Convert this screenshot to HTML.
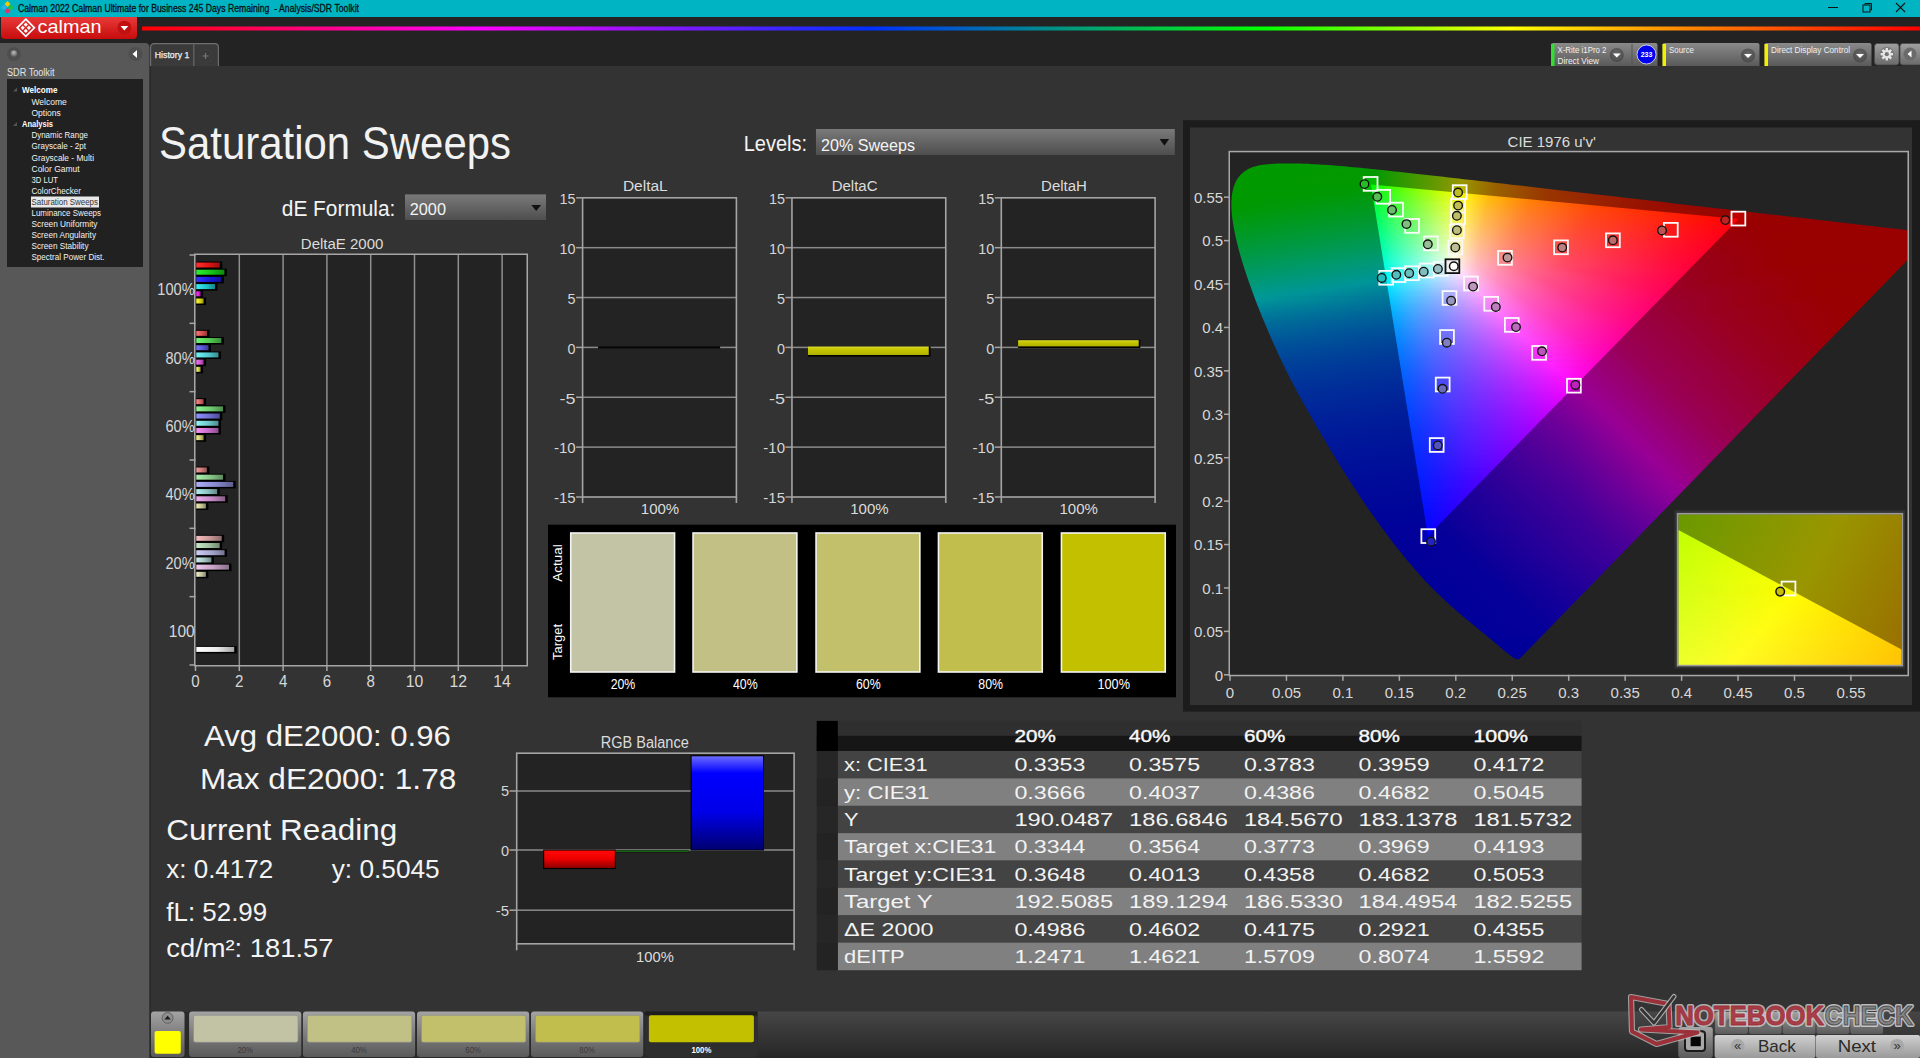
<!DOCTYPE html><html><head><meta charset="utf-8"><style>html,body{margin:0;padding:0;background:#333;overflow:hidden;width:1920px;height:1058px}svg{display:block;font-family:"Liberation Sans",sans-serif}</style></head><body><svg width="1920" height="1058" viewBox="0 0 1920 1058" font-family="Liberation Sans, sans-serif">
<defs>
<linearGradient id="logo" x1="0" y1="0" x2="0" y2="1"><stop offset="0" stop-color="#e83a3a"/><stop offset="1" stop-color="#c80c0c"/></linearGradient>
<linearGradient id="rainbow" x1="142" y1="0" x2="1920" y2="0" gradientUnits="userSpaceOnUse"><stop offset="0" stop-color="#ff0000"/><stop offset="0.19" stop-color="#ff00ff"/><stop offset="0.41" stop-color="#0030ff"/><stop offset="0.63" stop-color="#00ff00"/><stop offset="0.77" stop-color="#ffff00"/><stop offset="0.86" stop-color="#ff9000"/><stop offset="1" stop-color="#ff0000"/></linearGradient>
<linearGradient id="dd" x1="0" y1="0" x2="0" y2="1"><stop offset="0" stop-color="#7a7a7a"/><stop offset="1" stop-color="#4e4e4e"/></linearGradient>
<linearGradient id="ctl" x1="0" y1="0" x2="0" y2="1"><stop offset="0" stop-color="#8a8a8a"/><stop offset="1" stop-color="#5a5a5a"/></linearGradient>
<linearGradient id="tab" x1="0" y1="0" x2="0" y2="1"><stop offset="0" stop-color="#555"/><stop offset="1" stop-color="#3a3a3a"/></linearGradient>
<linearGradient id="btnb" x1="0" y1="0" x2="0" y2="1"><stop offset="0" stop-color="#b8b8b8"/><stop offset="1" stop-color="#8a8a8a"/></linearGradient>
<linearGradient id="strip" x1="0" y1="0" x2="0" y2="1"><stop offset="0" stop-color="#4a4a4a"/><stop offset="1" stop-color="#2a2a2a"/></linearGradient>
<linearGradient id="swb" x1="0" y1="0" x2="0" y2="1"><stop offset="0" stop-color="#8a8a8a"/><stop offset="1" stop-color="#4a4a4a"/></linearGradient>
<radialGradient id="knob" cx="0.5" cy="0.35" r="0.6"><stop offset="0" stop-color="#bbb"/><stop offset="1" stop-color="#666"/></radialGradient>
<radialGradient id="knobd" cx="0.5" cy="0.4" r="0.6"><stop offset="0" stop-color="#6a6a6a"/><stop offset="1" stop-color="#4a4a4a"/></radialGradient>
<linearGradient id="bluebar" x1="0" y1="0" x2="0" y2="1"><stop offset="0" stop-color="#2020ff"/><stop offset="0.6" stop-color="#0000e0"/><stop offset="1" stop-color="#000090"/></linearGradient>
<linearGradient id="redbar" x1="0" y1="0" x2="0" y2="1"><stop offset="0" stop-color="#ff1010"/><stop offset="1" stop-color="#c00000"/></linearGradient>
<linearGradient id="gbtn" x1="0" y1="0" x2="0" y2="1"><stop offset="0" stop-color="#a0a0a0"/><stop offset="1" stop-color="#6a6a6a"/></linearGradient>
<linearGradient id="hb1" x1="0" y1="0" x2="1" y2="0"><stop offset="0" stop-color="#ff2f2f"/><stop offset="0.55" stop-color="#dc1414"/><stop offset="1" stop-color="#9a0e0e"/></linearGradient>
<linearGradient id="hb2" x1="0" y1="0" x2="1" y2="0"><stop offset="0" stop-color="#2fef2f"/><stop offset="0.55" stop-color="#14c314"/><stop offset="1" stop-color="#0e880e"/></linearGradient>
<linearGradient id="hb3" x1="0" y1="0" x2="1" y2="0"><stop offset="0" stop-color="#3434ff"/><stop offset="0.55" stop-color="#1919d7"/><stop offset="1" stop-color="#111196"/></linearGradient>
<linearGradient id="hb4" x1="0" y1="0" x2="1" y2="0"><stop offset="0" stop-color="#3aeff5"/><stop offset="0.55" stop-color="#1ec3c8"/><stop offset="1" stop-color="#15888c"/></linearGradient>
<linearGradient id="hb5" x1="0" y1="0" x2="1" y2="0"><stop offset="0" stop-color="#ff3aff"/><stop offset="0.55" stop-color="#d71ed7"/><stop offset="1" stop-color="#961596"/></linearGradient>
<linearGradient id="hb6" x1="0" y1="0" x2="1" y2="0"><stop offset="0" stop-color="#ffff34"/><stop offset="0.55" stop-color="#d7d219"/><stop offset="1" stop-color="#969311"/></linearGradient>
<linearGradient id="hb7" x1="0" y1="0" x2="1" y2="0"><stop offset="0" stop-color="#ff7171"/><stop offset="0.55" stop-color="#d75050"/><stop offset="1" stop-color="#963838"/></linearGradient>
<linearGradient id="hb8" x1="0" y1="0" x2="1" y2="0"><stop offset="0" stop-color="#71f571"/><stop offset="0.55" stop-color="#50c850"/><stop offset="1" stop-color="#388c38"/></linearGradient>
<linearGradient id="hb9" x1="0" y1="0" x2="1" y2="0"><stop offset="0" stop-color="#7676ff"/><stop offset="0.55" stop-color="#5555d2"/><stop offset="1" stop-color="#3b3b93"/></linearGradient>
<linearGradient id="hb10" x1="0" y1="0" x2="1" y2="0"><stop offset="0" stop-color="#71f5fa"/><stop offset="0.55" stop-color="#50c8cd"/><stop offset="1" stop-color="#388c8f"/></linearGradient>
<linearGradient id="hb11" x1="0" y1="0" x2="1" y2="0"><stop offset="0" stop-color="#fa76fa"/><stop offset="0.55" stop-color="#cd55cd"/><stop offset="1" stop-color="#8f3b8f"/></linearGradient>
<linearGradient id="hb12" x1="0" y1="0" x2="1" y2="0"><stop offset="0" stop-color="#fafa76"/><stop offset="0.55" stop-color="#cdcd55"/><stop offset="1" stop-color="#8f8f3b"/></linearGradient>
<linearGradient id="hb13" x1="0" y1="0" x2="1" y2="0"><stop offset="0" stop-color="#ff8787"/><stop offset="0.55" stop-color="#d26464"/><stop offset="1" stop-color="#934646"/></linearGradient>
<linearGradient id="hb14" x1="0" y1="0" x2="1" y2="0"><stop offset="0" stop-color="#92f592"/><stop offset="0.55" stop-color="#6ec86e"/><stop offset="1" stop-color="#4d8c4d"/></linearGradient>
<linearGradient id="hb15" x1="0" y1="0" x2="1" y2="0"><stop offset="0" stop-color="#9292ff"/><stop offset="0.55" stop-color="#6e6ed2"/><stop offset="1" stop-color="#4d4d93"/></linearGradient>
<linearGradient id="hb16" x1="0" y1="0" x2="1" y2="0"><stop offset="0" stop-color="#92f5f5"/><stop offset="0.55" stop-color="#6ec8c8"/><stop offset="1" stop-color="#4d8c8c"/></linearGradient>
<linearGradient id="hb17" x1="0" y1="0" x2="1" y2="0"><stop offset="0" stop-color="#f592f5"/><stop offset="0.55" stop-color="#c86ec8"/><stop offset="1" stop-color="#8c4d8c"/></linearGradient>
<linearGradient id="hb18" x1="0" y1="0" x2="1" y2="0"><stop offset="0" stop-color="#f5f592"/><stop offset="0.55" stop-color="#c8c86e"/><stop offset="1" stop-color="#8c8c4d"/></linearGradient>
<linearGradient id="hb19" x1="0" y1="0" x2="1" y2="0"><stop offset="0" stop-color="#f59d9d"/><stop offset="0.55" stop-color="#c87878"/><stop offset="1" stop-color="#8c5454"/></linearGradient>
<linearGradient id="hb20" x1="0" y1="0" x2="1" y2="0"><stop offset="0" stop-color="#adefad"/><stop offset="0.55" stop-color="#87c387"/><stop offset="1" stop-color="#5e885e"/></linearGradient>
<linearGradient id="hb21" x1="0" y1="0" x2="1" y2="0"><stop offset="0" stop-color="#adadfa"/><stop offset="0.55" stop-color="#8787cd"/><stop offset="1" stop-color="#5e5e8f"/></linearGradient>
<linearGradient id="hb22" x1="0" y1="0" x2="1" y2="0"><stop offset="0" stop-color="#b3efef"/><stop offset="0.55" stop-color="#8cc3c3"/><stop offset="1" stop-color="#628888"/></linearGradient>
<linearGradient id="hb23" x1="0" y1="0" x2="1" y2="0"><stop offset="0" stop-color="#efadef"/><stop offset="0.55" stop-color="#c387c3"/><stop offset="1" stop-color="#885e88"/></linearGradient>
<linearGradient id="hb24" x1="0" y1="0" x2="1" y2="0"><stop offset="0" stop-color="#efefb3"/><stop offset="0.55" stop-color="#c3c38c"/><stop offset="1" stop-color="#888862"/></linearGradient>
<linearGradient id="hb25" x1="0" y1="0" x2="1" y2="0"><stop offset="0" stop-color="#f5bebe"/><stop offset="0.55" stop-color="#c89696"/><stop offset="1" stop-color="#8c6969"/></linearGradient>
<linearGradient id="hb26" x1="0" y1="0" x2="1" y2="0"><stop offset="0" stop-color="#c9eac9"/><stop offset="0.55" stop-color="#a0bea0"/><stop offset="1" stop-color="#708570"/></linearGradient>
<linearGradient id="hb27" x1="0" y1="0" x2="1" y2="0"><stop offset="0" stop-color="#cecefa"/><stop offset="0.55" stop-color="#a5a5cd"/><stop offset="1" stop-color="#73738f"/></linearGradient>
<linearGradient id="hb28" x1="0" y1="0" x2="1" y2="0"><stop offset="0" stop-color="#ceefef"/><stop offset="0.55" stop-color="#a5c3c3"/><stop offset="1" stop-color="#738888"/></linearGradient>
<linearGradient id="hb29" x1="0" y1="0" x2="1" y2="0"><stop offset="0" stop-color="#efc9ef"/><stop offset="0.55" stop-color="#c3a0c3"/><stop offset="1" stop-color="#887088"/></linearGradient>
<linearGradient id="hb30" x1="0" y1="0" x2="1" y2="0"><stop offset="0" stop-color="#efefc9"/><stop offset="0.55" stop-color="#c3c3a0"/><stop offset="1" stop-color="#888870"/></linearGradient>
<linearGradient id="hb31" x1="0" y1="0" x2="1" y2="0"><stop offset="0" stop-color="#ffffff"/><stop offset="0.55" stop-color="#ebebeb"/><stop offset="1" stop-color="#a4a4a4"/></linearGradient>
<linearGradient id="ybar" x1="0" y1="0" x2="0" y2="1"><stop offset="0" stop-color="#dada30"/><stop offset="0.35" stop-color="#c6c600"/><stop offset="1" stop-color="#b0b000"/></linearGradient>
<clipPath id="locclip"><path d="M1519.73,658.59 L1519.71,658.59 L1519.68,658.58 L1519.65,658.57 L1519.62,658.57 L1519.58,658.57 L1519.54,658.59 L1519.51,658.62 L1519.47,658.67 L1519.43,658.73 L1519.39,658.79 L1519.35,658.84 L1519.30,658.87 L1519.24,658.89 L1519.18,658.89 L1519.12,658.88 L1519.05,658.87 L1518.99,658.86 L1518.92,658.88 L1518.85,658.91 L1518.78,658.96 L1518.71,659.02 L1518.64,659.08 L1518.56,659.13 L1518.48,659.16 L1518.40,659.18 L1518.31,659.18 L1518.22,659.18 L1518.13,659.17 L1518.03,659.17 L1517.92,659.17 L1517.81,659.17 L1517.69,659.17 L1517.57,659.17 L1517.44,659.17 L1517.31,659.17 L1517.17,659.17 L1517.03,659.18 L1516.90,659.20 L1516.76,659.22 L1516.61,659.23 L1516.43,659.22 L1516.23,659.17 L1516.01,659.10 L1515.77,659.00 L1515.51,658.88 L1515.22,658.73 L1514.90,658.55 L1514.54,658.34 L1514.14,658.09 L1513.70,657.81 L1513.22,657.50 L1512.71,657.16 L1512.18,656.79 L1511.62,656.39 L1511.04,655.96 L1510.44,655.52 L1509.82,655.04 L1509.15,654.52 L1508.44,653.96 L1507.67,653.35 L1506.84,652.69 L1505.95,651.99 L1505.02,651.24 L1504.04,650.44 L1503.02,649.61 L1501.96,648.73 L1500.87,647.81 L1499.74,646.85 L1498.57,645.84 L1497.36,644.80 L1496.09,643.72 L1494.76,642.60 L1493.39,641.45 L1491.98,640.27 L1490.51,639.06 L1488.98,637.80 L1487.37,636.47 L1485.67,635.07 L1483.87,633.59 L1481.99,632.06 L1480.03,630.46 L1477.99,628.79 L1475.89,627.07 L1473.73,625.28 L1471.52,623.46 L1469.25,621.59 L1466.91,619.66 L1464.49,617.65 L1461.98,615.53 L1459.37,613.27 L1456.66,610.91 L1453.87,608.46 L1450.98,605.91 L1448.00,603.22 L1444.92,600.38 L1441.74,597.35 L1438.49,594.23 L1435.20,591.04 L1431.80,587.69 L1428.26,584.10 L1424.53,580.16 L1420.56,575.79 L1416.34,570.99 L1411.89,565.86 L1407.26,560.39 L1402.46,554.57 L1397.52,548.40 L1392.46,541.89 L1387.26,535.01 L1381.88,527.77 L1376.37,520.19 L1370.74,512.28 L1365.04,504.05 L1359.29,495.52 L1353.44,486.61 L1347.45,477.30 L1341.38,467.67 L1335.30,457.82 L1329.25,447.83 L1323.30,437.81 L1317.36,427.65 L1311.37,417.27 L1305.42,406.75 L1299.60,396.20 L1293.98,385.72 L1288.66,375.41 L1283.61,365.17 L1278.75,354.91 L1274.11,344.71 L1269.69,334.68 L1265.51,324.91 L1261.59,315.50 L1257.92,306.39 L1254.50,297.48 L1251.31,288.84 L1248.37,280.52 L1245.67,272.55 L1243.22,264.99 L1241.04,257.85 L1239.13,251.09 L1237.47,244.70 L1236.03,238.64 L1234.79,232.90 L1233.72,227.45 L1232.85,222.34 L1232.20,217.59 L1231.75,213.16 L1231.48,209.00 L1231.38,205.07 L1231.42,201.32 L1231.63,197.78 L1232.01,194.48 L1232.55,191.42 L1233.25,188.56 L1234.08,185.88 L1235.04,183.36 L1236.15,181.01 L1237.41,178.87 L1238.82,176.90 L1240.34,175.10 L1241.97,173.46 L1243.67,171.96 L1245.47,170.63 L1247.39,169.47 L1249.41,168.47 L1251.52,167.60 L1253.68,166.84 L1255.90,166.14 L1258.17,165.55 L1260.53,165.10 L1262.95,164.74 L1265.42,164.46 L1267.92,164.22 L1270.45,163.99 L1273.02,163.80 L1275.63,163.67 L1278.29,163.58 L1280.96,163.53 L1283.64,163.49 L1286.32,163.46 L1288.98,163.45 L1291.64,163.45 L1294.32,163.48 L1297.00,163.53 L1299.71,163.59 L1302.43,163.66 L1305.18,163.76 L1307.94,163.86 L1310.71,163.99 L1313.52,164.13 L1316.36,164.28 L1319.24,164.45 L1322.17,164.63 L1325.13,164.83 L1328.12,165.04 L1331.16,165.27 L1334.23,165.51 L1337.36,165.76 L1340.53,166.02 L1343.73,166.30 L1346.98,166.59 L1350.28,166.89 L1353.63,167.21 L1357.04,167.53 L1360.50,167.87 L1364.02,168.21 L1367.59,168.57 L1371.21,168.94 L1374.90,169.33 L1378.67,169.72 L1382.50,170.12 L1386.39,170.53 L1390.35,170.95 L1394.38,171.39 L1398.48,171.83 L1402.65,172.29 L1406.89,172.75 L1411.20,173.23 L1415.57,173.72 L1420.02,174.22 L1424.55,174.73 L1429.17,175.25 L1433.86,175.78 L1438.64,176.31 L1443.49,176.86 L1448.42,177.42 L1453.44,177.99 L1458.53,178.56 L1463.71,179.15 L1468.96,179.75 L1474.30,180.37 L1479.71,180.99 L1485.21,181.62 L1490.79,182.26 L1496.46,182.91 L1502.20,183.57 L1508.03,184.24 L1513.94,184.93 L1519.93,185.62 L1525.99,186.31 L1532.13,187.02 L1538.35,187.74 L1544.65,188.46 L1551.02,189.20 L1557.45,189.94 L1563.94,190.68 L1570.49,191.43 L1577.12,192.19 L1583.81,192.96 L1590.55,193.73 L1597.31,194.50 L1604.09,195.28 L1610.92,196.07 L1617.81,196.86 L1624.73,197.66 L1631.64,198.46 L1638.53,199.26 L1645.34,200.05 L1652.09,200.82 L1658.80,201.60 L1665.48,202.36 L1672.12,203.13 L1678.74,203.89 L1685.32,204.64 L1691.91,205.40 L1698.51,206.16 L1705.08,206.91 L1711.58,207.66 L1717.98,208.39 L1724.24,209.11 L1730.37,209.81 L1736.41,210.50 L1742.35,211.18 L1748.18,211.84 L1753.90,212.49 L1759.49,213.13 L1764.98,213.76 L1770.35,214.38 L1775.62,214.99 L1780.76,215.58 L1785.77,216.16 L1790.65,216.73 L1795.39,217.27 L1799.99,217.81 L1804.47,218.32 L1808.82,218.83 L1813.05,219.31 L1817.17,219.79 L1821.16,220.24 L1825.02,220.68 L1828.76,221.11 L1832.39,221.52 L1835.92,221.93 L1839.37,222.32 L1842.72,222.71 L1845.96,223.08 L1849.10,223.44 L1852.16,223.80 L1855.16,224.14 L1858.09,224.48 L1860.97,224.81 L1863.78,225.14 L1866.52,225.45 L1869.19,225.76 L1871.79,226.06 L1874.32,226.35 L1876.79,226.64 L1879.18,226.92 L1881.51,227.19 L1883.76,227.45 L1885.94,227.70 L1888.05,227.94 L1890.08,228.17 L1892.03,228.39 L1893.92,228.60 L1895.73,228.80 L1897.47,229.00 L1899.15,229.19 L1900.69,229.36 L1902.09,229.52 L1903.41,229.68 L1904.75,229.83 L1906.17,230.00 L1907.76,230.18 L1909.55,230.39 L1911.49,230.61 L1913.52,230.85 L1915.57,231.08 L1917.58,231.31 L1919.48,231.53 L1921.34,231.75 L1923.22,231.96 L1925.06,232.18 L1926.79,232.38 L1928.35,232.56 L1929.66,232.71 L1930.73,232.83 L1931.59,232.93 L1932.27,233.01 L1932.82,233.07 L1933.25,233.12 L1933.61,233.16 Z"/></clipPath>
<clipPath id="plotclip"><rect x="1230.0" y="152.3" width="677.5" height="522.5"/></clipPath>
<clipPath id="triclip"><path d="M1738.65,218.92 L1370.92,184.53 L1427.87,535.88 Z"/></clipPath>
<linearGradient id="go0" gradientUnits="userSpaceOnUse" x1="1259.0" x2="1329.0" y1="0" y2="0"><stop offset="0.0071" stop-color="#090"/><stop offset="0.9929" stop-color="#090"/></linearGradient>
<linearGradient id="go1" gradientUnits="userSpaceOnUse" x1="1250.0" x2="1354.0" y1="0" y2="0"><stop offset="0.0048" stop-color="#090"/><stop offset="0.9952" stop-color="#090"/></linearGradient>
<linearGradient id="go2" gradientUnits="userSpaceOnUse" x1="1246.0" x2="1375.0" y1="0" y2="0"><stop offset="0.0039" stop-color="#090"/><stop offset="0.9961" stop-color="#039900"/></linearGradient>
<linearGradient id="go3" gradientUnits="userSpaceOnUse" x1="1242.0" x2="1394.0" y1="0" y2="0"><stop offset="0.0033" stop-color="#090"/><stop offset="0.8783" stop-color="#049900"/><stop offset="0.9967" stop-color="#1d9900"/></linearGradient>
<linearGradient id="go4" gradientUnits="userSpaceOnUse" x1="1239.0" x2="1410.0" y1="0" y2="0"><stop offset="0.0029" stop-color="#090"/><stop offset="0.7924" stop-color="#039900"/><stop offset="0.9971" stop-color="#359900"/></linearGradient>
<linearGradient id="go5" gradientUnits="userSpaceOnUse" x1="1238.0" x2="1428.0" y1="0" y2="0"><stop offset="0.0026" stop-color="#090"/><stop offset="0.7184" stop-color="#039900"/><stop offset="0.9974" stop-color="#549900"/></linearGradient>
<linearGradient id="go6" gradientUnits="userSpaceOnUse" x1="1235.0" x2="1447.0" y1="0" y2="0"><stop offset="0.0024" stop-color="#090"/><stop offset="0.6580" stop-color="#039900"/><stop offset="0.9316" stop-color="#5e9900"/><stop offset="0.9976" stop-color="#799900"/></linearGradient>
<linearGradient id="go7" gradientUnits="userSpaceOnUse" x1="1234.0" x2="1462.0" y1="0" y2="0"><stop offset="0.0022" stop-color="#090"/><stop offset="0.6162" stop-color="#049900"/><stop offset="0.8706" stop-color="#5e9900"/><stop offset="0.9978" stop-color="#990"/></linearGradient>
<linearGradient id="go8" gradientUnits="userSpaceOnUse" x1="1233.0" x2="1483.0" y1="0" y2="0"><stop offset="0.0020" stop-color="#090"/><stop offset="0.5660" stop-color="#049900"/><stop offset="0.7980" stop-color="#5e9900"/><stop offset="0.9180" stop-color="#999600"/><stop offset="0.9980" stop-color="#997300"/></linearGradient>
<linearGradient id="go9" gradientUnits="userSpaceOnUse" x1="1233.0" x2="1500.0" y1="0" y2="0"><stop offset="0.0019" stop-color="#090"/><stop offset="0.5262" stop-color="#039900"/><stop offset="0.7472" stop-color="#5f9900"/><stop offset="0.8596" stop-color="#999600"/><stop offset="0.9794" stop-color="#996200"/><stop offset="0.9981" stop-color="#995d00"/></linearGradient>
<linearGradient id="go10" gradientUnits="userSpaceOnUse" x1="1232.0" x2="1517.0" y1="0" y2="0"><stop offset="0.0018" stop-color="#090"/><stop offset="0.4965" stop-color="#039900"/><stop offset="0.7035" stop-color="#5f9900"/><stop offset="0.8088" stop-color="#999600"/><stop offset="0.9211" stop-color="#996200"/><stop offset="0.9982" stop-color="#994c00"/></linearGradient>
<linearGradient id="go11" gradientUnits="userSpaceOnUse" x1="1231.0" x2="1529.0" y1="0" y2="0"><stop offset="0.0017" stop-color="#090"/><stop offset="0.4782" stop-color="#039900"/><stop offset="0.6728" stop-color="#5d9900"/><stop offset="0.7768" stop-color="#999500"/><stop offset="0.8842" stop-color="#996200"/><stop offset="0.9983" stop-color="#994200"/></linearGradient>
<linearGradient id="go12" gradientUnits="userSpaceOnUse" x1="1230.0" x2="1548.0" y1="0" y2="0"><stop offset="0.0016" stop-color="#090"/><stop offset="0.4513" stop-color="#009903"/><stop offset="0.6651" stop-color="#719900"/><stop offset="0.7311" stop-color="#999500"/><stop offset="0.8318" stop-color="#996200"/><stop offset="0.9984" stop-color="#993600"/></linearGradient>
<linearGradient id="go13" gradientUnits="userSpaceOnUse" x1="1230.0" x2="1567.0" y1="0" y2="0"><stop offset="0.0015" stop-color="#090"/><stop offset="0.4110" stop-color="#009905"/><stop offset="0.4318" stop-color="#009906"/><stop offset="0.4377" stop-color="#099900"/><stop offset="0.6068" stop-color="#649900"/><stop offset="0.6869" stop-color="#999700"/><stop offset="0.7819" stop-color="#996300"/><stop offset="0.9392" stop-color="#993600"/><stop offset="0.9985" stop-color="#992c00"/></linearGradient>
<linearGradient id="go14" gradientUnits="userSpaceOnUse" x1="1230.0" x2="1587.0" y1="0" y2="0"><stop offset="0.0014" stop-color="#090"/><stop offset="0.3543" stop-color="#009905"/><stop offset="0.4132" stop-color="#009909"/><stop offset="0.4160" stop-color="#0b9900"/><stop offset="0.5756" stop-color="#690"/><stop offset="0.6485" stop-color="#999600"/><stop offset="0.7381" stop-color="#996200"/><stop offset="0.8866" stop-color="#993600"/><stop offset="0.9986" stop-color="#992300"/></linearGradient>
<linearGradient id="go15" gradientUnits="userSpaceOnUse" x1="1230.0" x2="1601.0" y1="0" y2="0"><stop offset="0.0013" stop-color="#090"/><stop offset="0.3113" stop-color="#009905"/><stop offset="0.4030" stop-color="#00990c"/><stop offset="0.4057" stop-color="#0e9900"/><stop offset="0.5593" stop-color="#6a9900"/><stop offset="0.6240" stop-color="#999600"/><stop offset="0.7102" stop-color="#996200"/><stop offset="0.8531" stop-color="#993600"/><stop offset="0.9987" stop-color="#991e00"/></linearGradient>
<linearGradient id="go16" gradientUnits="userSpaceOnUse" x1="1230.0" x2="1621.0" y1="0" y2="0"><stop offset="0.0013" stop-color="#090"/><stop offset="0.2673" stop-color="#009905"/><stop offset="0.3875" stop-color="#00990f"/><stop offset="0.3900" stop-color="#190"/><stop offset="0.5332" stop-color="#6c9900"/><stop offset="0.5921" stop-color="#999500"/><stop offset="0.6739" stop-color="#996200"/><stop offset="0.8095" stop-color="#993600"/><stop offset="0.9987" stop-color="#991800"/></linearGradient>
<linearGradient id="go17" gradientUnits="userSpaceOnUse" x1="1230.0" x2="1635.0" y1="0" y2="0"><stop offset="0.0012" stop-color="#090"/><stop offset="0.2333" stop-color="#009906"/><stop offset="0.3790" stop-color="#009912"/><stop offset="0.3815" stop-color="#149900"/><stop offset="0.5198" stop-color="#719900"/><stop offset="0.5716" stop-color="#999500"/><stop offset="0.6506" stop-color="#996200"/><stop offset="0.7815" stop-color="#993600"/><stop offset="0.9988" stop-color="#991400"/></linearGradient>
<linearGradient id="go18" gradientUnits="userSpaceOnUse" x1="1230.0" x2="1656.0" y1="0" y2="0"><stop offset="0.0012" stop-color="#090"/><stop offset="0.2007" stop-color="#009907"/><stop offset="0.3650" stop-color="#009915"/><stop offset="0.3674" stop-color="#179900"/><stop offset="0.4965" stop-color="#739900"/><stop offset="0.5434" stop-color="#999500"/><stop offset="0.6209" stop-color="#996000"/><stop offset="0.7477" stop-color="#993500"/><stop offset="0.9800" stop-color="#991000"/><stop offset="0.9988" stop-color="#990f00"/></linearGradient>
<linearGradient id="go19" gradientUnits="userSpaceOnUse" x1="1230.0" x2="1669.0" y1="0" y2="0"><stop offset="0.0011" stop-color="#090"/><stop offset="0.1879" stop-color="#009908"/><stop offset="0.3610" stop-color="#009918"/><stop offset="0.3633" stop-color="#1b9900"/><stop offset="0.4863" stop-color="#790"/><stop offset="0.5251" stop-color="#999600"/><stop offset="0.5979" stop-color="#996300"/><stop offset="0.7187" stop-color="#993600"/><stop offset="0.9396" stop-color="#991200"/><stop offset="0.9989" stop-color="#990c00"/></linearGradient>
<linearGradient id="go20" gradientUnits="userSpaceOnUse" x1="1230.0" x2="1689.0" y1="0" y2="0"><stop offset="0.0011" stop-color="#090"/><stop offset="0.2451" stop-color="#091"/><stop offset="0.3497" stop-color="#00991b"/><stop offset="0.3519" stop-color="#1f9900"/><stop offset="0.4695" stop-color="#7c9900"/><stop offset="0.5022" stop-color="#999600"/><stop offset="0.5719" stop-color="#996200"/><stop offset="0.6874" stop-color="#993600"/><stop offset="0.8987" stop-color="#991200"/><stop offset="0.9989" stop-color="#990800"/></linearGradient>
<linearGradient id="go21" gradientUnits="userSpaceOnUse" x1="1230.0" x2="1709.0" y1="0" y2="0"><stop offset="0.0010" stop-color="#090"/><stop offset="0.3392" stop-color="#00991e"/><stop offset="0.3413" stop-color="#290"/><stop offset="0.4520" stop-color="#7e9900"/><stop offset="0.4812" stop-color="#999600"/><stop offset="0.5480" stop-color="#996200"/><stop offset="0.6587" stop-color="#993600"/><stop offset="0.8612" stop-color="#910"/><stop offset="0.9990" stop-color="#990500"/></linearGradient>
<linearGradient id="go22" gradientUnits="userSpaceOnUse" x1="1230.0" x2="1721.0" y1="0" y2="0"><stop offset="0.0010" stop-color="#090"/><stop offset="0.3350" stop-color="#009921"/><stop offset="0.3371" stop-color="#259900"/><stop offset="0.4450" stop-color="#839900"/><stop offset="0.4695" stop-color="#999500"/><stop offset="0.5346" stop-color="#996200"/><stop offset="0.6426" stop-color="#993600"/><stop offset="0.8401" stop-color="#910"/><stop offset="0.9990" stop-color="#990300"/></linearGradient>
<linearGradient id="go23" gradientUnits="userSpaceOnUse" x1="1230.0" x2="1740.0" y1="0" y2="0"><stop offset="0.0010" stop-color="#009902"/><stop offset="0.3265" stop-color="#009925"/><stop offset="0.3284" stop-color="#289900"/><stop offset="0.4324" stop-color="#879900"/><stop offset="0.4520" stop-color="#999500"/><stop offset="0.5167" stop-color="#996000"/><stop offset="0.6225" stop-color="#993500"/><stop offset="0.8167" stop-color="#991000"/><stop offset="0.9990" stop-color="#900"/></linearGradient>
<linearGradient id="go24" gradientUnits="userSpaceOnUse" x1="1230.0" x2="1757.0" y1="0" y2="0"><stop offset="0.0009" stop-color="#009904"/><stop offset="0.3197" stop-color="#009928"/><stop offset="0.3216" stop-color="#2c9900"/><stop offset="0.4203" stop-color="#8a9900"/><stop offset="0.4374" stop-color="#999400"/><stop offset="0.5000" stop-color="#996000"/><stop offset="0.6025" stop-color="#993400"/><stop offset="0.7903" stop-color="#991000"/><stop offset="0.9991" stop-color="#900"/></linearGradient>
<linearGradient id="go25" gradientUnits="userSpaceOnUse" x1="1230.0" x2="1779.0" y1="0" y2="0"><stop offset="0.0009" stop-color="#009907"/><stop offset="0.3106" stop-color="#00992b"/><stop offset="0.3124" stop-color="#2f9900"/><stop offset="0.4071" stop-color="#8f9900"/><stop offset="0.4217" stop-color="#999200"/><stop offset="0.4818" stop-color="#995f00"/><stop offset="0.5820" stop-color="#930"/><stop offset="0.7659" stop-color="#990f00"/><stop offset="0.9827" stop-color="#900"/><stop offset="0.9991" stop-color="#900"/></linearGradient>
<linearGradient id="go26" gradientUnits="userSpaceOnUse" x1="1230.0" x2="1794.0" y1="0" y2="0"><stop offset="0.0009" stop-color="#009909"/><stop offset="0.3076" stop-color="#00992f"/><stop offset="0.3094" stop-color="#349900"/><stop offset="0.3998" stop-color="#939900"/><stop offset="0.4176" stop-color="#998900"/><stop offset="0.4814" stop-color="#995700"/><stop offset="0.5878" stop-color="#992d00"/><stop offset="0.7881" stop-color="#990a00"/><stop offset="0.9743" stop-color="#900"/><stop offset="0.9991" stop-color="#900"/></linearGradient>
<linearGradient id="go27" gradientUnits="userSpaceOnUse" x1="1230.0" x2="1812.0" y1="0" y2="0"><stop offset="0.0009" stop-color="#00990c"/><stop offset="0.3015" stop-color="#009932"/><stop offset="0.3033" stop-color="#389900"/><stop offset="0.3943" stop-color="#999500"/><stop offset="0.4493" stop-color="#996200"/><stop offset="0.5404" stop-color="#993600"/><stop offset="0.7070" stop-color="#910"/><stop offset="0.9235" stop-color="#900"/><stop offset="0.9991" stop-color="#900"/></linearGradient>
<linearGradient id="go28" gradientUnits="userSpaceOnUse" x1="1230.0" x2="1829.0" y1="0" y2="0"><stop offset="0.0008" stop-color="#00990e"/><stop offset="0.2963" stop-color="#009936"/><stop offset="0.2980" stop-color="#3b9900"/><stop offset="0.3831" stop-color="#999500"/><stop offset="0.4366" stop-color="#996200"/><stop offset="0.5250" stop-color="#993600"/><stop offset="0.6870" stop-color="#910"/><stop offset="0.8957" stop-color="#900"/><stop offset="0.9992" stop-color="#900"/></linearGradient>
<linearGradient id="go29" gradientUnits="userSpaceOnUse" x1="1230.0" x2="1846.0" y1="0" y2="0"><stop offset="0.0008" stop-color="#091"/><stop offset="0.2914" stop-color="#009939"/><stop offset="0.2930" stop-color="#3f9900"/><stop offset="0.3709" stop-color="#999700"/><stop offset="0.4229" stop-color="#996300"/><stop offset="0.5089" stop-color="#993600"/><stop offset="0.6648" stop-color="#991200"/><stop offset="0.8612" stop-color="#900"/><stop offset="0.9992" stop-color="#900"/></linearGradient>
<linearGradient id="go30" gradientUnits="userSpaceOnUse" x1="1230.0" x2="1864.0" y1="0" y2="0"><stop offset="0.0008" stop-color="#009913"/><stop offset="0.2863" stop-color="#00993d"/><stop offset="0.2879" stop-color="#429900"/><stop offset="0.3604" stop-color="#999600"/><stop offset="0.4109" stop-color="#996200"/><stop offset="0.4945" stop-color="#993600"/><stop offset="0.6475" stop-color="#991200"/><stop offset="0.8273" stop-color="#900"/><stop offset="0.9992" stop-color="#900"/></linearGradient>
<linearGradient id="go31" gradientUnits="userSpaceOnUse" x1="1230.0" x2="1883.0" y1="0" y2="0"><stop offset="0.0008" stop-color="#009916"/><stop offset="0.2810" stop-color="#009940"/><stop offset="0.2825" stop-color="#469900"/><stop offset="0.3499" stop-color="#999600"/><stop offset="0.3989" stop-color="#996200"/><stop offset="0.4801" stop-color="#993600"/><stop offset="0.6286" stop-color="#910"/><stop offset="0.7787" stop-color="#990001"/><stop offset="0.9992" stop-color="#900"/></linearGradient>
<linearGradient id="go32" gradientUnits="userSpaceOnUse" x1="1230.0" x2="1901.0" y1="0" y2="0"><stop offset="0.0007" stop-color="#009919"/><stop offset="0.2765" stop-color="#094"/><stop offset="0.2779" stop-color="#4a9900"/><stop offset="0.3405" stop-color="#999500"/><stop offset="0.3882" stop-color="#996200"/><stop offset="0.4672" stop-color="#993600"/><stop offset="0.6118" stop-color="#910"/><stop offset="0.7250" stop-color="#990300"/><stop offset="0.7280" stop-color="#990006"/><stop offset="0.8428" stop-color="#900"/><stop offset="0.9993" stop-color="#900"/></linearGradient>
<linearGradient id="go33" gradientUnits="userSpaceOnUse" x1="1230.0" x2="1907.5" y1="0" y2="0"><stop offset="0.0007" stop-color="#00991b"/><stop offset="0.2782" stop-color="#009948"/><stop offset="0.2797" stop-color="#4f9900"/><stop offset="0.3373" stop-color="#999500"/><stop offset="0.3845" stop-color="#996200"/><stop offset="0.4627" stop-color="#993600"/><stop offset="0.6059" stop-color="#910"/><stop offset="0.7092" stop-color="#990400"/><stop offset="0.7107" stop-color="#990009"/><stop offset="0.8155" stop-color="#900"/><stop offset="1.0000" stop-color="#900"/></linearGradient>
<linearGradient id="go34" gradientUnits="userSpaceOnUse" x1="1231.0" x2="1907.5" y1="0" y2="0"><stop offset="0.0007" stop-color="#00991e"/><stop offset="0.2801" stop-color="#00994c"/><stop offset="0.2816" stop-color="#539900"/><stop offset="0.3348" stop-color="#999700"/><stop offset="0.3821" stop-color="#996300"/><stop offset="0.4605" stop-color="#993600"/><stop offset="0.6024" stop-color="#991200"/><stop offset="0.7014" stop-color="#990500"/><stop offset="0.7029" stop-color="#99000a"/><stop offset="0.8108" stop-color="#900"/><stop offset="1.0000" stop-color="#900"/></linearGradient>
<linearGradient id="go35" gradientUnits="userSpaceOnUse" x1="1231.0" x2="1907.5" y1="0" y2="0"><stop offset="0.0007" stop-color="#009921"/><stop offset="0.2831" stop-color="#009950"/><stop offset="0.2846" stop-color="#579900"/><stop offset="0.3348" stop-color="#999600"/><stop offset="0.3821" stop-color="#996300"/><stop offset="0.4605" stop-color="#993600"/><stop offset="0.6024" stop-color="#991200"/><stop offset="0.6925" stop-color="#990600"/><stop offset="0.6940" stop-color="#99000c"/><stop offset="0.8093" stop-color="#900"/><stop offset="1.0000" stop-color="#900"/></linearGradient>
<linearGradient id="go36" gradientUnits="userSpaceOnUse" x1="1232.0" x2="1907.5" y1="0" y2="0"><stop offset="0.0007" stop-color="#009924"/><stop offset="0.2850" stop-color="#009954"/><stop offset="0.2865" stop-color="#5b9900"/><stop offset="0.3338" stop-color="#999600"/><stop offset="0.3812" stop-color="#996200"/><stop offset="0.4597" stop-color="#993600"/><stop offset="0.6033" stop-color="#991200"/><stop offset="0.6847" stop-color="#990600"/><stop offset="0.6862" stop-color="#99000e"/><stop offset="0.8090" stop-color="#900"/><stop offset="1.0000" stop-color="#900"/></linearGradient>
<linearGradient id="go37" gradientUnits="userSpaceOnUse" x1="1232.0" x2="1907.5" y1="0" y2="0"><stop offset="0.0007" stop-color="#009927"/><stop offset="0.2879" stop-color="#009957"/><stop offset="0.2894" stop-color="#5f9900"/><stop offset="0.3338" stop-color="#999600"/><stop offset="0.3812" stop-color="#996200"/><stop offset="0.4597" stop-color="#993600"/><stop offset="0.6033" stop-color="#910"/><stop offset="0.6758" stop-color="#990700"/><stop offset="0.6773" stop-color="#990010"/><stop offset="0.8090" stop-color="#900"/><stop offset="1.0000" stop-color="#900"/></linearGradient>
<linearGradient id="go38" gradientUnits="userSpaceOnUse" x1="1233.0" x2="1907.5" y1="0" y2="0"><stop offset="0.0007" stop-color="#00992a"/><stop offset="0.2898" stop-color="#00995b"/><stop offset="0.2913" stop-color="#639900"/><stop offset="0.3328" stop-color="#999500"/><stop offset="0.3803" stop-color="#996200"/><stop offset="0.4589" stop-color="#993600"/><stop offset="0.6027" stop-color="#910"/><stop offset="0.6679" stop-color="#990800"/><stop offset="0.6694" stop-color="#990012"/><stop offset="0.8102" stop-color="#900"/><stop offset="1.0000" stop-color="#900"/></linearGradient>
<linearGradient id="go39" gradientUnits="userSpaceOnUse" x1="1233.0" x2="1907.5" y1="0" y2="0"><stop offset="0.0007" stop-color="#00992d"/><stop offset="0.2928" stop-color="#009960"/><stop offset="0.2943" stop-color="#679900"/><stop offset="0.3328" stop-color="#999500"/><stop offset="0.3818" stop-color="#996000"/><stop offset="0.4618" stop-color="#993500"/><stop offset="0.6086" stop-color="#991000"/><stop offset="0.6590" stop-color="#990900"/><stop offset="0.6605" stop-color="#990014"/><stop offset="0.8117" stop-color="#900"/><stop offset="1.0000" stop-color="#900"/></linearGradient>
<linearGradient id="go40" gradientUnits="userSpaceOnUse" x1="1234.0" x2="1907.5" y1="0" y2="0"><stop offset="0.0007" stop-color="#009930"/><stop offset="0.2947" stop-color="#009964"/><stop offset="0.2962" stop-color="#6b9900"/><stop offset="0.3304" stop-color="#999600"/><stop offset="0.3779" stop-color="#996300"/><stop offset="0.4566" stop-color="#993600"/><stop offset="0.5991" stop-color="#991200"/><stop offset="0.6511" stop-color="#990a00"/><stop offset="0.6526" stop-color="#990016"/><stop offset="0.8144" stop-color="#900"/><stop offset="1.0000" stop-color="#900"/></linearGradient>
<linearGradient id="go41" gradientUnits="userSpaceOnUse" x1="1234.0" x2="1907.5" y1="0" y2="0"><stop offset="0.0007" stop-color="#093"/><stop offset="0.2992" stop-color="#009968"/><stop offset="0.3007" stop-color="#729900"/><stop offset="0.3304" stop-color="#999600"/><stop offset="0.3779" stop-color="#996200"/><stop offset="0.4566" stop-color="#993600"/><stop offset="0.6006" stop-color="#991200"/><stop offset="0.6422" stop-color="#990b00"/><stop offset="0.6437" stop-color="#990019"/><stop offset="0.8159" stop-color="#900"/><stop offset="1.0000" stop-color="#900"/></linearGradient>
<linearGradient id="go42" gradientUnits="userSpaceOnUse" x1="1235.0" x2="1907.5" y1="0" y2="0"><stop offset="0.0007" stop-color="#009936"/><stop offset="0.3011" stop-color="#00996c"/><stop offset="0.3026" stop-color="#769900"/><stop offset="0.3294" stop-color="#999600"/><stop offset="0.3770" stop-color="#996200"/><stop offset="0.4558" stop-color="#993600"/><stop offset="0.6000" stop-color="#910"/><stop offset="0.6342" stop-color="#990c00"/><stop offset="0.6357" stop-color="#99001b"/><stop offset="0.8171" stop-color="#900"/><stop offset="1.0000" stop-color="#900"/></linearGradient>
<linearGradient id="go43" gradientUnits="userSpaceOnUse" x1="1235.0" x2="1907.5" y1="0" y2="0"><stop offset="0.0007" stop-color="#009939"/><stop offset="0.3041" stop-color="#009971"/><stop offset="0.3056" stop-color="#7a9900"/><stop offset="0.3294" stop-color="#999500"/><stop offset="0.3770" stop-color="#996200"/><stop offset="0.4558" stop-color="#993600"/><stop offset="0.6000" stop-color="#910"/><stop offset="0.6268" stop-color="#990d00"/><stop offset="0.6283" stop-color="#99001d"/><stop offset="0.8201" stop-color="#900"/><stop offset="1.0000" stop-color="#900"/></linearGradient>
<linearGradient id="go44" gradientUnits="userSpaceOnUse" x1="1236.0" x2="1907.5" y1="0" y2="0"><stop offset="0.0007" stop-color="#00993c"/><stop offset="0.3060" stop-color="#009975"/><stop offset="0.3075" stop-color="#7f9900"/><stop offset="0.3284" stop-color="#999500"/><stop offset="0.3760" stop-color="#996200"/><stop offset="0.4550" stop-color="#993600"/><stop offset="0.5994" stop-color="#910"/><stop offset="0.6173" stop-color="#990f00"/><stop offset="0.6188" stop-color="#990020"/><stop offset="0.8198" stop-color="#900"/><stop offset="1.0000" stop-color="#900"/></linearGradient>
<linearGradient id="go45" gradientUnits="userSpaceOnUse" x1="1236.0" x2="1907.5" y1="0" y2="0"><stop offset="0.0007" stop-color="#00993f"/><stop offset="0.3090" stop-color="#00997a"/><stop offset="0.3105" stop-color="#839900"/><stop offset="0.3284" stop-color="#999400"/><stop offset="0.3775" stop-color="#996000"/><stop offset="0.4579" stop-color="#993500"/><stop offset="0.6054" stop-color="#991000"/><stop offset="0.6098" stop-color="#991000"/><stop offset="0.6113" stop-color="#902"/><stop offset="0.8213" stop-color="#900"/><stop offset="1.0000" stop-color="#900"/></linearGradient>
<linearGradient id="go46" gradientUnits="userSpaceOnUse" x1="1237.0" x2="1907.5" y1="0" y2="0"><stop offset="0.0007" stop-color="#009943"/><stop offset="0.3110" stop-color="#00997e"/><stop offset="0.3125" stop-color="#890"/><stop offset="0.3274" stop-color="#999400"/><stop offset="0.3766" stop-color="#996000"/><stop offset="0.4571" stop-color="#993400"/><stop offset="0.6003" stop-color="#910"/><stop offset="0.6018" stop-color="#990025"/><stop offset="0.8210" stop-color="#900"/><stop offset="1.0000" stop-color="#900"/></linearGradient>
<linearGradient id="go47" gradientUnits="userSpaceOnUse" x1="1238.0" x2="1907.5" y1="0" y2="0"><stop offset="0.0007" stop-color="#009946"/><stop offset="0.3129" stop-color="#009983"/><stop offset="0.3144" stop-color="#8d9900"/><stop offset="0.3264" stop-color="#999400"/><stop offset="0.3757" stop-color="#996000"/><stop offset="0.4563" stop-color="#993400"/><stop offset="0.5922" stop-color="#991200"/><stop offset="0.5937" stop-color="#990027"/><stop offset="0.8208" stop-color="#900"/><stop offset="1.0000" stop-color="#900"/></linearGradient>
<linearGradient id="go48" gradientUnits="userSpaceOnUse" x1="1238.0" x2="1907.5" y1="0" y2="0"><stop offset="0.0007" stop-color="#009949"/><stop offset="0.3174" stop-color="#098"/><stop offset="0.3189" stop-color="#949900"/><stop offset="0.3368" stop-color="#998500"/><stop offset="0.3921" stop-color="#995400"/><stop offset="0.4862" stop-color="#992a00"/><stop offset="0.5833" stop-color="#991400"/><stop offset="0.5848" stop-color="#99002a"/><stop offset="0.8208" stop-color="#900"/><stop offset="1.0000" stop-color="#900"/></linearGradient>
<linearGradient id="go49" gradientUnits="userSpaceOnUse" x1="1239.0" x2="1907.5" y1="0" y2="0"><stop offset="0.0007" stop-color="#00994d"/><stop offset="0.3194" stop-color="#00998d"/><stop offset="0.3209" stop-color="#990"/><stop offset="0.3687" stop-color="#996400"/><stop offset="0.4465" stop-color="#993800"/><stop offset="0.5752" stop-color="#991500"/><stop offset="0.5767" stop-color="#99002d"/><stop offset="0.8205" stop-color="#900"/><stop offset="1.0000" stop-color="#900"/></linearGradient>
<linearGradient id="go50" gradientUnits="userSpaceOnUse" x1="1239.0" x2="1907.5" y1="0" y2="0"><stop offset="0.0007" stop-color="#009950"/><stop offset="0.3224" stop-color="#009992"/><stop offset="0.3239" stop-color="#999500"/><stop offset="0.3732" stop-color="#996000"/><stop offset="0.4540" stop-color="#993500"/><stop offset="0.5662" stop-color="#991700"/><stop offset="0.5677" stop-color="#990030"/><stop offset="0.8175" stop-color="#900"/><stop offset="1.0000" stop-color="#900"/></linearGradient>
<linearGradient id="go51" gradientUnits="userSpaceOnUse" x1="1240.0" x2="1907.0" y1="0" y2="0"><stop offset="0.0007" stop-color="#009954"/><stop offset="0.3246" stop-color="#009997"/><stop offset="0.3261" stop-color="#999000"/><stop offset="0.3771" stop-color="#995d00"/><stop offset="0.4610" stop-color="#993200"/><stop offset="0.5585" stop-color="#991800"/><stop offset="0.5600" stop-color="#903"/><stop offset="0.8163" stop-color="#900"/><stop offset="0.9993" stop-color="#900"/></linearGradient>
<linearGradient id="go52" gradientUnits="userSpaceOnUse" x1="1241.0" x2="1905.0" y1="0" y2="0"><stop offset="0.0008" stop-color="#009957"/><stop offset="0.3276" stop-color="#009699"/><stop offset="0.3291" stop-color="#998c00"/><stop offset="0.3818" stop-color="#995900"/><stop offset="0.4706" stop-color="#992e00"/><stop offset="0.5505" stop-color="#991a00"/><stop offset="0.5520" stop-color="#990036"/><stop offset="0.8035" stop-color="#990003"/><stop offset="0.9992" stop-color="#900"/></linearGradient>
<linearGradient id="go53" gradientUnits="userSpaceOnUse" x1="1241.0" x2="1903.0" y1="0" y2="0"><stop offset="0.0008" stop-color="#00995b"/><stop offset="0.3150" stop-color="#009599"/><stop offset="0.3316" stop-color="#009199"/><stop offset="0.3331" stop-color="#998700"/><stop offset="0.3875" stop-color="#995600"/><stop offset="0.4796" stop-color="#992c00"/><stop offset="0.5446" stop-color="#991b00"/><stop offset="0.5461" stop-color="#990039"/><stop offset="0.7908" stop-color="#990006"/><stop offset="0.9237" stop-color="#900"/><stop offset="0.9992" stop-color="#900"/></linearGradient>
<linearGradient id="go54" gradientUnits="userSpaceOnUse" x1="1242.0" x2="1901.0" y1="0" y2="0"><stop offset="0.0008" stop-color="#00995f"/><stop offset="0.2967" stop-color="#009599"/><stop offset="0.3346" stop-color="#008d99"/><stop offset="0.3361" stop-color="#998300"/><stop offset="0.3938" stop-color="#995200"/><stop offset="0.4909" stop-color="#992900"/><stop offset="0.5364" stop-color="#991d00"/><stop offset="0.5379" stop-color="#99003d"/><stop offset="0.7777" stop-color="#990009"/><stop offset="0.8839" stop-color="#900"/><stop offset="0.9992" stop-color="#900"/></linearGradient>
<linearGradient id="go55" gradientUnits="userSpaceOnUse" x1="1242.0" x2="1899.0" y1="0" y2="0"><stop offset="0.0008" stop-color="#009962"/><stop offset="0.2793" stop-color="#009599"/><stop offset="0.3402" stop-color="#089"/><stop offset="0.3417" stop-color="#997e00"/><stop offset="0.4026" stop-color="#994d00"/><stop offset="0.5076" stop-color="#992400"/><stop offset="0.5304" stop-color="#991f00"/><stop offset="0.5320" stop-color="#990040"/><stop offset="0.7648" stop-color="#99000b"/><stop offset="0.8790" stop-color="#900"/><stop offset="0.9992" stop-color="#900"/></linearGradient>
<linearGradient id="go56" gradientUnits="userSpaceOnUse" x1="1243.0" x2="1897.0" y1="0" y2="0"><stop offset="0.0008" stop-color="#096"/><stop offset="0.2607" stop-color="#009599"/><stop offset="0.3433" stop-color="#008499"/><stop offset="0.3448" stop-color="#997a00"/><stop offset="0.4075" stop-color="#994b00"/><stop offset="0.5161" stop-color="#920"/><stop offset="0.5222" stop-color="#992100"/><stop offset="0.5237" stop-color="#904"/><stop offset="0.7515" stop-color="#99000f"/><stop offset="0.8800" stop-color="#900"/><stop offset="0.9992" stop-color="#900"/></linearGradient>
<linearGradient id="go57" gradientUnits="userSpaceOnUse" x1="1244.0" x2="1895.0" y1="0" y2="0"><stop offset="0.0008" stop-color="#00996a"/><stop offset="0.2404" stop-color="#009599"/><stop offset="0.3464" stop-color="#008099"/><stop offset="0.3479" stop-color="#970"/><stop offset="0.4140" stop-color="#994700"/><stop offset="0.5154" stop-color="#992300"/><stop offset="0.5169" stop-color="#990047"/><stop offset="0.7396" stop-color="#990012"/><stop offset="0.8825" stop-color="#900"/><stop offset="0.9992" stop-color="#900"/></linearGradient>
<linearGradient id="go58" gradientUnits="userSpaceOnUse" x1="1244.0" x2="1893.0" y1="0" y2="0"><stop offset="0.0008" stop-color="#00996e"/><stop offset="0.2227" stop-color="#009599"/><stop offset="0.3505" stop-color="#007c99"/><stop offset="0.3521" stop-color="#997300"/><stop offset="0.4199" stop-color="#994500"/><stop offset="0.5092" stop-color="#992500"/><stop offset="0.5108" stop-color="#99004b"/><stop offset="0.7280" stop-color="#990015"/><stop offset="0.8867" stop-color="#900"/><stop offset="0.9992" stop-color="#900"/></linearGradient>
<linearGradient id="go59" gradientUnits="userSpaceOnUse" x1="1245.0" x2="1891.0" y1="0" y2="0"><stop offset="0.0008" stop-color="#009972"/><stop offset="0.2036" stop-color="#009599"/><stop offset="0.3537" stop-color="#007899"/><stop offset="0.3553" stop-color="#997000"/><stop offset="0.4265" stop-color="#994200"/><stop offset="0.5008" stop-color="#992700"/><stop offset="0.5023" stop-color="#99004f"/><stop offset="0.7128" stop-color="#990018"/><stop offset="0.8909" stop-color="#900"/><stop offset="0.9992" stop-color="#900"/></linearGradient>
<linearGradient id="go60" gradientUnits="userSpaceOnUse" x1="1246.0" x2="1889.0" y1="0" y2="0"><stop offset="0.0008" stop-color="#009976"/><stop offset="0.1843" stop-color="#009599"/><stop offset="0.3569" stop-color="#007599"/><stop offset="0.3585" stop-color="#996d00"/><stop offset="0.4316" stop-color="#993f00"/><stop offset="0.4938" stop-color="#992900"/><stop offset="0.4953" stop-color="#990053"/><stop offset="0.7022" stop-color="#99001b"/><stop offset="0.8950" stop-color="#900"/><stop offset="0.9992" stop-color="#900"/></linearGradient>
<linearGradient id="go61" gradientUnits="userSpaceOnUse" x1="1247.0" x2="1887.0" y1="0" y2="0"><stop offset="0.0008" stop-color="#00997a"/><stop offset="0.1648" stop-color="#009499"/><stop offset="0.3602" stop-color="#007199"/><stop offset="0.3617" stop-color="#996a00"/><stop offset="0.4383" stop-color="#993c00"/><stop offset="0.4852" stop-color="#992c00"/><stop offset="0.4867" stop-color="#990057"/><stop offset="0.6867" stop-color="#990020"/><stop offset="0.8977" stop-color="#900"/><stop offset="0.9992" stop-color="#900"/></linearGradient>
<linearGradient id="go62" gradientUnits="userSpaceOnUse" x1="1247.0" x2="1885.0" y1="0" y2="0"><stop offset="0.0008" stop-color="#00997e"/><stop offset="0.1466" stop-color="#009499"/><stop offset="0.3660" stop-color="#006e99"/><stop offset="0.3676" stop-color="#960"/><stop offset="0.4475" stop-color="#993900"/><stop offset="0.4788" stop-color="#992e00"/><stop offset="0.4804" stop-color="#99005b"/><stop offset="0.6748" stop-color="#990023"/><stop offset="0.9005" stop-color="#900"/><stop offset="0.9992" stop-color="#900"/></linearGradient>
<linearGradient id="go63" gradientUnits="userSpaceOnUse" x1="1248.0" x2="1883.0" y1="0" y2="0"><stop offset="0.0008" stop-color="#009982"/><stop offset="0.1268" stop-color="#009499"/><stop offset="0.3693" stop-color="#006b99"/><stop offset="0.3709" stop-color="#996300"/><stop offset="0.4528" stop-color="#993700"/><stop offset="0.4701" stop-color="#993100"/><stop offset="0.4717" stop-color="#990060"/><stop offset="0.6606" stop-color="#990028"/><stop offset="0.9016" stop-color="#900"/><stop offset="0.9992" stop-color="#900"/></linearGradient>
<linearGradient id="go64" gradientUnits="userSpaceOnUse" x1="1249.0" x2="1881.0" y1="0" y2="0"><stop offset="0.0008" stop-color="#009987"/><stop offset="0.1068" stop-color="#009499"/><stop offset="0.3726" stop-color="#006899"/><stop offset="0.3742" stop-color="#996100"/><stop offset="0.4597" stop-color="#993500"/><stop offset="0.4628" stop-color="#993400"/><stop offset="0.4644" stop-color="#990065"/><stop offset="0.6479" stop-color="#99002c"/><stop offset="0.9011" stop-color="#900"/><stop offset="0.9992" stop-color="#900"/></linearGradient>
<linearGradient id="go65" gradientUnits="userSpaceOnUse" x1="1249.0" x2="1880.0" y1="0" y2="0"><stop offset="0.0008" stop-color="#00998b"/><stop offset="0.0911" stop-color="#009399"/><stop offset="0.3764" stop-color="#006599"/><stop offset="0.3780" stop-color="#995e00"/><stop offset="0.4540" stop-color="#993700"/><stop offset="0.4556" stop-color="#99006a"/><stop offset="0.6331" stop-color="#990030"/><stop offset="0.8994" stop-color="#900"/><stop offset="0.9992" stop-color="#900"/></linearGradient>
<linearGradient id="go66" gradientUnits="userSpaceOnUse" x1="1250.0" x2="1878.0" y1="0" y2="0"><stop offset="0.0008" stop-color="#009990"/><stop offset="0.0756" stop-color="#009299"/><stop offset="0.3798" stop-color="#006299"/><stop offset="0.3814" stop-color="#995c00"/><stop offset="0.4467" stop-color="#993a00"/><stop offset="0.4482" stop-color="#99006f"/><stop offset="0.6218" stop-color="#990034"/><stop offset="0.8909" stop-color="#990001"/><stop offset="0.9992" stop-color="#900"/></linearGradient>
<linearGradient id="go67" gradientUnits="userSpaceOnUse" x1="1251.0" x2="1876.0" y1="0" y2="0"><stop offset="0.0008" stop-color="#009994"/><stop offset="0.1256" stop-color="#008599"/><stop offset="0.3832" stop-color="#005f99"/><stop offset="0.3848" stop-color="#995a00"/><stop offset="0.4376" stop-color="#993e00"/><stop offset="0.4392" stop-color="#990075"/><stop offset="0.6072" stop-color="#990039"/><stop offset="0.8664" stop-color="#990006"/><stop offset="0.9992" stop-color="#900"/></linearGradient>
<linearGradient id="go68" gradientUnits="userSpaceOnUse" x1="1251.0" x2="1874.0" y1="0" y2="0"><stop offset="0.0008" stop-color="#009998"/><stop offset="0.3427" stop-color="#006299"/><stop offset="0.3876" stop-color="#005d99"/><stop offset="0.3892" stop-color="#995700"/><stop offset="0.4310" stop-color="#994100"/><stop offset="0.4326" stop-color="#99007a"/><stop offset="0.5947" stop-color="#99003e"/><stop offset="0.8451" stop-color="#99000a"/><stop offset="0.9607" stop-color="#900"/><stop offset="0.9992" stop-color="#900"/></linearGradient>
<linearGradient id="go69" gradientUnits="userSpaceOnUse" x1="1252.0" x2="1872.0" y1="0" y2="0"><stop offset="0.0008" stop-color="#009599"/><stop offset="0.3411" stop-color="#006099"/><stop offset="0.3927" stop-color="#005a99"/><stop offset="0.3944" stop-color="#995400"/><stop offset="0.4218" stop-color="#994500"/><stop offset="0.4234" stop-color="#990080"/><stop offset="0.5798" stop-color="#904"/><stop offset="0.8202" stop-color="#99000f"/><stop offset="0.9573" stop-color="#900"/><stop offset="0.9992" stop-color="#900"/></linearGradient>
<linearGradient id="go70" gradientUnits="userSpaceOnUse" x1="1253.0" x2="1870.0" y1="0" y2="0"><stop offset="0.0008" stop-color="#009099"/><stop offset="0.3558" stop-color="#005c99"/><stop offset="0.3963" stop-color="#005899"/><stop offset="0.3979" stop-color="#995200"/><stop offset="0.4141" stop-color="#994900"/><stop offset="0.4157" stop-color="#990086"/><stop offset="0.5681" stop-color="#990049"/><stop offset="0.7998" stop-color="#990013"/><stop offset="0.9587" stop-color="#900"/><stop offset="0.9992" stop-color="#900"/></linearGradient>
<linearGradient id="go71" gradientUnits="userSpaceOnUse" x1="1253.0" x2="1868.0" y1="0" y2="0"><stop offset="0.0008" stop-color="#008d99"/><stop offset="0.3683" stop-color="#005999"/><stop offset="0.4008" stop-color="#059"/><stop offset="0.4024" stop-color="#995000"/><stop offset="0.4073" stop-color="#994d00"/><stop offset="0.4089" stop-color="#99008c"/><stop offset="0.5569" stop-color="#99004e"/><stop offset="0.7797" stop-color="#990018"/><stop offset="0.9634" stop-color="#900"/><stop offset="0.9992" stop-color="#900"/></linearGradient>
<linearGradient id="go72" gradientUnits="userSpaceOnUse" x1="1254.0" x2="1866.0" y1="0" y2="0"><stop offset="0.0008" stop-color="#089"/><stop offset="0.3832" stop-color="#059"/><stop offset="0.4028" stop-color="#005399"/><stop offset="0.4044" stop-color="#990091"/><stop offset="0.5482" stop-color="#990052"/><stop offset="0.7655" stop-color="#99001b"/><stop offset="0.9681" stop-color="#900"/><stop offset="0.9992" stop-color="#900"/></linearGradient>
<linearGradient id="go73" gradientUnits="userSpaceOnUse" x1="1255.0" x2="1864.0" y1="0" y2="0"><stop offset="0.0008" stop-color="#008599"/><stop offset="0.3982" stop-color="#005299"/><stop offset="0.4015" stop-color="#005299"/><stop offset="0.4031" stop-color="#990094"/><stop offset="0.5460" stop-color="#905"/><stop offset="0.7611" stop-color="#99001d"/><stop offset="0.9729" stop-color="#900"/><stop offset="0.9992" stop-color="#900"/></linearGradient>
<linearGradient id="go74" gradientUnits="userSpaceOnUse" x1="1256.0" x2="1862.0" y1="0" y2="0"><stop offset="0.0008" stop-color="#008199"/><stop offset="0.4002" stop-color="#005099"/><stop offset="0.4018" stop-color="#990097"/><stop offset="0.5437" stop-color="#990057"/><stop offset="0.7550" stop-color="#99001f"/><stop offset="0.9777" stop-color="#900"/><stop offset="0.9992" stop-color="#900"/></linearGradient>
<linearGradient id="go75" gradientUnits="userSpaceOnUse" x1="1257.0" x2="1860.0" y1="0" y2="0"><stop offset="0.0008" stop-color="#007d99"/><stop offset="0.4005" stop-color="#004e99"/><stop offset="0.4022" stop-color="#909"/><stop offset="0.5431" stop-color="#990059"/><stop offset="0.7537" stop-color="#990021"/><stop offset="0.9826" stop-color="#900"/><stop offset="0.9992" stop-color="#900"/></linearGradient>
<linearGradient id="go76" gradientUnits="userSpaceOnUse" x1="1258.0" x2="1858.0" y1="0" y2="0"><stop offset="0.0008" stop-color="#007a99"/><stop offset="0.3992" stop-color="#004c99"/><stop offset="0.4008" stop-color="#970099"/><stop offset="0.5658" stop-color="#990052"/><stop offset="0.7875" stop-color="#99001b"/><stop offset="0.9942" stop-color="#900"/><stop offset="0.9992" stop-color="#900"/></linearGradient>
<linearGradient id="go77" gradientUnits="userSpaceOnUse" x1="1258.0" x2="1856.0" y1="0" y2="0"><stop offset="0.0008" stop-color="#079"/><stop offset="0.3988" stop-color="#004b99"/><stop offset="0.4005" stop-color="#940099"/><stop offset="0.4390" stop-color="#990089"/><stop offset="0.5928" stop-color="#99004b"/><stop offset="0.8269" stop-color="#990015"/><stop offset="0.9992" stop-color="#900"/></linearGradient>
<linearGradient id="go78" gradientUnits="userSpaceOnUse" x1="1259.0" x2="1854.0" y1="0" y2="0"><stop offset="0.0008" stop-color="#007399"/><stop offset="0.3992" stop-color="#004999"/><stop offset="0.4008" stop-color="#920099"/><stop offset="0.4294" stop-color="#990090"/><stop offset="0.5790" stop-color="#990051"/><stop offset="0.8042" stop-color="#99001a"/><stop offset="0.9992" stop-color="#900"/></linearGradient>
<linearGradient id="go79" gradientUnits="userSpaceOnUse" x1="1260.0" x2="1852.0" y1="0" y2="0"><stop offset="0.0008" stop-color="#007099"/><stop offset="0.3978" stop-color="#004899"/><stop offset="0.3995" stop-color="#8f0099"/><stop offset="0.4299" stop-color="#990092"/><stop offset="0.5785" stop-color="#990053"/><stop offset="0.8015" stop-color="#99001c"/><stop offset="0.9992" stop-color="#900"/></linearGradient>
<linearGradient id="go80" gradientUnits="userSpaceOnUse" x1="1261.0" x2="1850.0" y1="0" y2="0"><stop offset="0.0008" stop-color="#006d99"/><stop offset="0.3964" stop-color="#004699"/><stop offset="0.3981" stop-color="#8c0099"/><stop offset="0.4321" stop-color="#990093"/><stop offset="0.5798" stop-color="#990054"/><stop offset="0.8022" stop-color="#99001d"/><stop offset="0.9992" stop-color="#900"/></linearGradient>
<linearGradient id="go81" gradientUnits="userSpaceOnUse" x1="1262.0" x2="1848.0" y1="0" y2="0"><stop offset="0.0009" stop-color="#006a99"/><stop offset="0.3968" stop-color="#004599"/><stop offset="0.3985" stop-color="#8a0099"/><stop offset="0.4343" stop-color="#990094"/><stop offset="0.5828" stop-color="#905"/><stop offset="0.8046" stop-color="#99001e"/><stop offset="0.9991" stop-color="#900"/></linearGradient>
<linearGradient id="go82" gradientUnits="userSpaceOnUse" x1="1263.0" x2="1846.0" y1="0" y2="0"><stop offset="0.0009" stop-color="#006899"/><stop offset="0.3954" stop-color="#004399"/><stop offset="0.3971" stop-color="#809"/><stop offset="0.4383" stop-color="#990094"/><stop offset="0.5875" stop-color="#905"/><stop offset="0.8105" stop-color="#99001e"/><stop offset="0.9991" stop-color="#990001"/></linearGradient>
<linearGradient id="go83" gradientUnits="userSpaceOnUse" x1="1264.0" x2="1844.0" y1="0" y2="0"><stop offset="0.0009" stop-color="#006599"/><stop offset="0.3957" stop-color="#004299"/><stop offset="0.3974" stop-color="#860099"/><stop offset="0.4422" stop-color="#990094"/><stop offset="0.5922" stop-color="#905"/><stop offset="0.8164" stop-color="#99001e"/><stop offset="0.9991" stop-color="#990002"/></linearGradient>
<linearGradient id="go84" gradientUnits="userSpaceOnUse" x1="1264.0" x2="1843.0" y1="0" y2="0"><stop offset="0.0009" stop-color="#006399"/><stop offset="0.3946" stop-color="#004099"/><stop offset="0.3964" stop-color="#830099"/><stop offset="0.4465" stop-color="#990094"/><stop offset="0.5967" stop-color="#905"/><stop offset="0.8212" stop-color="#99001e"/><stop offset="0.9991" stop-color="#990002"/></linearGradient>
<linearGradient id="go85" gradientUnits="userSpaceOnUse" x1="1265.0" x2="1841.0" y1="0" y2="0"><stop offset="0.0009" stop-color="#006099"/><stop offset="0.3932" stop-color="#003f99"/><stop offset="0.3950" stop-color="#810099"/><stop offset="0.4488" stop-color="#990095"/><stop offset="0.5981" stop-color="#990056"/><stop offset="0.8220" stop-color="#99001f"/><stop offset="0.9991" stop-color="#990003"/></linearGradient>
<linearGradient id="go86" gradientUnits="userSpaceOnUse" x1="1266.0" x2="1839.0" y1="0" y2="0"><stop offset="0.0009" stop-color="#005e99"/><stop offset="0.3935" stop-color="#003e99"/><stop offset="0.3953" stop-color="#7f0099"/><stop offset="0.4529" stop-color="#990095"/><stop offset="0.6030" stop-color="#990056"/><stop offset="0.8281" stop-color="#99001f"/><stop offset="0.9991" stop-color="#990004"/></linearGradient>
<linearGradient id="go87" gradientUnits="userSpaceOnUse" x1="1267.0" x2="1837.0" y1="0" y2="0"><stop offset="0.0009" stop-color="#005b99"/><stop offset="0.3921" stop-color="#003c99"/><stop offset="0.3939" stop-color="#7d0099"/><stop offset="0.4570" stop-color="#990095"/><stop offset="0.6079" stop-color="#990056"/><stop offset="0.8342" stop-color="#99001f"/><stop offset="0.9991" stop-color="#990005"/></linearGradient>
<linearGradient id="go88" gradientUnits="userSpaceOnUse" x1="1268.0" x2="1835.0" y1="0" y2="0"><stop offset="0.0009" stop-color="#005999"/><stop offset="0.3907" stop-color="#003b99"/><stop offset="0.3924" stop-color="#7a0099"/><stop offset="0.4612" stop-color="#990095"/><stop offset="0.6129" stop-color="#990056"/><stop offset="0.8404" stop-color="#99001f"/><stop offset="0.9991" stop-color="#990006"/></linearGradient>
<linearGradient id="go89" gradientUnits="userSpaceOnUse" x1="1269.0" x2="1833.0" y1="0" y2="0"><stop offset="0.0009" stop-color="#005799"/><stop offset="0.3910" stop-color="#003a99"/><stop offset="0.3927" stop-color="#790099"/><stop offset="0.4654" stop-color="#990095"/><stop offset="0.6179" stop-color="#990056"/><stop offset="0.8466" stop-color="#99001f"/><stop offset="0.9991" stop-color="#990007"/></linearGradient>
<linearGradient id="go90" gradientUnits="userSpaceOnUse" x1="1270.0" x2="1831.0" y1="0" y2="0"><stop offset="0.0009" stop-color="#005499"/><stop offset="0.3895" stop-color="#003999"/><stop offset="0.3913" stop-color="#760099"/><stop offset="0.4697" stop-color="#990095"/><stop offset="0.6230" stop-color="#990056"/><stop offset="0.8529" stop-color="#99001f"/><stop offset="0.9991" stop-color="#990008"/></linearGradient>
<linearGradient id="go91" gradientUnits="userSpaceOnUse" x1="1271.0" x2="1829.0" y1="0" y2="0"><stop offset="0.0009" stop-color="#005299"/><stop offset="0.3880" stop-color="#003899"/><stop offset="0.3898" stop-color="#740099"/><stop offset="0.4740" stop-color="#990095"/><stop offset="0.6281" stop-color="#990056"/><stop offset="0.8593" stop-color="#99001f"/><stop offset="0.9991" stop-color="#990009"/></linearGradient>
<linearGradient id="go92" gradientUnits="userSpaceOnUse" x1="1272.0" x2="1827.0" y1="0" y2="0"><stop offset="0.0009" stop-color="#005099"/><stop offset="0.3883" stop-color="#003699"/><stop offset="0.3901" stop-color="#720099"/><stop offset="0.4784" stop-color="#990095"/><stop offset="0.6333" stop-color="#990056"/><stop offset="0.8658" stop-color="#99001f"/><stop offset="0.9991" stop-color="#99000a"/></linearGradient>
<linearGradient id="go93" gradientUnits="userSpaceOnUse" x1="1273.0" x2="1825.0" y1="0" y2="0"><stop offset="0.0009" stop-color="#004e99"/><stop offset="0.3868" stop-color="#003599"/><stop offset="0.3886" stop-color="#700099"/><stop offset="0.4828" stop-color="#990095"/><stop offset="0.6386" stop-color="#990056"/><stop offset="0.8723" stop-color="#99001f"/><stop offset="0.9991" stop-color="#99000b"/></linearGradient>
<linearGradient id="go94" gradientUnits="userSpaceOnUse" x1="1273.0" x2="1823.0" y1="0" y2="0"><stop offset="0.0009" stop-color="#004d99"/><stop offset="0.3882" stop-color="#003499"/><stop offset="0.3900" stop-color="#6f0099"/><stop offset="0.4882" stop-color="#990095"/><stop offset="0.6445" stop-color="#990056"/><stop offset="0.8791" stop-color="#99001f"/><stop offset="0.9991" stop-color="#99000c"/></linearGradient>
<linearGradient id="go95" gradientUnits="userSpaceOnUse" x1="1274.0" x2="1821.0" y1="0" y2="0"><stop offset="0.0009" stop-color="#004b99"/><stop offset="0.3867" stop-color="#039"/><stop offset="0.3885" stop-color="#6c0099"/><stop offset="0.4927" stop-color="#990096"/><stop offset="0.6499" stop-color="#990056"/><stop offset="0.8857" stop-color="#99001f"/><stop offset="0.9991" stop-color="#99000d"/></linearGradient>
<linearGradient id="go96" gradientUnits="userSpaceOnUse" x1="1275.0" x2="1819.0" y1="0" y2="0"><stop offset="0.0009" stop-color="#004999"/><stop offset="0.3851" stop-color="#003299"/><stop offset="0.3869" stop-color="#6a0099"/><stop offset="0.4972" stop-color="#990096"/><stop offset="0.6553" stop-color="#990056"/><stop offset="0.8925" stop-color="#99001f"/><stop offset="0.9991" stop-color="#99000e"/></linearGradient>
<linearGradient id="go97" gradientUnits="userSpaceOnUse" x1="1276.0" x2="1817.0" y1="0" y2="0"><stop offset="0.0009" stop-color="#004799"/><stop offset="0.3854" stop-color="#003199"/><stop offset="0.3872" stop-color="#690099"/><stop offset="0.5018" stop-color="#990096"/><stop offset="0.6608" stop-color="#990056"/><stop offset="0.8993" stop-color="#99001f"/><stop offset="0.9991" stop-color="#99000f"/></linearGradient>
<linearGradient id="go98" gradientUnits="userSpaceOnUse" x1="1277.0" x2="1815.0" y1="0" y2="0"><stop offset="0.0009" stop-color="#004599"/><stop offset="0.3838" stop-color="#003099"/><stop offset="0.3857" stop-color="#670099"/><stop offset="0.5084" stop-color="#990095"/><stop offset="0.6682" stop-color="#990056"/><stop offset="0.9099" stop-color="#99001e"/><stop offset="0.9991" stop-color="#990010"/></linearGradient>
<linearGradient id="go99" gradientUnits="userSpaceOnUse" x1="1278.0" x2="1813.0" y1="0" y2="0"><stop offset="0.0009" stop-color="#049"/><stop offset="0.3822" stop-color="#002f99"/><stop offset="0.3841" stop-color="#650099"/><stop offset="0.5131" stop-color="#990095"/><stop offset="0.6738" stop-color="#990056"/><stop offset="0.9168" stop-color="#99001e"/><stop offset="0.9991" stop-color="#901"/></linearGradient>
<linearGradient id="go100" gradientUnits="userSpaceOnUse" x1="1279.0" x2="1811.0" y1="0" y2="0"><stop offset="0.0009" stop-color="#004299"/><stop offset="0.3825" stop-color="#002e99"/><stop offset="0.3844" stop-color="#630099"/><stop offset="0.5179" stop-color="#990095"/><stop offset="0.6795" stop-color="#990056"/><stop offset="0.9239" stop-color="#99001e"/><stop offset="0.9991" stop-color="#990012"/></linearGradient>
<linearGradient id="go101" gradientUnits="userSpaceOnUse" x1="1280.0" x2="1809.0" y1="0" y2="0"><stop offset="0.0009" stop-color="#004199"/><stop offset="0.3809" stop-color="#002d99"/><stop offset="0.3828" stop-color="#610099"/><stop offset="0.5227" stop-color="#990095"/><stop offset="0.6853" stop-color="#990056"/><stop offset="0.9291" stop-color="#99001f"/><stop offset="0.9991" stop-color="#990013"/></linearGradient>
<linearGradient id="go102" gradientUnits="userSpaceOnUse" x1="1281.0" x2="1807.0" y1="0" y2="0"><stop offset="0.0010" stop-color="#003f99"/><stop offset="0.3793" stop-color="#002c99"/><stop offset="0.3812" stop-color="#5f0099"/><stop offset="0.5276" stop-color="#990095"/><stop offset="0.6911" stop-color="#990056"/><stop offset="0.9363" stop-color="#99001f"/><stop offset="0.9990" stop-color="#990015"/></linearGradient>
<linearGradient id="go103" gradientUnits="userSpaceOnUse" x1="1282.0" x2="1805.0" y1="0" y2="0"><stop offset="0.0010" stop-color="#003e99"/><stop offset="0.3795" stop-color="#002b99"/><stop offset="0.3815" stop-color="#5e0099"/><stop offset="0.5325" stop-color="#990095"/><stop offset="0.6969" stop-color="#990056"/><stop offset="0.9436" stop-color="#99001f"/><stop offset="0.9990" stop-color="#990016"/></linearGradient>
<linearGradient id="go104" gradientUnits="userSpaceOnUse" x1="1283.0" x2="1804.0" y1="0" y2="0"><stop offset="0.0010" stop-color="#003c99"/><stop offset="0.3772" stop-color="#002a99"/><stop offset="0.3791" stop-color="#5c0099"/><stop offset="0.5365" stop-color="#990095"/><stop offset="0.7015" stop-color="#990056"/><stop offset="0.9491" stop-color="#99001f"/><stop offset="0.9990" stop-color="#990017"/></linearGradient>
<linearGradient id="go105" gradientUnits="userSpaceOnUse" x1="1284.0" x2="1802.0" y1="0" y2="0"><stop offset="0.0010" stop-color="#003b99"/><stop offset="0.3774" stop-color="#002999"/><stop offset="0.3793" stop-color="#5b0099"/><stop offset="0.5415" stop-color="#990095"/><stop offset="0.7075" stop-color="#990056"/><stop offset="0.9566" stop-color="#99001f"/><stop offset="0.9990" stop-color="#990018"/></linearGradient>
<linearGradient id="go106" gradientUnits="userSpaceOnUse" x1="1285.0" x2="1800.0" y1="0" y2="0"><stop offset="0.0010" stop-color="#003999"/><stop offset="0.3757" stop-color="#002899"/><stop offset="0.3777" stop-color="#590099"/><stop offset="0.5466" stop-color="#990095"/><stop offset="0.7136" stop-color="#990056"/><stop offset="0.9641" stop-color="#99001f"/><stop offset="0.9990" stop-color="#990019"/></linearGradient>
<linearGradient id="go107" gradientUnits="userSpaceOnUse" x1="1286.0" x2="1798.0" y1="0" y2="0"><stop offset="0.0010" stop-color="#003899"/><stop offset="0.3740" stop-color="#002899"/><stop offset="0.3760" stop-color="#570099"/><stop offset="0.5518" stop-color="#990095"/><stop offset="0.7197" stop-color="#990056"/><stop offset="0.9717" stop-color="#99001f"/><stop offset="0.9990" stop-color="#99001a"/></linearGradient>
<linearGradient id="go108" gradientUnits="userSpaceOnUse" x1="1287.0" x2="1796.0" y1="0" y2="0"><stop offset="0.0010" stop-color="#003799"/><stop offset="0.3743" stop-color="#002799"/><stop offset="0.3762" stop-color="#560099"/><stop offset="0.5570" stop-color="#990095"/><stop offset="0.7259" stop-color="#990056"/><stop offset="0.9794" stop-color="#99001f"/><stop offset="0.9990" stop-color="#99001b"/></linearGradient>
<linearGradient id="go109" gradientUnits="userSpaceOnUse" x1="1288.0" x2="1794.0" y1="0" y2="0"><stop offset="0.0010" stop-color="#003599"/><stop offset="0.3725" stop-color="#002699"/><stop offset="0.3745" stop-color="#540099"/><stop offset="0.5623" stop-color="#990095"/><stop offset="0.7322" stop-color="#990056"/><stop offset="0.9872" stop-color="#99001f"/><stop offset="0.9990" stop-color="#99001d"/></linearGradient>
<linearGradient id="go110" gradientUnits="userSpaceOnUse" x1="1289.0" x2="1792.0" y1="0" y2="0"><stop offset="0.0010" stop-color="#003499"/><stop offset="0.3708" stop-color="#002599"/><stop offset="0.3728" stop-color="#520099"/><stop offset="0.5676" stop-color="#990095"/><stop offset="0.7386" stop-color="#990056"/><stop offset="0.9950" stop-color="#99001f"/><stop offset="0.9990" stop-color="#99001e"/></linearGradient>
<linearGradient id="go111" gradientUnits="userSpaceOnUse" x1="1290.0" x2="1790.0" y1="0" y2="0"><stop offset="0.0010" stop-color="#039"/><stop offset="0.3710" stop-color="#002499"/><stop offset="0.3730" stop-color="#510099"/><stop offset="0.5550" stop-color="#940099"/><stop offset="0.6170" stop-color="#990082"/><stop offset="0.8110" stop-color="#990045"/><stop offset="0.9990" stop-color="#99001f"/></linearGradient>
<linearGradient id="go112" gradientUnits="userSpaceOnUse" x1="1291.0" x2="1788.0" y1="0" y2="0"><stop offset="0.0010" stop-color="#003299"/><stop offset="0.3692" stop-color="#002399"/><stop offset="0.3712" stop-color="#4f0099"/><stop offset="0.5543" stop-color="#910099"/><stop offset="0.5885" stop-color="#990091"/><stop offset="0.7676" stop-color="#990052"/><stop offset="0.9990" stop-color="#990021"/></linearGradient>
<linearGradient id="go113" gradientUnits="userSpaceOnUse" x1="1292.0" x2="1786.0" y1="0" y2="0"><stop offset="0.0010" stop-color="#003099"/><stop offset="0.3694" stop-color="#002399"/><stop offset="0.3715" stop-color="#4e0099"/><stop offset="0.5577" stop-color="#900099"/><stop offset="0.5921" stop-color="#990092"/><stop offset="0.7702" stop-color="#990053"/><stop offset="0.9990" stop-color="#902"/></linearGradient>
<linearGradient id="go114" gradientUnits="userSpaceOnUse" x1="1293.0" x2="1784.0" y1="0" y2="0"><stop offset="0.0010" stop-color="#002f99"/><stop offset="0.3676" stop-color="#029"/><stop offset="0.3697" stop-color="#4c0099"/><stop offset="0.5591" stop-color="#8f0099"/><stop offset="0.5957" stop-color="#990092"/><stop offset="0.7749" stop-color="#990053"/><stop offset="0.9990" stop-color="#990023"/></linearGradient>
<linearGradient id="go115" gradientUnits="userSpaceOnUse" x1="1294.0" x2="1782.0" y1="0" y2="0"><stop offset="0.0010" stop-color="#002e99"/><stop offset="0.3658" stop-color="#002199"/><stop offset="0.3678" stop-color="#4a0099"/><stop offset="0.5605" stop-color="#8d0099"/><stop offset="0.5994" stop-color="#990093"/><stop offset="0.7777" stop-color="#990054"/><stop offset="0.9990" stop-color="#990025"/></linearGradient>
<linearGradient id="go116" gradientUnits="userSpaceOnUse" x1="1295.0" x2="1780.0" y1="0" y2="0"><stop offset="0.0010" stop-color="#002d99"/><stop offset="0.3660" stop-color="#002099"/><stop offset="0.3680" stop-color="#490099"/><stop offset="0.5639" stop-color="#8c0099"/><stop offset="0.6052" stop-color="#990093"/><stop offset="0.7845" stop-color="#990054"/><stop offset="0.9990" stop-color="#990026"/></linearGradient>
<linearGradient id="go117" gradientUnits="userSpaceOnUse" x1="1296.0" x2="1778.0" y1="0" y2="0"><stop offset="0.0010" stop-color="#002c99"/><stop offset="0.3641" stop-color="#002099"/><stop offset="0.3662" stop-color="#480099"/><stop offset="0.5633" stop-color="#890099"/><stop offset="0.6089" stop-color="#990094"/><stop offset="0.7894" stop-color="#905"/><stop offset="0.9990" stop-color="#990028"/></linearGradient>
<linearGradient id="go118" gradientUnits="userSpaceOnUse" x1="1297.0" x2="1776.0" y1="0" y2="0"><stop offset="0.0010" stop-color="#002b99"/><stop offset="0.3622" stop-color="#001f99"/><stop offset="0.3643" stop-color="#460099"/><stop offset="0.5647" stop-color="#870099"/><stop offset="0.6148" stop-color="#990094"/><stop offset="0.7965" stop-color="#905"/><stop offset="0.9990" stop-color="#990029"/></linearGradient>
<linearGradient id="go119" gradientUnits="userSpaceOnUse" x1="1298.0" x2="1774.0" y1="0" y2="0"><stop offset="0.0011" stop-color="#002a99"/><stop offset="0.3624" stop-color="#001e99"/><stop offset="0.3645" stop-color="#450099"/><stop offset="0.5683" stop-color="#860099"/><stop offset="0.6208" stop-color="#990095"/><stop offset="0.8036" stop-color="#905"/><stop offset="0.9989" stop-color="#99002a"/></linearGradient>
<linearGradient id="go120" gradientUnits="userSpaceOnUse" x1="1300.0" x2="1772.0" y1="0" y2="0"><stop offset="0.0011" stop-color="#002999"/><stop offset="0.3591" stop-color="#001e99"/><stop offset="0.3612" stop-color="#430099"/><stop offset="0.5689" stop-color="#850099"/><stop offset="0.6261" stop-color="#990095"/><stop offset="0.8104" stop-color="#905"/><stop offset="0.9989" stop-color="#99002c"/></linearGradient>
<linearGradient id="go121" gradientUnits="userSpaceOnUse" x1="1301.0" x2="1770.0" y1="0" y2="0"><stop offset="0.0011" stop-color="#002899"/><stop offset="0.3571" stop-color="#001d99"/><stop offset="0.3593" stop-color="#420099"/><stop offset="0.5704" stop-color="#830099"/><stop offset="0.6322" stop-color="#990095"/><stop offset="0.8156" stop-color="#990056"/><stop offset="0.9989" stop-color="#99002e"/></linearGradient>
<linearGradient id="go122" gradientUnits="userSpaceOnUse" x1="1302.0" x2="1768.0" y1="0" y2="0"><stop offset="0.0011" stop-color="#002799"/><stop offset="0.3573" stop-color="#001c99"/><stop offset="0.3594" stop-color="#410099"/><stop offset="0.5719" stop-color="#810099"/><stop offset="0.6384" stop-color="#990095"/><stop offset="0.8230" stop-color="#990056"/><stop offset="0.9989" stop-color="#99002f"/></linearGradient>
<linearGradient id="go123" gradientUnits="userSpaceOnUse" x1="1303.0" x2="1767.0" y1="0" y2="0"><stop offset="0.0011" stop-color="#002699"/><stop offset="0.3545" stop-color="#001c99"/><stop offset="0.3567" stop-color="#3f0099"/><stop offset="0.5722" stop-color="#800099"/><stop offset="0.6433" stop-color="#990095"/><stop offset="0.8287" stop-color="#990056"/><stop offset="0.9989" stop-color="#990030"/></linearGradient>
<linearGradient id="go124" gradientUnits="userSpaceOnUse" x1="1304.0" x2="1765.0" y1="0" y2="0"><stop offset="0.0011" stop-color="#002599"/><stop offset="0.3547" stop-color="#001b99"/><stop offset="0.3568" stop-color="#3e0099"/><stop offset="0.5759" stop-color="#7f0099"/><stop offset="0.6497" stop-color="#990095"/><stop offset="0.8362" stop-color="#990056"/><stop offset="0.9989" stop-color="#990032"/></linearGradient>
<linearGradient id="go125" gradientUnits="userSpaceOnUse" x1="1305.0" x2="1763.0" y1="0" y2="0"><stop offset="0.0011" stop-color="#002499"/><stop offset="0.3526" stop-color="#001a99"/><stop offset="0.3548" stop-color="#3c0099"/><stop offset="0.5775" stop-color="#7d0099"/><stop offset="0.6561" stop-color="#990095"/><stop offset="0.8439" stop-color="#990056"/><stop offset="0.9989" stop-color="#990034"/></linearGradient>
<linearGradient id="go126" gradientUnits="userSpaceOnUse" x1="1306.0" x2="1761.0" y1="0" y2="0"><stop offset="0.0011" stop-color="#002399"/><stop offset="0.3505" stop-color="#001a99"/><stop offset="0.3527" stop-color="#3b0099"/><stop offset="0.5791" stop-color="#7b0099"/><stop offset="0.6626" stop-color="#990095"/><stop offset="0.8516" stop-color="#990056"/><stop offset="0.9989" stop-color="#990035"/></linearGradient>
<linearGradient id="go127" gradientUnits="userSpaceOnUse" x1="1307.0" x2="1759.0" y1="0" y2="0"><stop offset="0.0011" stop-color="#029"/><stop offset="0.3507" stop-color="#001999"/><stop offset="0.3529" stop-color="#3a0099"/><stop offset="0.5830" stop-color="#7b0099"/><stop offset="0.6692" stop-color="#990095"/><stop offset="0.8595" stop-color="#990056"/><stop offset="0.9989" stop-color="#990037"/></linearGradient>
<linearGradient id="go128" gradientUnits="userSpaceOnUse" x1="1309.0" x2="1757.0" y1="0" y2="0"><stop offset="0.0011" stop-color="#002199"/><stop offset="0.3471" stop-color="#001899"/><stop offset="0.3493" stop-color="#390099"/><stop offset="0.5837" stop-color="#790099"/><stop offset="0.6752" stop-color="#990095"/><stop offset="0.8672" stop-color="#990056"/><stop offset="0.9989" stop-color="#990039"/></linearGradient>
<linearGradient id="go129" gradientUnits="userSpaceOnUse" x1="1310.0" x2="1755.0" y1="0" y2="0"><stop offset="0.0011" stop-color="#002199"/><stop offset="0.3449" stop-color="#001899"/><stop offset="0.3472" stop-color="#370099"/><stop offset="0.5831" stop-color="#709"/><stop offset="0.6820" stop-color="#990095"/><stop offset="0.8753" stop-color="#990056"/><stop offset="0.9989" stop-color="#99003a"/></linearGradient>
<linearGradient id="go130" gradientUnits="userSpaceOnUse" x1="1311.0" x2="1753.0" y1="0" y2="0"><stop offset="0.0011" stop-color="#002099"/><stop offset="0.3450" stop-color="#001799"/><stop offset="0.3473" stop-color="#360099"/><stop offset="0.5871" stop-color="#760099"/><stop offset="0.6889" stop-color="#990095"/><stop offset="0.8835" stop-color="#990056"/><stop offset="0.9989" stop-color="#99003c"/></linearGradient>
<linearGradient id="go131" gradientUnits="userSpaceOnUse" x1="1312.0" x2="1751.0" y1="0" y2="0"><stop offset="0.0011" stop-color="#001f99"/><stop offset="0.3428" stop-color="#001799"/><stop offset="0.3451" stop-color="#350099"/><stop offset="0.5888" stop-color="#740099"/><stop offset="0.6959" stop-color="#990095"/><stop offset="0.8918" stop-color="#990056"/><stop offset="0.9989" stop-color="#99003e"/></linearGradient>
<linearGradient id="go132" gradientUnits="userSpaceOnUse" x1="1313.0" x2="1749.0" y1="0" y2="0"><stop offset="0.0011" stop-color="#001e99"/><stop offset="0.3406" stop-color="#001699"/><stop offset="0.3429" stop-color="#309"/><stop offset="0.5906" stop-color="#730099"/><stop offset="0.7030" stop-color="#990095"/><stop offset="0.9002" stop-color="#990056"/><stop offset="0.9989" stop-color="#990040"/></linearGradient>
<linearGradient id="go133" gradientUnits="userSpaceOnUse" x1="1315.0" x2="1747.0" y1="0" y2="0"><stop offset="0.0012" stop-color="#001d99"/><stop offset="0.3391" stop-color="#001699"/><stop offset="0.3414" stop-color="#320099"/><stop offset="0.5938" stop-color="#720099"/><stop offset="0.7095" stop-color="#990095"/><stop offset="0.9086" stop-color="#990056"/><stop offset="0.9988" stop-color="#990042"/></linearGradient>
<linearGradient id="go134" gradientUnits="userSpaceOnUse" x1="1316.0" x2="1745.0" y1="0" y2="0"><stop offset="0.0012" stop-color="#001c99"/><stop offset="0.3368" stop-color="#001599"/><stop offset="0.3392" stop-color="#310099"/><stop offset="0.5956" stop-color="#700099"/><stop offset="0.7168" stop-color="#990095"/><stop offset="0.9172" stop-color="#990056"/><stop offset="0.9988" stop-color="#904"/></linearGradient>
<linearGradient id="go135" gradientUnits="userSpaceOnUse" x1="1317.0" x2="1743.0" y1="0" y2="0"><stop offset="0.0012" stop-color="#001c99"/><stop offset="0.3369" stop-color="#001499"/><stop offset="0.3392" stop-color="#300099"/><stop offset="0.5974" stop-color="#6f0099"/><stop offset="0.7242" stop-color="#990095"/><stop offset="0.9261" stop-color="#990056"/><stop offset="0.9988" stop-color="#990046"/></linearGradient>
<linearGradient id="go136" gradientUnits="userSpaceOnUse" x1="1318.0" x2="1741.0" y1="0" y2="0"><stop offset="0.0012" stop-color="#001b99"/><stop offset="0.3345" stop-color="#001499"/><stop offset="0.3369" stop-color="#2f0099"/><stop offset="0.5993" stop-color="#6d0099"/><stop offset="0.7317" stop-color="#990095"/><stop offset="0.9350" stop-color="#990056"/><stop offset="0.9988" stop-color="#990048"/></linearGradient>
<linearGradient id="go137" gradientUnits="userSpaceOnUse" x1="1319.0" x2="1739.0" y1="0" y2="0"><stop offset="0.0012" stop-color="#001a99"/><stop offset="0.3321" stop-color="#001399"/><stop offset="0.3345" stop-color="#2d0099"/><stop offset="0.6012" stop-color="#6c0099"/><stop offset="0.7393" stop-color="#990095"/><stop offset="0.9440" stop-color="#990056"/><stop offset="0.9988" stop-color="#99004a"/></linearGradient>
<linearGradient id="go138" gradientUnits="userSpaceOnUse" x1="1321.0" x2="1737.0" y1="0" y2="0"><stop offset="0.0012" stop-color="#001999"/><stop offset="0.3305" stop-color="#001399"/><stop offset="0.3329" stop-color="#2d0099"/><stop offset="0.6046" stop-color="#6b0099"/><stop offset="0.7464" stop-color="#990095"/><stop offset="0.9531" stop-color="#990056"/><stop offset="0.9988" stop-color="#99004c"/></linearGradient>
<linearGradient id="go139" gradientUnits="userSpaceOnUse" x1="1322.0" x2="1735.0" y1="0" y2="0"><stop offset="0.0012" stop-color="#001999"/><stop offset="0.3281" stop-color="#001299"/><stop offset="0.3305" stop-color="#2b0099"/><stop offset="0.6065" stop-color="#6a0099"/><stop offset="0.7542" stop-color="#990095"/><stop offset="0.9625" stop-color="#990056"/><stop offset="0.9988" stop-color="#99004e"/></linearGradient>
<linearGradient id="go140" gradientUnits="userSpaceOnUse" x1="1323.0" x2="1733.0" y1="0" y2="0"><stop offset="0.0012" stop-color="#001899"/><stop offset="0.3256" stop-color="#001299"/><stop offset="0.3280" stop-color="#2a0099"/><stop offset="0.6085" stop-color="#680099"/><stop offset="0.7622" stop-color="#990095"/><stop offset="0.9720" stop-color="#990056"/><stop offset="0.9988" stop-color="#990050"/></linearGradient>
<linearGradient id="go141" gradientUnits="userSpaceOnUse" x1="1324.0" x2="1731.0" y1="0" y2="0"><stop offset="0.0012" stop-color="#001799"/><stop offset="0.3256" stop-color="#019"/><stop offset="0.3280" stop-color="#290099"/><stop offset="0.6106" stop-color="#670099"/><stop offset="0.7703" stop-color="#990095"/><stop offset="0.9816" stop-color="#990056"/><stop offset="0.9988" stop-color="#990052"/></linearGradient>
<linearGradient id="go142" gradientUnits="userSpaceOnUse" x1="1325.0" x2="1730.0" y1="0" y2="0"><stop offset="0.0012" stop-color="#001799"/><stop offset="0.3222" stop-color="#019"/><stop offset="0.3247" stop-color="#280099"/><stop offset="0.6111" stop-color="#650099"/><stop offset="0.7765" stop-color="#990095"/><stop offset="0.9889" stop-color="#990056"/><stop offset="0.9988" stop-color="#990054"/></linearGradient>
<linearGradient id="go143" gradientUnits="userSpaceOnUse" x1="1327.0" x2="1728.0" y1="0" y2="0"><stop offset="0.0012" stop-color="#001699"/><stop offset="0.3180" stop-color="#001099"/><stop offset="0.3204" stop-color="#270099"/><stop offset="0.6122" stop-color="#640099"/><stop offset="0.7843" stop-color="#990095"/><stop offset="0.9988" stop-color="#990056"/></linearGradient>
<linearGradient id="go144" gradientUnits="userSpaceOnUse" x1="1328.0" x2="1726.0" y1="0" y2="0"><stop offset="0.0013" stop-color="#001599"/><stop offset="0.3178" stop-color="#001099"/><stop offset="0.3204" stop-color="#260099"/><stop offset="0.6168" stop-color="#630099"/><stop offset="0.7927" stop-color="#990095"/><stop offset="0.9987" stop-color="#990059"/></linearGradient>
<linearGradient id="go145" gradientUnits="userSpaceOnUse" x1="1329.0" x2="1724.0" y1="0" y2="0"><stop offset="0.0013" stop-color="#001599"/><stop offset="0.3152" stop-color="#000f99"/><stop offset="0.3177" stop-color="#250099"/><stop offset="0.6190" stop-color="#620099"/><stop offset="0.8013" stop-color="#990095"/><stop offset="0.9987" stop-color="#99005b"/></linearGradient>
<linearGradient id="go146" gradientUnits="userSpaceOnUse" x1="1330.0" x2="1722.0" y1="0" y2="0"><stop offset="0.0013" stop-color="#001499"/><stop offset="0.3151" stop-color="#000f99"/><stop offset="0.3176" stop-color="#240099"/><stop offset="0.6237" stop-color="#610099"/><stop offset="0.8099" stop-color="#990096"/><stop offset="0.9987" stop-color="#99005d"/></linearGradient>
<linearGradient id="go147" gradientUnits="userSpaceOnUse" x1="1331.0" x2="1720.0" y1="0" y2="0"><stop offset="0.0013" stop-color="#001499"/><stop offset="0.3123" stop-color="#000e99"/><stop offset="0.3149" stop-color="#230099"/><stop offset="0.6260" stop-color="#600099"/><stop offset="0.8188" stop-color="#990096"/><stop offset="0.9987" stop-color="#990060"/></linearGradient>
<linearGradient id="go148" gradientUnits="userSpaceOnUse" x1="1333.0" x2="1718.0" y1="0" y2="0"><stop offset="0.0013" stop-color="#001399"/><stop offset="0.3078" stop-color="#000e99"/><stop offset="0.3104" stop-color="#210099"/><stop offset="0.6273" stop-color="#5f0099"/><stop offset="0.8273" stop-color="#990096"/><stop offset="0.9987" stop-color="#990062"/></linearGradient>
<linearGradient id="go149" gradientUnits="userSpaceOnUse" x1="1334.0" x2="1716.0" y1="0" y2="0"><stop offset="0.0013" stop-color="#001299"/><stop offset="0.3076" stop-color="#000e99"/><stop offset="0.3102" stop-color="#210099"/><stop offset="0.6296" stop-color="#5d0099"/><stop offset="0.8364" stop-color="#990096"/><stop offset="0.9987" stop-color="#990065"/></linearGradient>
<linearGradient id="go150" gradientUnits="userSpaceOnUse" x1="1335.0" x2="1714.0" y1="0" y2="0"><stop offset="0.0013" stop-color="#001299"/><stop offset="0.3047" stop-color="#000d99"/><stop offset="0.3074" stop-color="#1f0099"/><stop offset="0.6319" stop-color="#5c0099"/><stop offset="0.8483" stop-color="#990095"/><stop offset="0.9987" stop-color="#990068"/></linearGradient>
<linearGradient id="go151" gradientUnits="userSpaceOnUse" x1="1336.0" x2="1712.0" y1="0" y2="0"><stop offset="0.0013" stop-color="#019"/><stop offset="0.3019" stop-color="#000d99"/><stop offset="0.3045" stop-color="#1e0099"/><stop offset="0.6343" stop-color="#5b0099"/><stop offset="0.8577" stop-color="#990095"/><stop offset="0.9987" stop-color="#99006a"/></linearGradient>
<linearGradient id="go152" gradientUnits="userSpaceOnUse" x1="1337.0" x2="1710.0" y1="0" y2="0"><stop offset="0.0013" stop-color="#019"/><stop offset="0.3016" stop-color="#000c99"/><stop offset="0.3043" stop-color="#1e0099"/><stop offset="0.6394" stop-color="#5a0099"/><stop offset="0.8673" stop-color="#990095"/><stop offset="0.9987" stop-color="#99006d"/></linearGradient>
<linearGradient id="go153" gradientUnits="userSpaceOnUse" x1="1339.0" x2="1708.0" y1="0" y2="0"><stop offset="0.0014" stop-color="#001099"/><stop offset="0.2967" stop-color="#000c99"/><stop offset="0.2995" stop-color="#1c0099"/><stop offset="0.6409" stop-color="#590099"/><stop offset="0.8767" stop-color="#990095"/><stop offset="0.9986" stop-color="#990070"/></linearGradient>
<linearGradient id="go154" gradientUnits="userSpaceOnUse" x1="1340.0" x2="1706.0" y1="0" y2="0"><stop offset="0.0014" stop-color="#000f99"/><stop offset="0.2937" stop-color="#000b99"/><stop offset="0.2964" stop-color="#1b0099"/><stop offset="0.6434" stop-color="#570099"/><stop offset="0.8866" stop-color="#990095"/><stop offset="0.9986" stop-color="#990073"/></linearGradient>
<linearGradient id="go155" gradientUnits="userSpaceOnUse" x1="1341.0" x2="1704.0" y1="0" y2="0"><stop offset="0.0014" stop-color="#000f99"/><stop offset="0.2934" stop-color="#000b99"/><stop offset="0.2961" stop-color="#1b0099"/><stop offset="0.6488" stop-color="#570099"/><stop offset="0.8967" stop-color="#990095"/><stop offset="0.9986" stop-color="#990076"/></linearGradient>
<linearGradient id="go156" gradientUnits="userSpaceOnUse" x1="1342.0" x2="1702.0" y1="0" y2="0"><stop offset="0.0014" stop-color="#000e99"/><stop offset="0.2903" stop-color="#000b99"/><stop offset="0.2931" stop-color="#190099"/><stop offset="0.6514" stop-color="#560099"/><stop offset="0.9069" stop-color="#990095"/><stop offset="0.9986" stop-color="#990079"/></linearGradient>
<linearGradient id="go157" gradientUnits="userSpaceOnUse" x1="1343.0" x2="1700.0" y1="0" y2="0"><stop offset="0.0014" stop-color="#000e99"/><stop offset="0.2899" stop-color="#000a99"/><stop offset="0.2927" stop-color="#190099"/><stop offset="0.6541" stop-color="#540099"/><stop offset="0.9174" stop-color="#990095"/><stop offset="0.9986" stop-color="#99007c"/></linearGradient>
<linearGradient id="go158" gradientUnits="userSpaceOnUse" x1="1345.0" x2="1698.0" y1="0" y2="0"><stop offset="0.0014" stop-color="#000d99"/><stop offset="0.2847" stop-color="#000a99"/><stop offset="0.2875" stop-color="#180099"/><stop offset="0.6558" stop-color="#530099"/><stop offset="0.9079" stop-color="#960099"/><stop offset="0.9986" stop-color="#99007f"/></linearGradient>
<linearGradient id="go159" gradientUnits="userSpaceOnUse" x1="1346.0" x2="1696.0" y1="0" y2="0"><stop offset="0.0014" stop-color="#000d99"/><stop offset="0.2814" stop-color="#000999"/><stop offset="0.2843" stop-color="#170099"/><stop offset="0.6586" stop-color="#520099"/><stop offset="0.9157" stop-color="#950099"/><stop offset="0.9986" stop-color="#990083"/></linearGradient>
<linearGradient id="go160" gradientUnits="userSpaceOnUse" x1="1347.0" x2="1694.0" y1="0" y2="0"><stop offset="0.0014" stop-color="#000c99"/><stop offset="0.2810" stop-color="#000999"/><stop offset="0.2839" stop-color="#160099"/><stop offset="0.6643" stop-color="#510099"/><stop offset="0.9236" stop-color="#940099"/><stop offset="0.9986" stop-color="#990086"/></linearGradient>
<linearGradient id="go161" gradientUnits="userSpaceOnUse" x1="1349.0" x2="1692.0" y1="0" y2="0"><stop offset="0.0015" stop-color="#000c99"/><stop offset="0.2755" stop-color="#000999"/><stop offset="0.2784" stop-color="#150099"/><stop offset="0.6662" stop-color="#500099"/><stop offset="0.9606" stop-color="#990095"/><stop offset="0.9985" stop-color="#990089"/></linearGradient>
<linearGradient id="go162" gradientUnits="userSpaceOnUse" x1="1350.0" x2="1691.0" y1="0" y2="0"><stop offset="0.0015" stop-color="#000b99"/><stop offset="0.2713" stop-color="#000899"/><stop offset="0.2742" stop-color="#140099"/><stop offset="0.6672" stop-color="#4f0099"/><stop offset="0.9340" stop-color="#910099"/><stop offset="0.9839" stop-color="#990091"/><stop offset="0.9985" stop-color="#99008c"/></linearGradient>
<linearGradient id="go163" gradientUnits="userSpaceOnUse" x1="1351.0" x2="1689.0" y1="0" y2="0"><stop offset="0.0015" stop-color="#000b99"/><stop offset="0.2707" stop-color="#000899"/><stop offset="0.2737" stop-color="#130099"/><stop offset="0.6731" stop-color="#4e0099"/><stop offset="0.9453" stop-color="#910099"/><stop offset="0.9956" stop-color="#990091"/><stop offset="0.9985" stop-color="#990090"/></linearGradient>
<linearGradient id="go164" gradientUnits="userSpaceOnUse" x1="1353.0" x2="1687.0" y1="0" y2="0"><stop offset="0.0015" stop-color="#000a99"/><stop offset="0.2650" stop-color="#000799"/><stop offset="0.2680" stop-color="#120099"/><stop offset="0.6751" stop-color="#4d0099"/><stop offset="0.9506" stop-color="#900099"/><stop offset="0.9985" stop-color="#990093"/></linearGradient>
<linearGradient id="go165" gradientUnits="userSpaceOnUse" x1="1354.0" x2="1685.0" y1="0" y2="0"><stop offset="0.0015" stop-color="#000a99"/><stop offset="0.2613" stop-color="#000799"/><stop offset="0.2644" stop-color="#109"/><stop offset="0.6782" stop-color="#4c0099"/><stop offset="0.9592" stop-color="#8f0099"/><stop offset="0.9985" stop-color="#990097"/></linearGradient>
<linearGradient id="go166" gradientUnits="userSpaceOnUse" x1="1355.0" x2="1683.0" y1="0" y2="0"><stop offset="0.0015" stop-color="#000999"/><stop offset="0.2607" stop-color="#000799"/><stop offset="0.2637" stop-color="#100099"/><stop offset="0.6814" stop-color="#4b0099"/><stop offset="0.9680" stop-color="#8e0099"/><stop offset="0.9985" stop-color="#970099"/></linearGradient>
<linearGradient id="go167" gradientUnits="userSpaceOnUse" x1="1357.0" x2="1681.0" y1="0" y2="0"><stop offset="0.0015" stop-color="#000999"/><stop offset="0.2546" stop-color="#000699"/><stop offset="0.2577" stop-color="#0f0099"/><stop offset="0.6836" stop-color="#4a0099"/><stop offset="0.9738" stop-color="#8c0099"/><stop offset="0.9985" stop-color="#930099"/></linearGradient>
<linearGradient id="go168" gradientUnits="userSpaceOnUse" x1="1358.0" x2="1679.0" y1="0" y2="0"><stop offset="0.0016" stop-color="#000899"/><stop offset="0.2539" stop-color="#000699"/><stop offset="0.2570" stop-color="#0f0099"/><stop offset="0.6900" stop-color="#490099"/><stop offset="0.9860" stop-color="#8c0099"/><stop offset="0.9984" stop-color="#8f0099"/></linearGradient>
<linearGradient id="go169" gradientUnits="userSpaceOnUse" x1="1359.0" x2="1677.0" y1="0" y2="0"><stop offset="0.0016" stop-color="#000899"/><stop offset="0.2500" stop-color="#000699"/><stop offset="0.2531" stop-color="#0e0099"/><stop offset="0.6934" stop-color="#480099"/><stop offset="0.9921" stop-color="#8a0099"/><stop offset="0.9984" stop-color="#8c0099"/></linearGradient>
<linearGradient id="go170" gradientUnits="userSpaceOnUse" x1="1361.0" x2="1675.0" y1="0" y2="0"><stop offset="0.0016" stop-color="#000899"/><stop offset="0.2436" stop-color="#000599"/><stop offset="0.2468" stop-color="#0d0099"/><stop offset="0.6959" stop-color="#470099"/><stop offset="0.9984" stop-color="#809"/></linearGradient>
<linearGradient id="go171" gradientUnits="userSpaceOnUse" x1="1362.0" x2="1673.0" y1="0" y2="0"><stop offset="0.0016" stop-color="#000799"/><stop offset="0.2428" stop-color="#000599"/><stop offset="0.2460" stop-color="#0c0099"/><stop offset="0.7026" stop-color="#460099"/><stop offset="0.9984" stop-color="#850099"/></linearGradient>
<linearGradient id="go172" gradientUnits="userSpaceOnUse" x1="1363.0" x2="1671.0" y1="0" y2="0"><stop offset="0.0016" stop-color="#000799"/><stop offset="0.2386" stop-color="#000599"/><stop offset="0.2419" stop-color="#0b0099"/><stop offset="0.7062" stop-color="#450099"/><stop offset="0.9984" stop-color="#810099"/></linearGradient>
<linearGradient id="go173" gradientUnits="userSpaceOnUse" x1="1365.0" x2="1669.0" y1="0" y2="0"><stop offset="0.0016" stop-color="#000699"/><stop offset="0.2319" stop-color="#000499"/><stop offset="0.2352" stop-color="#0a0099"/><stop offset="0.7089" stop-color="#409"/><stop offset="0.9984" stop-color="#7e0099"/></linearGradient>
<linearGradient id="go174" gradientUnits="userSpaceOnUse" x1="1366.0" x2="1667.0" y1="0" y2="0"><stop offset="0.0017" stop-color="#000699"/><stop offset="0.2309" stop-color="#000499"/><stop offset="0.2342" stop-color="#0a0099"/><stop offset="0.7159" stop-color="#409"/><stop offset="0.9983" stop-color="#7b0099"/></linearGradient>
<linearGradient id="go175" gradientUnits="userSpaceOnUse" x1="1367.0" x2="1665.0" y1="0" y2="0"><stop offset="0.0017" stop-color="#000599"/><stop offset="0.2265" stop-color="#000499"/><stop offset="0.2299" stop-color="#090099"/><stop offset="0.7198" stop-color="#430099"/><stop offset="0.9983" stop-color="#780099"/></linearGradient>
<linearGradient id="go176" gradientUnits="userSpaceOnUse" x1="1369.0" x2="1663.0" y1="0" y2="0"><stop offset="0.0017" stop-color="#000599"/><stop offset="0.2228" stop-color="#000399"/><stop offset="0.2296" stop-color="#090099"/><stop offset="0.7262" stop-color="#420099"/><stop offset="0.9983" stop-color="#740099"/></linearGradient>
<linearGradient id="go177" gradientUnits="userSpaceOnUse" x1="1370.0" x2="1661.0" y1="0" y2="0"><stop offset="0.0017" stop-color="#000599"/><stop offset="0.2182" stop-color="#000399"/><stop offset="0.2251" stop-color="#080099"/><stop offset="0.7302" stop-color="#410099"/><stop offset="0.9983" stop-color="#710099"/></linearGradient>
<linearGradient id="go178" gradientUnits="userSpaceOnUse" x1="1372.0" x2="1659.0" y1="0" y2="0"><stop offset="0.0017" stop-color="#000499"/><stop offset="0.2108" stop-color="#000399"/><stop offset="0.2178" stop-color="#070099"/><stop offset="0.7334" stop-color="#400099"/><stop offset="0.9983" stop-color="#6e0099"/></linearGradient>
<linearGradient id="go179" gradientUnits="userSpaceOnUse" x1="1373.0" x2="1657.0" y1="0" y2="0"><stop offset="0.0018" stop-color="#000499"/><stop offset="0.2095" stop-color="#000299"/><stop offset="0.2201" stop-color="#060099"/><stop offset="0.7412" stop-color="#3f0099"/><stop offset="0.9982" stop-color="#6b0099"/></linearGradient>
<linearGradient id="go180" gradientUnits="userSpaceOnUse" x1="1374.0" x2="1655.0" y1="0" y2="0"><stop offset="0.0018" stop-color="#000399"/><stop offset="0.2046" stop-color="#000299"/><stop offset="0.2295" stop-color="#070099"/><stop offset="0.7562" stop-color="#400099"/><stop offset="0.9982" stop-color="#690099"/></linearGradient>
<linearGradient id="go181" gradientUnits="userSpaceOnUse" x1="1376.0" x2="1654.0" y1="0" y2="0"><stop offset="0.0018" stop-color="#000399"/><stop offset="0.1960" stop-color="#000299"/><stop offset="0.8183" stop-color="#480099"/><stop offset="0.9982" stop-color="#609"/></linearGradient>
<linearGradient id="go182" gradientUnits="userSpaceOnUse" x1="1377.0" x2="1652.0" y1="0" y2="0"><stop offset="0.0018" stop-color="#000399"/><stop offset="0.2055" stop-color="#040099"/><stop offset="0.7545" stop-color="#3d0099"/><stop offset="0.9982" stop-color="#640099"/></linearGradient>
<linearGradient id="go183" gradientUnits="userSpaceOnUse" x1="1379.0" x2="1650.0" y1="0" y2="0"><stop offset="0.0018" stop-color="#000299"/><stop offset="0.2159" stop-color="#050099"/><stop offset="0.7694" stop-color="#3d0099"/><stop offset="0.9982" stop-color="#610099"/></linearGradient>
<linearGradient id="go184" gradientUnits="userSpaceOnUse" x1="1380.0" x2="1648.0" y1="0" y2="0"><stop offset="0.0019" stop-color="#000299"/><stop offset="0.2257" stop-color="#050099"/><stop offset="0.7854" stop-color="#3e0099"/><stop offset="0.9981" stop-color="#5e0099"/></linearGradient>
<linearGradient id="go185" gradientUnits="userSpaceOnUse" x1="1382.0" x2="1646.0" y1="0" y2="0"><stop offset="0.0019" stop-color="#000299"/><stop offset="0.2330" stop-color="#050099"/><stop offset="0.8011" stop-color="#3e0099"/><stop offset="0.9981" stop-color="#5c0099"/></linearGradient>
<linearGradient id="go186" gradientUnits="userSpaceOnUse" x1="1383.0" x2="1644.0" y1="0" y2="0"><stop offset="0.0019" stop-color="#000199"/><stop offset="0.2471" stop-color="#060099"/><stop offset="0.8180" stop-color="#3f0099"/><stop offset="0.9981" stop-color="#590099"/></linearGradient>
<linearGradient id="go187" gradientUnits="userSpaceOnUse" x1="1385.0" x2="1642.0" y1="0" y2="0"><stop offset="0.0019" stop-color="#000199"/><stop offset="0.2549" stop-color="#060099"/><stop offset="0.8346" stop-color="#3f0099"/><stop offset="0.9981" stop-color="#570099"/></linearGradient>
<linearGradient id="go188" gradientUnits="userSpaceOnUse" x1="1387.0" x2="1640.0" y1="0" y2="0"><stop offset="0.0020" stop-color="#000199"/><stop offset="0.2589" stop-color="#060099"/><stop offset="0.8478" stop-color="#3f0099"/><stop offset="0.9980" stop-color="#540099"/></linearGradient>
<linearGradient id="go189" gradientUnits="userSpaceOnUse" x1="1388.0" x2="1638.0" y1="0" y2="0"><stop offset="0.0020" stop-color="#009"/><stop offset="0.2620" stop-color="#060099"/><stop offset="0.8580" stop-color="#3f0099"/><stop offset="0.9980" stop-color="#520099"/></linearGradient>
<linearGradient id="go190" gradientUnits="userSpaceOnUse" x1="1390.0" x2="1636.0" y1="0" y2="0"><stop offset="0.0020" stop-color="#009"/><stop offset="0.2703" stop-color="#060099"/><stop offset="0.8760" stop-color="#3f0099"/><stop offset="0.9980" stop-color="#4f0099"/></linearGradient>
<linearGradient id="go191" gradientUnits="userSpaceOnUse" x1="1391.0" x2="1634.0" y1="0" y2="0"><stop offset="0.0021" stop-color="#009"/><stop offset="0.2737" stop-color="#060099"/><stop offset="0.8868" stop-color="#3f0099"/><stop offset="0.9979" stop-color="#4d0099"/></linearGradient>
<linearGradient id="go192" gradientUnits="userSpaceOnUse" x1="1393.0" x2="1632.0" y1="0" y2="0"><stop offset="0.0021" stop-color="#009"/><stop offset="0.2782" stop-color="#060099"/><stop offset="0.9017" stop-color="#3f0099"/><stop offset="0.9979" stop-color="#4b0099"/></linearGradient>
<linearGradient id="go193" gradientUnits="userSpaceOnUse" x1="1394.0" x2="1630.0" y1="0" y2="0"><stop offset="0.0021" stop-color="#009"/><stop offset="0.2860" stop-color="#060099"/><stop offset="0.9174" stop-color="#3f0099"/><stop offset="0.9979" stop-color="#490099"/></linearGradient>
<linearGradient id="go194" gradientUnits="userSpaceOnUse" x1="1396.0" x2="1628.0" y1="0" y2="0"><stop offset="0.0022" stop-color="#009"/><stop offset="0.2909" stop-color="#060099"/><stop offset="0.9332" stop-color="#3f0099"/><stop offset="0.9978" stop-color="#460099"/></linearGradient>
<linearGradient id="go195" gradientUnits="userSpaceOnUse" x1="1397.0" x2="1626.0" y1="0" y2="0"><stop offset="0.0022" stop-color="#009"/><stop offset="0.2991" stop-color="#060099"/><stop offset="0.9498" stop-color="#3f0099"/><stop offset="0.9978" stop-color="#409"/></linearGradient>
<linearGradient id="go196" gradientUnits="userSpaceOnUse" x1="1399.0" x2="1624.0" y1="0" y2="0"><stop offset="0.0022" stop-color="#009"/><stop offset="0.3044" stop-color="#060099"/><stop offset="0.9667" stop-color="#3f0099"/><stop offset="0.9978" stop-color="#420099"/></linearGradient>
<linearGradient id="go197" gradientUnits="userSpaceOnUse" x1="1401.0" x2="1622.0" y1="0" y2="0"><stop offset="0.0023" stop-color="#009"/><stop offset="0.3100" stop-color="#060099"/><stop offset="0.9842" stop-color="#3f0099"/><stop offset="0.9977" stop-color="#400099"/></linearGradient>
<linearGradient id="go198" gradientUnits="userSpaceOnUse" x1="1402.0" x2="1620.0" y1="0" y2="0"><stop offset="0.0023" stop-color="#009"/><stop offset="0.3188" stop-color="#060099"/><stop offset="0.9977" stop-color="#3e0099"/></linearGradient>
<linearGradient id="go199" gradientUnits="userSpaceOnUse" x1="1404.0" x2="1618.0" y1="0" y2="0"><stop offset="0.0023" stop-color="#009"/><stop offset="0.3248" stop-color="#060099"/><stop offset="0.9977" stop-color="#3c0099"/></linearGradient>
<linearGradient id="go200" gradientUnits="userSpaceOnUse" x1="1406.0" x2="1617.0" y1="0" y2="0"><stop offset="0.0024" stop-color="#009"/><stop offset="0.3294" stop-color="#060099"/><stop offset="0.9976" stop-color="#3b0099"/></linearGradient>
<linearGradient id="go201" gradientUnits="userSpaceOnUse" x1="1407.0" x2="1615.0" y1="0" y2="0"><stop offset="0.0024" stop-color="#009"/><stop offset="0.3389" stop-color="#060099"/><stop offset="0.9976" stop-color="#390099"/></linearGradient>
<linearGradient id="go202" gradientUnits="userSpaceOnUse" x1="1409.0" x2="1613.0" y1="0" y2="0"><stop offset="0.0025" stop-color="#009"/><stop offset="0.3456" stop-color="#060099"/><stop offset="0.9975" stop-color="#370099"/></linearGradient>
<linearGradient id="go203" gradientUnits="userSpaceOnUse" x1="1411.0" x2="1611.0" y1="0" y2="0"><stop offset="0.0025" stop-color="#009"/><stop offset="0.3525" stop-color="#060099"/><stop offset="0.9975" stop-color="#350099"/></linearGradient>
<linearGradient id="go204" gradientUnits="userSpaceOnUse" x1="1413.0" x2="1609.0" y1="0" y2="0"><stop offset="0.0026" stop-color="#009"/><stop offset="0.3597" stop-color="#060099"/><stop offset="0.9974" stop-color="#309"/></linearGradient>
<linearGradient id="go205" gradientUnits="userSpaceOnUse" x1="1415.0" x2="1607.0" y1="0" y2="0"><stop offset="0.0026" stop-color="#009"/><stop offset="0.3672" stop-color="#060099"/><stop offset="0.9974" stop-color="#310099"/></linearGradient>
<linearGradient id="go206" gradientUnits="userSpaceOnUse" x1="1416.0" x2="1605.0" y1="0" y2="0"><stop offset="0.0026" stop-color="#009"/><stop offset="0.3783" stop-color="#060099"/><stop offset="0.9974" stop-color="#2f0099"/></linearGradient>
<linearGradient id="go207" gradientUnits="userSpaceOnUse" x1="1418.0" x2="1603.0" y1="0" y2="0"><stop offset="0.0027" stop-color="#009"/><stop offset="0.3865" stop-color="#060099"/><stop offset="0.9973" stop-color="#2e0099"/></linearGradient>
<linearGradient id="go208" gradientUnits="userSpaceOnUse" x1="1419.0" x2="1601.0" y1="0" y2="0"><stop offset="0.0027" stop-color="#009"/><stop offset="0.3984" stop-color="#050099"/><stop offset="0.9973" stop-color="#2c0099"/></linearGradient>
<linearGradient id="go209" gradientUnits="userSpaceOnUse" x1="1421.0" x2="1599.0" y1="0" y2="0"><stop offset="0.0028" stop-color="#009"/><stop offset="0.4073" stop-color="#050099"/><stop offset="0.9972" stop-color="#2a0099"/></linearGradient>
<linearGradient id="go210" gradientUnits="userSpaceOnUse" x1="1423.0" x2="1597.0" y1="0" y2="0"><stop offset="0.0029" stop-color="#009"/><stop offset="0.4167" stop-color="#050099"/><stop offset="0.9971" stop-color="#280099"/></linearGradient>
<linearGradient id="go211" gradientUnits="userSpaceOnUse" x1="1425.0" x2="1595.0" y1="0" y2="0"><stop offset="0.0029" stop-color="#009"/><stop offset="0.4265" stop-color="#050099"/><stop offset="0.9971" stop-color="#270099"/></linearGradient>
<linearGradient id="go212" gradientUnits="userSpaceOnUse" x1="1427.0" x2="1593.0" y1="0" y2="0"><stop offset="0.0030" stop-color="#009"/><stop offset="0.4367" stop-color="#050099"/><stop offset="0.9970" stop-color="#250099"/></linearGradient>
<linearGradient id="go213" gradientUnits="userSpaceOnUse" x1="1429.0" x2="1591.0" y1="0" y2="0"><stop offset="0.0031" stop-color="#009"/><stop offset="0.4475" stop-color="#050099"/><stop offset="0.9969" stop-color="#230099"/></linearGradient>
<linearGradient id="go214" gradientUnits="userSpaceOnUse" x1="1431.0" x2="1589.0" y1="0" y2="0"><stop offset="0.0032" stop-color="#009"/><stop offset="0.4589" stop-color="#050099"/><stop offset="0.9968" stop-color="#209"/></linearGradient>
<linearGradient id="go215" gradientUnits="userSpaceOnUse" x1="1433.0" x2="1587.0" y1="0" y2="0"><stop offset="0.0032" stop-color="#009"/><stop offset="0.4708" stop-color="#050099"/><stop offset="0.9968" stop-color="#200099"/></linearGradient>
<linearGradient id="go216" gradientUnits="userSpaceOnUse" x1="1435.0" x2="1585.0" y1="0" y2="0"><stop offset="0.0033" stop-color="#009"/><stop offset="0.4833" stop-color="#050099"/><stop offset="0.9967" stop-color="#1f0099"/></linearGradient>
<linearGradient id="go217" gradientUnits="userSpaceOnUse" x1="1437.0" x2="1583.0" y1="0" y2="0"><stop offset="0.0034" stop-color="#009"/><stop offset="0.4966" stop-color="#050099"/><stop offset="0.9966" stop-color="#1d0099"/></linearGradient>
<linearGradient id="go218" gradientUnits="userSpaceOnUse" x1="1439.0" x2="1581.0" y1="0" y2="0"><stop offset="0.0035" stop-color="#009"/><stop offset="0.5106" stop-color="#050099"/><stop offset="0.9965" stop-color="#1c0099"/></linearGradient>
<linearGradient id="go219" gradientUnits="userSpaceOnUse" x1="1441.0" x2="1579.0" y1="0" y2="0"><stop offset="0.0036" stop-color="#009"/><stop offset="0.5254" stop-color="#050099"/><stop offset="0.9964" stop-color="#1a0099"/></linearGradient>
<linearGradient id="go220" gradientUnits="userSpaceOnUse" x1="1443.0" x2="1578.0" y1="0" y2="0"><stop offset="0.0037" stop-color="#009"/><stop offset="0.5370" stop-color="#050099"/><stop offset="0.9963" stop-color="#190099"/></linearGradient>
<linearGradient id="go221" gradientUnits="userSpaceOnUse" x1="1446.0" x2="1576.0" y1="0" y2="0"><stop offset="0.0038" stop-color="#009"/><stop offset="0.5500" stop-color="#050099"/><stop offset="0.9962" stop-color="#180099"/></linearGradient>
<linearGradient id="go222" gradientUnits="userSpaceOnUse" x1="1448.0" x2="1574.0" y1="0" y2="0"><stop offset="0.0040" stop-color="#009"/><stop offset="0.5675" stop-color="#050099"/><stop offset="0.9960" stop-color="#160099"/></linearGradient>
<linearGradient id="go223" gradientUnits="userSpaceOnUse" x1="1450.0" x2="1572.0" y1="0" y2="0"><stop offset="0.0041" stop-color="#009"/><stop offset="0.5861" stop-color="#050099"/><stop offset="0.9959" stop-color="#150099"/></linearGradient>
<linearGradient id="go224" gradientUnits="userSpaceOnUse" x1="1453.0" x2="1570.0" y1="0" y2="0"><stop offset="0.0043" stop-color="#009"/><stop offset="0.6026" stop-color="#050099"/><stop offset="0.9957" stop-color="#140099"/></linearGradient>
<linearGradient id="go225" gradientUnits="userSpaceOnUse" x1="1455.0" x2="1568.0" y1="0" y2="0"><stop offset="0.0044" stop-color="#009"/><stop offset="0.6239" stop-color="#050099"/><stop offset="0.9956" stop-color="#120099"/></linearGradient>
<linearGradient id="go226" gradientUnits="userSpaceOnUse" x1="1457.0" x2="1566.0" y1="0" y2="0"><stop offset="0.0046" stop-color="#009"/><stop offset="0.6468" stop-color="#050099"/><stop offset="0.9954" stop-color="#109"/></linearGradient>
<linearGradient id="go227" gradientUnits="userSpaceOnUse" x1="1460.0" x2="1564.0" y1="0" y2="0"><stop offset="0.0048" stop-color="#009"/><stop offset="0.6779" stop-color="#060099"/><stop offset="0.9952" stop-color="#100099"/></linearGradient>
<linearGradient id="go228" gradientUnits="userSpaceOnUse" x1="1462.0" x2="1562.0" y1="0" y2="0"><stop offset="0.0050" stop-color="#009"/><stop offset="0.7050" stop-color="#060099"/><stop offset="0.9950" stop-color="#0e0099"/></linearGradient>
<linearGradient id="go229" gradientUnits="userSpaceOnUse" x1="1465.0" x2="1560.0" y1="0" y2="0"><stop offset="0.0053" stop-color="#009"/><stop offset="0.7316" stop-color="#060099"/><stop offset="0.9947" stop-color="#0d0099"/></linearGradient>
<linearGradient id="go230" gradientUnits="userSpaceOnUse" x1="1467.0" x2="1558.0" y1="0" y2="0"><stop offset="0.0055" stop-color="#009"/><stop offset="0.7637" stop-color="#060099"/><stop offset="0.9945" stop-color="#0c0099"/></linearGradient>
<linearGradient id="go231" gradientUnits="userSpaceOnUse" x1="1469.0" x2="1556.0" y1="0" y2="0"><stop offset="0.0057" stop-color="#009"/><stop offset="0.7989" stop-color="#060099"/><stop offset="0.9943" stop-color="#0b0099"/></linearGradient>
<linearGradient id="go232" gradientUnits="userSpaceOnUse" x1="1471.0" x2="1554.0" y1="0" y2="0"><stop offset="0.0060" stop-color="#009"/><stop offset="0.8373" stop-color="#060099"/><stop offset="0.9940" stop-color="#090099"/></linearGradient>
<linearGradient id="go233" gradientUnits="userSpaceOnUse" x1="1474.0" x2="1552.0" y1="0" y2="0"><stop offset="0.0064" stop-color="#009"/><stop offset="0.8782" stop-color="#050099"/><stop offset="0.9936" stop-color="#080099"/></linearGradient>
<linearGradient id="go234" gradientUnits="userSpaceOnUse" x1="1477.0" x2="1550.0" y1="0" y2="0"><stop offset="0.0068" stop-color="#009"/><stop offset="0.9384" stop-color="#060099"/><stop offset="0.9932" stop-color="#070099"/></linearGradient>
<linearGradient id="go235" gradientUnits="userSpaceOnUse" x1="1478.0" x2="1548.0" y1="0" y2="0"><stop offset="0.0071" stop-color="#009"/><stop offset="0.9786" stop-color="#050099"/><stop offset="0.9929" stop-color="#060099"/></linearGradient>
<linearGradient id="go236" gradientUnits="userSpaceOnUse" x1="1481.0" x2="1546.0" y1="0" y2="0"><stop offset="0.0077" stop-color="#009"/><stop offset="0.9923" stop-color="#050099"/></linearGradient>
<linearGradient id="go237" gradientUnits="userSpaceOnUse" x1="1484.0" x2="1544.0" y1="0" y2="0"><stop offset="0.0083" stop-color="#009"/><stop offset="0.9917" stop-color="#030099"/></linearGradient>
<linearGradient id="go238" gradientUnits="userSpaceOnUse" x1="1486.0" x2="1542.0" y1="0" y2="0"><stop offset="0.0089" stop-color="#009"/><stop offset="0.9911" stop-color="#020099"/></linearGradient>
<linearGradient id="go239" gradientUnits="userSpaceOnUse" x1="1488.0" x2="1541.0" y1="0" y2="0"><stop offset="0.0094" stop-color="#009"/><stop offset="0.9906" stop-color="#010099"/></linearGradient>
<linearGradient id="go240" gradientUnits="userSpaceOnUse" x1="1491.0" x2="1539.0" y1="0" y2="0"><stop offset="0.0104" stop-color="#009"/><stop offset="0.9896" stop-color="#009"/></linearGradient>
<linearGradient id="go241" gradientUnits="userSpaceOnUse" x1="1494.0" x2="1537.0" y1="0" y2="0"><stop offset="0.0116" stop-color="#009"/><stop offset="0.9884" stop-color="#009"/></linearGradient>
<linearGradient id="go242" gradientUnits="userSpaceOnUse" x1="1496.0" x2="1535.0" y1="0" y2="0"><stop offset="0.0128" stop-color="#009"/><stop offset="0.9872" stop-color="#009"/></linearGradient>
<linearGradient id="go243" gradientUnits="userSpaceOnUse" x1="1498.0" x2="1533.0" y1="0" y2="0"><stop offset="0.0143" stop-color="#009"/><stop offset="0.9857" stop-color="#009"/></linearGradient>
<linearGradient id="go244" gradientUnits="userSpaceOnUse" x1="1501.0" x2="1531.0" y1="0" y2="0"><stop offset="0.0167" stop-color="#009"/><stop offset="0.9833" stop-color="#009"/></linearGradient>
<linearGradient id="go245" gradientUnits="userSpaceOnUse" x1="1503.0" x2="1529.0" y1="0" y2="0"><stop offset="0.0192" stop-color="#009"/><stop offset="0.9808" stop-color="#009"/></linearGradient>
<linearGradient id="go246" gradientUnits="userSpaceOnUse" x1="1506.0" x2="1527.0" y1="0" y2="0"><stop offset="0.0238" stop-color="#009"/><stop offset="0.9762" stop-color="#009"/></linearGradient>
<linearGradient id="go247" gradientUnits="userSpaceOnUse" x1="1508.0" x2="1525.0" y1="0" y2="0"><stop offset="0.0294" stop-color="#009"/><stop offset="0.9706" stop-color="#009"/></linearGradient>
<linearGradient id="go248" gradientUnits="userSpaceOnUse" x1="1511.0" x2="1523.0" y1="0" y2="0"><stop offset="0.0417" stop-color="#009"/><stop offset="0.9583" stop-color="#009"/></linearGradient>
<linearGradient id="gi0" gradientUnits="userSpaceOnUse" x1="1367.0" x2="1374.0" y1="0" y2="0"><stop offset="0.0714" stop-color="#0f0"/><stop offset="0.6429" stop-color="#05ff00"/><stop offset="0.9286" stop-color="#0dff00"/></linearGradient>
<linearGradient id="gi1" gradientUnits="userSpaceOnUse" x1="1367.0" x2="1396.0" y1="0" y2="0"><stop offset="0.0172" stop-color="#00ff04"/><stop offset="0.1552" stop-color="#03ff03"/><stop offset="0.9483" stop-color="#4bff00"/><stop offset="0.9828" stop-color="#4dff00"/></linearGradient>
<linearGradient id="gi2" gradientUnits="userSpaceOnUse" x1="1367.0" x2="1417.0" y1="0" y2="0"><stop offset="0.0100" stop-color="#00ff0c"/><stop offset="0.1100" stop-color="#07ff0b"/><stop offset="0.6700" stop-color="#5aff00"/><stop offset="0.9900" stop-color="#85ff00"/></linearGradient>
<linearGradient id="gi3" gradientUnits="userSpaceOnUse" x1="1368.0" x2="1439.0" y1="0" y2="0"><stop offset="0.0070" stop-color="#00ff13"/><stop offset="0.0634" stop-color="#05ff12"/><stop offset="0.4296" stop-color="#55ff0a"/><stop offset="0.9366" stop-color="#b5ff00"/><stop offset="0.9930" stop-color="#c0ff00"/></linearGradient>
<linearGradient id="gi4" gradientUnits="userSpaceOnUse" x1="1368.0" x2="1461.0" y1="0" y2="0"><stop offset="0.0054" stop-color="#00ff19"/><stop offset="0.0484" stop-color="#03ff18"/><stop offset="0.2957" stop-color="#4cff12"/><stop offset="0.9086" stop-color="#e8ff00"/><stop offset="0.9946" stop-color="#fffe00"/></linearGradient>
<linearGradient id="gi5" gradientUnits="userSpaceOnUse" x1="1368.0" x2="1482.0" y1="0" y2="0"><stop offset="0.0044" stop-color="#00ff1f"/><stop offset="0.0395" stop-color="#02ff1e"/><stop offset="0.2061" stop-color="#40ff1a"/><stop offset="0.8114" stop-color="#fffe01"/><stop offset="0.9956" stop-color="#ffca00"/></linearGradient>
<linearGradient id="gi6" gradientUnits="userSpaceOnUse" x1="1369.0" x2="1504.0" y1="0" y2="0"><stop offset="0.0037" stop-color="#00ff24"/><stop offset="0.0333" stop-color="#05ff23"/><stop offset="0.2185" stop-color="#53ff1e"/><stop offset="0.6778" stop-color="#fffd0c"/><stop offset="0.8852" stop-color="#ffbc00"/><stop offset="0.9963" stop-color="#ffa300"/></linearGradient>
<linearGradient id="gi7" gradientUnits="userSpaceOnUse" x1="1369.0" x2="1526.0" y1="0" y2="0"><stop offset="0.0032" stop-color="#00ff2a"/><stop offset="0.0287" stop-color="#04ff29"/><stop offset="0.1688" stop-color="#4aff25"/><stop offset="0.5828" stop-color="#fffc15"/><stop offset="0.7611" stop-color="#ffbb07"/><stop offset="0.9777" stop-color="#ff8900"/><stop offset="0.9968" stop-color="#ff8500"/></linearGradient>
<linearGradient id="gi8" gradientUnits="userSpaceOnUse" x1="1369.0" x2="1547.0" y1="0" y2="0"><stop offset="0.0028" stop-color="#00ff2f"/><stop offset="0.0253" stop-color="#02ff2f"/><stop offset="0.1320" stop-color="#41ff2c"/><stop offset="0.5140" stop-color="#fffc1d"/><stop offset="0.6713" stop-color="#ffba0f"/><stop offset="0.9073" stop-color="#ff7f00"/><stop offset="0.9972" stop-color="#ff6f00"/></linearGradient>
<linearGradient id="gi9" gradientUnits="userSpaceOnUse" x1="1370.0" x2="1569.0" y1="0" y2="0"><stop offset="0.0025" stop-color="#00ff34"/><stop offset="0.0176" stop-color="#00ff34"/><stop offset="0.0980" stop-color="#38ff32"/><stop offset="0.4548" stop-color="#fffb24"/><stop offset="0.5955" stop-color="#ffba15"/><stop offset="0.8065" stop-color="#ff7e06"/><stop offset="0.9975" stop-color="#ff5c00"/></linearGradient>
<linearGradient id="gi10" gradientUnits="userSpaceOnUse" x1="1370.0" x2="1590.0" y1="0" y2="0"><stop offset="0.0023" stop-color="#00ff3a"/><stop offset="0.0205" stop-color="#04ff39"/><stop offset="0.1205" stop-color="#4cff36"/><stop offset="0.4068" stop-color="#fffe2c"/><stop offset="0.5295" stop-color="#ffbd1c"/><stop offset="0.7159" stop-color="#ff810d"/><stop offset="0.9886" stop-color="#ff4d00"/><stop offset="0.9977" stop-color="#ff4c00"/></linearGradient>
<linearGradient id="gi11" gradientUnits="userSpaceOnUse" x1="1370.0" x2="1612.0" y1="0" y2="0"><stop offset="0.0021" stop-color="#00ff3f"/><stop offset="0.0186" stop-color="#02ff3e"/><stop offset="0.0971" stop-color="#42ff3c"/><stop offset="0.3698" stop-color="#fffd33"/><stop offset="0.4814" stop-color="#ffbc22"/><stop offset="0.6508" stop-color="#ff8012"/><stop offset="0.9236" stop-color="#ff4900"/><stop offset="0.9979" stop-color="#ff3e00"/></linearGradient>
<linearGradient id="gi12" gradientUnits="userSpaceOnUse" x1="1371.0" x2="1634.0" y1="0" y2="0"><stop offset="0.0019" stop-color="#0f4"/><stop offset="0.0133" stop-color="#0f4"/><stop offset="0.0741" stop-color="#39ff42"/><stop offset="0.3365" stop-color="#fffd3a"/><stop offset="0.4392" stop-color="#ffbb27"/><stop offset="0.5951" stop-color="#ff8016"/><stop offset="0.8460" stop-color="#ff4805"/><stop offset="0.9981" stop-color="#ff3200"/></linearGradient>
<linearGradient id="gi13" gradientUnits="userSpaceOnUse" x1="1371.0" x2="1655.0" y1="0" y2="0"><stop offset="0.0018" stop-color="#00ff49"/><stop offset="0.0158" stop-color="#04ff49"/><stop offset="0.0933" stop-color="#4dff47"/><stop offset="0.3116" stop-color="#fffc40"/><stop offset="0.4067" stop-color="#ffbb2d"/><stop offset="0.5511" stop-color="#ff7f1b"/><stop offset="0.7835" stop-color="#ff4809"/><stop offset="0.9982" stop-color="#ff2700"/></linearGradient>
<linearGradient id="gi14" gradientUnits="userSpaceOnUse" x1="1371.0" x2="1677.0" y1="0" y2="0"><stop offset="0.0016" stop-color="#00ff4e"/><stop offset="0.0147" stop-color="#02ff4e"/><stop offset="0.0768" stop-color="#44ff4d"/><stop offset="0.2892" stop-color="#fffb47"/><stop offset="0.3775" stop-color="#ffba32"/><stop offset="0.5114" stop-color="#ff7e1f"/><stop offset="0.7271" stop-color="#ff470d"/><stop offset="0.9984" stop-color="#ff1d00"/></linearGradient>
<linearGradient id="gi15" gradientUnits="userSpaceOnUse" x1="1372.0" x2="1699.0" y1="0" y2="0"><stop offset="0.0015" stop-color="#00ff53"/><stop offset="0.0107" stop-color="#00ff53"/><stop offset="0.0566" stop-color="#37ff52"/><stop offset="0.2645" stop-color="#fffe4e"/><stop offset="0.3440" stop-color="#ffbd39"/><stop offset="0.4664" stop-color="#ff8125"/><stop offset="0.6621" stop-color="#ff4a12"/><stop offset="0.9985" stop-color="#ff1400"/></linearGradient>
<linearGradient id="gi16" gradientUnits="userSpaceOnUse" x1="1372.0" x2="1720.0" y1="0" y2="0"><stop offset="0.0014" stop-color="#00ff58"/><stop offset="0.0129" stop-color="#04ff58"/><stop offset="0.0761" stop-color="#4eff57"/><stop offset="0.2486" stop-color="#fffd54"/><stop offset="0.3233" stop-color="#ffbc3e"/><stop offset="0.4382" stop-color="#ff8029"/><stop offset="0.6221" stop-color="#ff4915"/><stop offset="0.9727" stop-color="#ff0e00"/><stop offset="0.9986" stop-color="#ff0b00"/></linearGradient>
<linearGradient id="gi17" gradientUnits="userSpaceOnUse" x1="1372.0" x2="1742.0" y1="0" y2="0"><stop offset="0.0014" stop-color="#00ff5d"/><stop offset="0.0122" stop-color="#02ff5d"/><stop offset="0.0635" stop-color="#45ff5d"/><stop offset="0.2338" stop-color="#fffd5b"/><stop offset="0.3041" stop-color="#ffbc43"/><stop offset="0.4095" stop-color="#ff812d"/><stop offset="0.5797" stop-color="#ff4a19"/><stop offset="0.9041" stop-color="#ff0f02"/><stop offset="0.9986" stop-color="#f00"/></linearGradient>
<linearGradient id="gi18" gradientUnits="userSpaceOnUse" x1="1373.0" x2="1742.0" y1="0" y2="0"><stop offset="0.0014" stop-color="#00ff62"/><stop offset="0.0095" stop-color="#00ff62"/><stop offset="0.0474" stop-color="#35ff62"/><stop offset="0.2317" stop-color="#fffc61"/><stop offset="0.3022" stop-color="#ffbb48"/><stop offset="0.4079" stop-color="#ff8031"/><stop offset="0.5786" stop-color="#ff491c"/><stop offset="0.9065" stop-color="#ff0e06"/><stop offset="0.9986" stop-color="#f00"/></linearGradient>
<linearGradient id="gi19" gradientUnits="userSpaceOnUse" x1="1373.0" x2="1740.0" y1="0" y2="0"><stop offset="0.0014" stop-color="#00ff67"/><stop offset="0.0123" stop-color="#04ff67"/><stop offset="0.0722" stop-color="#4fff67"/><stop offset="0.2330" stop-color="#fffb67"/><stop offset="0.3038" stop-color="#ffba4d"/><stop offset="0.4101" stop-color="#ff7f35"/><stop offset="0.5817" stop-color="#ff481f"/><stop offset="0.9142" stop-color="#ff0d08"/><stop offset="0.9986" stop-color="#ff0004"/></linearGradient>
<linearGradient id="gi20" gradientUnits="userSpaceOnUse" x1="1373.0" x2="1738.0" y1="0" y2="0"><stop offset="0.0014" stop-color="#00ff6c"/><stop offset="0.0123" stop-color="#03ff6c"/><stop offset="0.0644" stop-color="#46ff6d"/><stop offset="0.2342" stop-color="#fffb6d"/><stop offset="0.3055" stop-color="#ffba52"/><stop offset="0.4123" stop-color="#ff7f39"/><stop offset="0.5849" stop-color="#ff4822"/><stop offset="0.9247" stop-color="#ff0c0b"/><stop offset="0.9986" stop-color="#ff0007"/></linearGradient>
<linearGradient id="gi21" gradientUnits="userSpaceOnUse" x1="1373.0" x2="1736.0" y1="0" y2="0"><stop offset="0.0014" stop-color="#00ff71"/><stop offset="0.0124" stop-color="#00ff71"/><stop offset="0.0510" stop-color="#36ff72"/><stop offset="0.2328" stop-color="#fffd75"/><stop offset="0.3017" stop-color="#ffbd58"/><stop offset="0.4063" stop-color="#ff813e"/><stop offset="0.5744" stop-color="#ff4a27"/><stop offset="0.8912" stop-color="#ff110f"/><stop offset="0.9986" stop-color="#ff000a"/></linearGradient>
<linearGradient id="gi22" gradientUnits="userSpaceOnUse" x1="1374.0" x2="1734.0" y1="0" y2="0"><stop offset="0.0014" stop-color="#00ff76"/><stop offset="0.0125" stop-color="#05ff76"/><stop offset="0.0736" stop-color="#51ff78"/><stop offset="0.2319" stop-color="#fffd7b"/><stop offset="0.3014" stop-color="#ffbc5d"/><stop offset="0.4069" stop-color="#ff8142"/><stop offset="0.5764" stop-color="#ff4a2a"/><stop offset="0.8986" stop-color="#ff0f11"/><stop offset="0.9986" stop-color="#ff000c"/></linearGradient>
<linearGradient id="gi23" gradientUnits="userSpaceOnUse" x1="1374.0" x2="1732.0" y1="0" y2="0"><stop offset="0.0014" stop-color="#00ff7b"/><stop offset="0.0126" stop-color="#03ff7b"/><stop offset="0.0656" stop-color="#47ff7d"/><stop offset="0.2332" stop-color="#fffc81"/><stop offset="0.3031" stop-color="#ffbc62"/><stop offset="0.4092" stop-color="#ff8046"/><stop offset="0.5796" stop-color="#ff492d"/><stop offset="0.9064" stop-color="#ff0e14"/><stop offset="0.9986" stop-color="#ff000f"/></linearGradient>
<linearGradient id="gi24" gradientUnits="userSpaceOnUse" x1="1374.0" x2="1730.0" y1="0" y2="0"><stop offset="0.0014" stop-color="#00ff80"/><stop offset="0.0126" stop-color="#00ff80"/><stop offset="0.0548" stop-color="#3aff82"/><stop offset="0.2346" stop-color="#fffc87"/><stop offset="0.3048" stop-color="#ffbb67"/><stop offset="0.4115" stop-color="#ff7f4a"/><stop offset="0.5829" stop-color="#ff4830"/><stop offset="0.9143" stop-color="#ff0d16"/><stop offset="0.9986" stop-color="#f01"/></linearGradient>
<linearGradient id="gi25" gradientUnits="userSpaceOnUse" x1="1375.0" x2="1728.0" y1="0" y2="0"><stop offset="0.0014" stop-color="#00ff85"/><stop offset="0.0127" stop-color="#05ff86"/><stop offset="0.0751" stop-color="#52ff88"/><stop offset="0.2337" stop-color="#fffb8d"/><stop offset="0.3045" stop-color="#ffba6c"/><stop offset="0.4122" stop-color="#ff7e4e"/><stop offset="0.5850" stop-color="#ff4833"/><stop offset="0.9249" stop-color="#ff0c17"/><stop offset="0.9986" stop-color="#ff0014"/></linearGradient>
<linearGradient id="gi26" gradientUnits="userSpaceOnUse" x1="1375.0" x2="1726.0" y1="0" y2="0"><stop offset="0.0014" stop-color="#00ff8a"/><stop offset="0.0128" stop-color="#03ff8b"/><stop offset="0.0670" stop-color="#48ff8d"/><stop offset="0.2322" stop-color="#fffe95"/><stop offset="0.3006" stop-color="#ffbd73"/><stop offset="0.4060" stop-color="#ff8153"/><stop offset="0.5741" stop-color="#ff4a37"/><stop offset="0.8903" stop-color="#ff111c"/><stop offset="0.9986" stop-color="#ff0016"/></linearGradient>
<linearGradient id="gi27" gradientUnits="userSpaceOnUse" x1="1375.0" x2="1724.0" y1="0" y2="0"><stop offset="0.0014" stop-color="#00ff8f"/><stop offset="0.0129" stop-color="#01ff90"/><stop offset="0.0559" stop-color="#3bff92"/><stop offset="0.2335" stop-color="#fffd9b"/><stop offset="0.3023" stop-color="#ffbd78"/><stop offset="0.4083" stop-color="#ff8157"/><stop offset="0.5774" stop-color="#ff4a3a"/><stop offset="0.8983" stop-color="#ff101e"/><stop offset="0.9986" stop-color="#ff0018"/></linearGradient>
<linearGradient id="gi28" gradientUnits="userSpaceOnUse" x1="1376.0" x2="1722.0" y1="0" y2="0"><stop offset="0.0014" stop-color="#00ff94"/><stop offset="0.0130" stop-color="#05ff95"/><stop offset="0.0766" stop-color="#54ff98"/><stop offset="0.2327" stop-color="#fffca1"/><stop offset="0.3020" stop-color="#ffbc7d"/><stop offset="0.4090" stop-color="#ff805b"/><stop offset="0.5795" stop-color="#ff493d"/><stop offset="0.9061" stop-color="#ff0e20"/><stop offset="0.9986" stop-color="#ff001b"/></linearGradient>
<linearGradient id="gi29" gradientUnits="userSpaceOnUse" x1="1376.0" x2="1720.0" y1="0" y2="0"><stop offset="0.0015" stop-color="#0f9"/><stop offset="0.0131" stop-color="#03ff9a"/><stop offset="0.0683" stop-color="#4aff9d"/><stop offset="0.2340" stop-color="#fffca7"/><stop offset="0.3038" stop-color="#ffbb81"/><stop offset="0.4113" stop-color="#ff7f5f"/><stop offset="0.5828" stop-color="#ff4840"/><stop offset="0.9142" stop-color="#ff0d22"/><stop offset="0.9985" stop-color="#ff001d"/></linearGradient>
<linearGradient id="gi30" gradientUnits="userSpaceOnUse" x1="1376.0" x2="1718.0" y1="0" y2="0"><stop offset="0.0015" stop-color="#00ff9f"/><stop offset="0.0132" stop-color="#01ff9f"/><stop offset="0.0570" stop-color="#3cffa2"/><stop offset="0.2354" stop-color="#fffbad"/><stop offset="0.3056" stop-color="#ffba86"/><stop offset="0.4137" stop-color="#ff7e62"/><stop offset="0.5863" stop-color="#ff4742"/><stop offset="0.9254" stop-color="#ff0c23"/><stop offset="0.9985" stop-color="#ff001f"/></linearGradient>
<linearGradient id="gi31" gradientUnits="userSpaceOnUse" x1="1377.0" x2="1716.0" y1="0" y2="0"><stop offset="0.0015" stop-color="#00ffa4"/><stop offset="0.0103" stop-color="#00ffa4"/><stop offset="0.0575" stop-color="#3fffa8"/><stop offset="0.2316" stop-color="#fffeb6"/><stop offset="0.3024" stop-color="#ffbc8c"/><stop offset="0.4086" stop-color="#ff8068"/><stop offset="0.5796" stop-color="#ff4947"/><stop offset="0.9071" stop-color="#ff0e27"/><stop offset="0.9985" stop-color="#ff0021"/></linearGradient>
<linearGradient id="gi32" gradientUnits="userSpaceOnUse" x1="1377.0" x2="1715.0" y1="0" y2="0"><stop offset="0.0015" stop-color="#00ffa9"/><stop offset="0.0133" stop-color="#04ffaa"/><stop offset="0.0695" stop-color="#4bffae"/><stop offset="0.2322" stop-color="#fffdbc"/><stop offset="0.3033" stop-color="#ffbb91"/><stop offset="0.4098" stop-color="#ff7f6b"/><stop offset="0.5814" stop-color="#ff4849"/><stop offset="0.9127" stop-color="#ff0d29"/><stop offset="0.9985" stop-color="#ff0023"/></linearGradient>
<linearGradient id="gi33" gradientUnits="userSpaceOnUse" x1="1377.0" x2="1713.0" y1="0" y2="0"><stop offset="0.0015" stop-color="#00ffae"/><stop offset="0.0134" stop-color="#01ffaf"/><stop offset="0.0580" stop-color="#3dffb3"/><stop offset="0.2336" stop-color="#fffcc2"/><stop offset="0.3021" stop-color="#ffbc97"/><stop offset="0.4062" stop-color="#ff8171"/><stop offset="0.5729" stop-color="#ff4a4e"/><stop offset="0.8884" stop-color="#ff112d"/><stop offset="0.9985" stop-color="#ff0026"/></linearGradient>
<linearGradient id="gi34" gradientUnits="userSpaceOnUse" x1="1378.0" x2="1711.0" y1="0" y2="0"><stop offset="0.0015" stop-color="#00ffb4"/><stop offset="0.0105" stop-color="#00ffb4"/><stop offset="0.0586" stop-color="#40ffb8"/><stop offset="0.2327" stop-color="#fffcc8"/><stop offset="0.3018" stop-color="#ffbc9c"/><stop offset="0.4069" stop-color="#ff8074"/><stop offset="0.5751" stop-color="#ff4a51"/><stop offset="0.8964" stop-color="#ff0f2f"/><stop offset="0.9985" stop-color="#ff0028"/></linearGradient>
<linearGradient id="gi35" gradientUnits="userSpaceOnUse" x1="1378.0" x2="1709.0" y1="0" y2="0"><stop offset="0.0015" stop-color="#00ffb9"/><stop offset="0.0136" stop-color="#04ffba"/><stop offset="0.0710" stop-color="#4dffbf"/><stop offset="0.2341" stop-color="#fffbce"/><stop offset="0.3036" stop-color="#ffbba1"/><stop offset="0.4094" stop-color="#ff8078"/><stop offset="0.5785" stop-color="#ff4954"/><stop offset="0.9048" stop-color="#ff0e30"/><stop offset="0.9985" stop-color="#ff002a"/></linearGradient>
<linearGradient id="gi36" gradientUnits="userSpaceOnUse" x1="1378.0" x2="1707.0" y1="0" y2="0"><stop offset="0.0015" stop-color="#00ffbe"/><stop offset="0.0137" stop-color="#01ffbf"/><stop offset="0.0593" stop-color="#3effc3"/><stop offset="0.2325" stop-color="#fffed7"/><stop offset="0.3024" stop-color="#ffbca8"/><stop offset="0.4088" stop-color="#ff807d"/><stop offset="0.5790" stop-color="#ff4957"/><stop offset="0.9043" stop-color="#ff0e33"/><stop offset="0.9985" stop-color="#ff002c"/></linearGradient>
<linearGradient id="gi37" gradientUnits="userSpaceOnUse" x1="1379.0" x2="1705.0" y1="0" y2="0"><stop offset="0.0015" stop-color="#00ffc4"/><stop offset="0.0107" stop-color="#00ffc5"/><stop offset="0.0567" stop-color="#3effc9"/><stop offset="0.2316" stop-color="#fffddd"/><stop offset="0.3021" stop-color="#ffbcad"/><stop offset="0.4095" stop-color="#ff7f81"/><stop offset="0.5813" stop-color="#ff485a"/><stop offset="0.9126" stop-color="#ff0d35"/><stop offset="0.9985" stop-color="#ff002f"/></linearGradient>
<linearGradient id="gi38" gradientUnits="userSpaceOnUse" x1="1379.0" x2="1703.0" y1="0" y2="0"><stop offset="0.0015" stop-color="#00ffc9"/><stop offset="0.0139" stop-color="#04ffca"/><stop offset="0.0725" stop-color="#4effd0"/><stop offset="0.2330" stop-color="#fffde4"/><stop offset="0.3040" stop-color="#ffbbb1"/><stop offset="0.4090" stop-color="#ff8085"/><stop offset="0.5787" stop-color="#ff495d"/><stop offset="0.9059" stop-color="#ff0e38"/><stop offset="0.9985" stop-color="#ff0031"/></linearGradient>
<linearGradient id="gi39" gradientUnits="userSpaceOnUse" x1="1379.0" x2="1701.0" y1="0" y2="0"><stop offset="0.0016" stop-color="#00ffce"/><stop offset="0.0140" stop-color="#02ffd0"/><stop offset="0.0606" stop-color="#40ffd5"/><stop offset="0.2345" stop-color="#fffcea"/><stop offset="0.3059" stop-color="#ffbab6"/><stop offset="0.4115" stop-color="#ff7f89"/><stop offset="0.5823" stop-color="#ff4860"/><stop offset="0.9146" stop-color="#ff0d39"/><stop offset="0.9984" stop-color="#f03"/></linearGradient>
<linearGradient id="gi40" gradientUnits="userSpaceOnUse" x1="1380.0" x2="1699.0" y1="0" y2="0"><stop offset="0.0016" stop-color="#00ffd4"/><stop offset="0.0110" stop-color="#00ffd5"/><stop offset="0.0549" stop-color="#3bffda"/><stop offset="0.2335" stop-color="#fffbf0"/><stop offset="0.3025" stop-color="#ffbbbd"/><stop offset="0.4091" stop-color="#ff808e"/><stop offset="0.5784" stop-color="#ff4964"/><stop offset="0.9044" stop-color="#ff0e3c"/><stop offset="0.9984" stop-color="#ff0035"/></linearGradient>
<linearGradient id="gi41" gradientUnits="userSpaceOnUse" x1="1380.0" x2="1697.0" y1="0" y2="0"><stop offset="0.0016" stop-color="#00ffda"/><stop offset="0.0142" stop-color="#04ffdb"/><stop offset="0.0741" stop-color="#50ffe2"/><stop offset="0.2319" stop-color="#fffefa"/><stop offset="0.3013" stop-color="#ffbdc4"/><stop offset="0.4054" stop-color="#ff8294"/><stop offset="0.5726" stop-color="#ff4a69"/><stop offset="0.8880" stop-color="#ff1140"/><stop offset="0.9984" stop-color="#ff0038"/></linearGradient>
<linearGradient id="gi42" gradientUnits="userSpaceOnUse" x1="1380.0" x2="1695.0" y1="0" y2="0"><stop offset="0.0016" stop-color="#00ffdf"/><stop offset="0.0143" stop-color="#02ffe1"/><stop offset="0.0619" stop-color="#41ffe7"/><stop offset="0.2333" stop-color="#fefcff"/><stop offset="0.3095" stop-color="#ffb7c5"/><stop offset="0.4175" stop-color="#ff7d94"/><stop offset="0.5921" stop-color="#ff4669"/><stop offset="0.9222" stop-color="#ff0c40"/><stop offset="0.9984" stop-color="#ff003a"/></linearGradient>
<linearGradient id="gi43" gradientUnits="userSpaceOnUse" x1="1381.0" x2="1693.0" y1="0" y2="0"><stop offset="0.0016" stop-color="#00ffe5"/><stop offset="0.0112" stop-color="#00ffe6"/><stop offset="0.0561" stop-color="#3cffec"/><stop offset="0.2067" stop-color="#dffaff"/><stop offset="0.2420" stop-color="#fff2fd"/><stop offset="0.3157" stop-color="#ffb2c6"/><stop offset="0.4279" stop-color="#ff7895"/><stop offset="0.6106" stop-color="#ff4168"/><stop offset="0.9535" stop-color="#ff0740"/><stop offset="0.9984" stop-color="#ff003c"/></linearGradient>
<linearGradient id="gi44" gradientUnits="userSpaceOnUse" x1="1381.0" x2="1691.0" y1="0" y2="0"><stop offset="0.0016" stop-color="#00ffeb"/><stop offset="0.0145" stop-color="#04ffec"/><stop offset="0.0758" stop-color="#51fff5"/><stop offset="0.1790" stop-color="#bdf9ff"/><stop offset="0.2500" stop-color="#ffeafd"/><stop offset="0.3274" stop-color="#ffabc5"/><stop offset="0.4468" stop-color="#ff7193"/><stop offset="0.6435" stop-color="#ff3a66"/><stop offset="0.9984" stop-color="#ff003e"/></linearGradient>
<linearGradient id="gi45" gradientUnits="userSpaceOnUse" x1="1381.0" x2="1689.0" y1="0" y2="0"><stop offset="0.0016" stop-color="#00fff0"/><stop offset="0.0146" stop-color="#02fff2"/><stop offset="0.0633" stop-color="#42fff9"/><stop offset="0.1672" stop-color="#acf4ff"/><stop offset="0.2581" stop-color="#ffe3fd"/><stop offset="0.3393" stop-color="#ffa4c5"/><stop offset="0.4659" stop-color="#ff6a91"/><stop offset="0.6769" stop-color="#ff3464"/><stop offset="0.9984" stop-color="#ff0041"/></linearGradient>
<linearGradient id="gi46" gradientUnits="userSpaceOnUse" x1="1382.0" x2="1687.0" y1="0" y2="0"><stop offset="0.0016" stop-color="#00fff6"/><stop offset="0.0115" stop-color="#00fff8"/><stop offset="0.0541" stop-color="#3afffe"/><stop offset="0.2148" stop-color="#d5e6ff"/><stop offset="0.2639" stop-color="#ffdcfd"/><stop offset="0.3492" stop-color="#ff9dc4"/><stop offset="0.4803" stop-color="#ff6591"/><stop offset="0.7033" stop-color="#ff2f63"/><stop offset="0.9984" stop-color="#ff0043"/></linearGradient>
<linearGradient id="gi47" gradientUnits="userSpaceOnUse" x1="1382.0" x2="1685.0" y1="0" y2="0"><stop offset="0.0017" stop-color="#00fffc"/><stop offset="0.0149" stop-color="#05fffe"/><stop offset="0.0677" stop-color="#46f8ff"/><stop offset="0.2690" stop-color="#fed7ff"/><stop offset="0.3647" stop-color="#ff95c2"/><stop offset="0.5066" stop-color="#ff5d8e"/><stop offset="0.7475" stop-color="#ff2760"/><stop offset="0.9983" stop-color="#ff0045"/></linearGradient>
<linearGradient id="gi48" gradientUnits="userSpaceOnUse" x1="1382.0" x2="1683.0" y1="0" y2="0"><stop offset="0.0017" stop-color="#00fcff"/><stop offset="0.0150" stop-color="#02faff"/><stop offset="0.0615" stop-color="#3df3ff"/><stop offset="0.2442" stop-color="#e2d6ff"/><stop offset="0.2841" stop-color="#ffcbfb"/><stop offset="0.3771" stop-color="#ff8fc1"/><stop offset="0.5266" stop-color="#ff578c"/><stop offset="0.7757" stop-color="#ff225f"/><stop offset="0.9983" stop-color="#ff0048"/></linearGradient>
<linearGradient id="gi49" gradientUnits="userSpaceOnUse" x1="1383.0" x2="1681.0" y1="0" y2="0"><stop offset="0.0017" stop-color="#00f6ff"/><stop offset="0.0117" stop-color="#00f5ff"/><stop offset="0.0520" stop-color="#34efff"/><stop offset="0.2164" stop-color="#c7d5ff"/><stop offset="0.2903" stop-color="#ffc5fb"/><stop offset="0.3876" stop-color="#ff8ac0"/><stop offset="0.5419" stop-color="#ff528c"/><stop offset="0.8003" stop-color="#ff1e5f"/><stop offset="0.9983" stop-color="#ff004a"/></linearGradient>
<linearGradient id="gi50" gradientUnits="userSpaceOnUse" x1="1383.0" x2="1679.0" y1="0" y2="0"><stop offset="0.0017" stop-color="#00f1ff"/><stop offset="0.0152" stop-color="#05efff"/><stop offset="0.0726" stop-color="#46e7ff"/><stop offset="0.2922" stop-color="#fec3ff"/><stop offset="0.3970" stop-color="#ff86c1"/><stop offset="0.5524" stop-color="#ff508d"/><stop offset="0.8159" stop-color="#ff1c5f"/><stop offset="0.9983" stop-color="#ff004d"/></linearGradient>
<linearGradient id="gi51" gradientUnits="userSpaceOnUse" x1="1383.0" x2="1677.0" y1="0" y2="0"><stop offset="0.0017" stop-color="#00ecff"/><stop offset="0.0153" stop-color="#03eaff"/><stop offset="0.0663" stop-color="#3de3ff"/><stop offset="0.2670" stop-color="#e4c3ff"/><stop offset="0.3078" stop-color="#ffb9fb"/><stop offset="0.4099" stop-color="#ff80c1"/><stop offset="0.5697" stop-color="#ff4b8d"/><stop offset="0.8384" stop-color="#ff1860"/><stop offset="0.9983" stop-color="#ff004f"/></linearGradient>
<linearGradient id="gi52" gradientUnits="userSpaceOnUse" x1="1384.0" x2="1675.0" y1="0" y2="0"><stop offset="0.0017" stop-color="#00e6ff"/><stop offset="0.0120" stop-color="#00e5ff"/><stop offset="0.0533" stop-color="#31dfff"/><stop offset="0.2251" stop-color="#c0c5ff"/><stop offset="0.3144" stop-color="#ffb3fb"/><stop offset="0.4210" stop-color="#ff7bc0"/><stop offset="0.5893" stop-color="#ff468c"/><stop offset="0.8711" stop-color="#ff135e"/><stop offset="0.9983" stop-color="#ff0052"/></linearGradient>
<linearGradient id="gi53" gradientUnits="userSpaceOnUse" x1="1384.0" x2="1673.0" y1="0" y2="0"><stop offset="0.0017" stop-color="#00e1ff"/><stop offset="0.0156" stop-color="#05e0ff"/><stop offset="0.0779" stop-color="#46d7ff"/><stop offset="0.3166" stop-color="#feb2ff"/><stop offset="0.4308" stop-color="#ff77c1"/><stop offset="0.6003" stop-color="#ff448d"/><stop offset="0.8875" stop-color="#ff115f"/><stop offset="0.9983" stop-color="#ff0054"/></linearGradient>
<linearGradient id="gi54" gradientUnits="userSpaceOnUse" x1="1384.0" x2="1671.0" y1="0" y2="0"><stop offset="0.0017" stop-color="#0df"/><stop offset="0.0157" stop-color="#03dbff"/><stop offset="0.0714" stop-color="#3ed3ff"/><stop offset="0.2875" stop-color="#e3b3ff"/><stop offset="0.3328" stop-color="#ffa8fb"/><stop offset="0.4443" stop-color="#ff72c1"/><stop offset="0.6185" stop-color="#ff408d"/><stop offset="0.9111" stop-color="#ff0d5f"/><stop offset="0.9983" stop-color="#ff0056"/></linearGradient>
<linearGradient id="gi55" gradientUnits="userSpaceOnUse" x1="1385.0" x2="1669.0" y1="0" y2="0"><stop offset="0.0018" stop-color="#00d8ff"/><stop offset="0.0123" stop-color="#00d6ff"/><stop offset="0.0581" stop-color="#32d0ff"/><stop offset="0.2482" stop-color="#c3b4ff"/><stop offset="0.3398" stop-color="#ffa3fb"/><stop offset="0.4560" stop-color="#ff6dc0"/><stop offset="0.6391" stop-color="#ff3b8c"/><stop offset="0.9454" stop-color="#ff085e"/><stop offset="0.9982" stop-color="#ff0059"/></linearGradient>
<linearGradient id="gi56" gradientUnits="userSpaceOnUse" x1="1385.0" x2="1667.0" y1="0" y2="0"><stop offset="0.0018" stop-color="#00d3ff"/><stop offset="0.0160" stop-color="#05d2ff"/><stop offset="0.0833" stop-color="#46c9ff"/><stop offset="0.3422" stop-color="#fea2ff"/><stop offset="0.4663" stop-color="#ff6ac1"/><stop offset="0.6507" stop-color="#ff398d"/><stop offset="0.9628" stop-color="#ff055f"/><stop offset="0.9982" stop-color="#ff005c"/></linearGradient>
<linearGradient id="gi57" gradientUnits="userSpaceOnUse" x1="1385.0" x2="1665.0" y1="0" y2="0"><stop offset="0.0018" stop-color="#00cfff"/><stop offset="0.0161" stop-color="#03cdff"/><stop offset="0.0768" stop-color="#3ec5ff"/><stop offset="0.3125" stop-color="#e4a3ff"/><stop offset="0.3589" stop-color="#ff99fc"/><stop offset="0.4804" stop-color="#ff65c1"/><stop offset="0.6696" stop-color="#ff358d"/><stop offset="0.9875" stop-color="#ff015f"/><stop offset="0.9982" stop-color="#ff005e"/></linearGradient>
<linearGradient id="gi58" gradientUnits="userSpaceOnUse" x1="1386.0" x2="1664.0" y1="0" y2="0"><stop offset="0.0018" stop-color="#00cbff"/><stop offset="0.0126" stop-color="#00c9ff"/><stop offset="0.0629" stop-color="#33c3ff"/><stop offset="0.2716" stop-color="#c6a5ff"/><stop offset="0.3651" stop-color="#ff94fc"/><stop offset="0.4874" stop-color="#ff62c1"/><stop offset="0.6817" stop-color="#ff328d"/><stop offset="0.9982" stop-color="#ff0060"/></linearGradient>
<linearGradient id="gi59" gradientUnits="userSpaceOnUse" x1="1386.0" x2="1662.0" y1="0" y2="0"><stop offset="0.0018" stop-color="#00c7ff"/><stop offset="0.0163" stop-color="#05c5ff"/><stop offset="0.0888" stop-color="#46bbff"/><stop offset="0.3641" stop-color="#fc93ff"/><stop offset="0.5163" stop-color="#ff59bc"/><stop offset="0.7228" stop-color="#ff2b89"/><stop offset="0.9982" stop-color="#ff0063"/></linearGradient>
<linearGradient id="gi60" gradientUnits="userSpaceOnUse" x1="1386.0" x2="1660.0" y1="0" y2="0"><stop offset="0.0018" stop-color="#00c3ff"/><stop offset="0.0164" stop-color="#03c1ff"/><stop offset="0.0821" stop-color="#3eb9ff"/><stop offset="0.3376" stop-color="#e594ff"/><stop offset="0.3850" stop-color="#ff8bfc"/><stop offset="0.5128" stop-color="#ff5bc2"/><stop offset="0.7172" stop-color="#ff2c8d"/><stop offset="0.9982" stop-color="#f06"/></linearGradient>
<linearGradient id="gi61" gradientUnits="userSpaceOnUse" x1="1386.0" x2="1658.0" y1="0" y2="0"><stop offset="0.0018" stop-color="#00bfff"/><stop offset="0.0165" stop-color="#00bdff"/><stop offset="0.0717" stop-color="#34b6ff"/><stop offset="0.2996" stop-color="#c997ff"/><stop offset="0.3952" stop-color="#ff87fc"/><stop offset="0.5276" stop-color="#ff57c1"/><stop offset="0.7371" stop-color="#ff288d"/><stop offset="0.9982" stop-color="#ff0068"/></linearGradient>
<linearGradient id="gi62" gradientUnits="userSpaceOnUse" x1="1387.0" x2="1656.0" y1="0" y2="0"><stop offset="0.0019" stop-color="#0bf"/><stop offset="0.0167" stop-color="#04b9ff"/><stop offset="0.0948" stop-color="#45afff"/><stop offset="0.3922" stop-color="#fc86ff"/><stop offset="0.5558" stop-color="#ff4fbc"/><stop offset="0.7788" stop-color="#ff2189"/><stop offset="0.9981" stop-color="#ff006b"/></linearGradient>
<linearGradient id="gi63" gradientUnits="userSpaceOnUse" x1="1387.0" x2="1654.0" y1="0" y2="0"><stop offset="0.0019" stop-color="#00b7ff"/><stop offset="0.0169" stop-color="#03b6ff"/><stop offset="0.0880" stop-color="#3fadff"/><stop offset="0.3652" stop-color="#e687ff"/><stop offset="0.4139" stop-color="#ff7efc"/><stop offset="0.5524" stop-color="#ff50c2"/><stop offset="0.7697" stop-color="#ff238e"/><stop offset="0.9981" stop-color="#ff006e"/></linearGradient>
<linearGradient id="gi64" gradientUnits="userSpaceOnUse" x1="1387.0" x2="1652.0" y1="0" y2="0"><stop offset="0.0019" stop-color="#00b4ff"/><stop offset="0.0170" stop-color="#01b2ff"/><stop offset="0.0774" stop-color="#35abff"/><stop offset="0.3264" stop-color="#cb8aff"/><stop offset="0.4245" stop-color="#ff7afc"/><stop offset="0.5679" stop-color="#ff4cc1"/><stop offset="0.7943" stop-color="#ff1f8d"/><stop offset="0.9981" stop-color="#ff0070"/></linearGradient>
<linearGradient id="gi65" gradientUnits="userSpaceOnUse" x1="1388.0" x2="1650.0" y1="0" y2="0"><stop offset="0.0019" stop-color="#00b0ff"/><stop offset="0.0172" stop-color="#04aeff"/><stop offset="0.1011" stop-color="#45a4ff"/><stop offset="0.4218" stop-color="#fc79ff"/><stop offset="0.5973" stop-color="#ff44bc"/><stop offset="0.8378" stop-color="#ff1889"/><stop offset="0.9981" stop-color="#ff0073"/></linearGradient>
<linearGradient id="gi66" gradientUnits="userSpaceOnUse" x1="1388.0" x2="1648.0" y1="0" y2="0"><stop offset="0.0019" stop-color="#00adff"/><stop offset="0.0173" stop-color="#03abff"/><stop offset="0.0942" stop-color="#3fa2ff"/><stop offset="0.3942" stop-color="#e87bff"/><stop offset="0.4481" stop-color="#ff70fa"/><stop offset="0.6019" stop-color="#ff43bf"/><stop offset="0.8442" stop-color="#ff178b"/><stop offset="0.9981" stop-color="#ff0076"/></linearGradient>
<linearGradient id="gi67" gradientUnits="userSpaceOnUse" x1="1388.0" x2="1646.0" y1="0" y2="0"><stop offset="0.0019" stop-color="#0af"/><stop offset="0.0213" stop-color="#06a8ff"/><stop offset="0.1143" stop-color="#499dff"/><stop offset="0.4477" stop-color="#fe70ff"/><stop offset="0.6105" stop-color="#ff42c1"/><stop offset="0.8547" stop-color="#ff168d"/><stop offset="0.9981" stop-color="#ff0079"/></linearGradient>
<linearGradient id="gi68" gradientUnits="userSpaceOnUse" x1="1389.0" x2="1644.0" y1="0" y2="0"><stop offset="0.0020" stop-color="#00a6ff"/><stop offset="0.0176" stop-color="#04a5ff"/><stop offset="0.1078" stop-color="#459aff"/><stop offset="0.4529" stop-color="#fc6dff"/><stop offset="0.6412" stop-color="#ff3bbc"/><stop offset="0.9000" stop-color="#ff0f89"/><stop offset="0.9980" stop-color="#ff007c"/></linearGradient>
<linearGradient id="gi69" gradientUnits="userSpaceOnUse" x1="1389.0" x2="1642.0" y1="0" y2="0"><stop offset="0.0020" stop-color="#00a3ff"/><stop offset="0.0178" stop-color="#03a2ff"/><stop offset="0.1008" stop-color="#3f98ff"/><stop offset="0.4249" stop-color="#e86fff"/><stop offset="0.4802" stop-color="#ff65fb"/><stop offset="0.6423" stop-color="#ff3ac0"/><stop offset="0.8992" stop-color="#ff0f8c"/><stop offset="0.9980" stop-color="#ff007f"/></linearGradient>
<linearGradient id="gi70" gradientUnits="userSpaceOnUse" x1="1389.0" x2="1640.0" y1="0" y2="0"><stop offset="0.0020" stop-color="#00a0ff"/><stop offset="0.0219" stop-color="#069eff"/><stop offset="0.1215" stop-color="#4993ff"/><stop offset="0.4801" stop-color="#fe65ff"/><stop offset="0.6554" stop-color="#ff38c1"/><stop offset="0.9143" stop-color="#ff0d8d"/><stop offset="0.9980" stop-color="#ff0082"/></linearGradient>
<linearGradient id="gi71" gradientUnits="userSpaceOnUse" x1="1390.0" x2="1638.0" y1="0" y2="0"><stop offset="0.0020" stop-color="#009dff"/><stop offset="0.0181" stop-color="#049bff"/><stop offset="0.1149" stop-color="#4591ff"/><stop offset="0.4859" stop-color="#fc62ff"/><stop offset="0.6875" stop-color="#ff31bc"/><stop offset="0.9657" stop-color="#ff0489"/><stop offset="0.9980" stop-color="#ff0085"/></linearGradient>
<linearGradient id="gi72" gradientUnits="userSpaceOnUse" x1="1390.0" x2="1636.0" y1="0" y2="0"><stop offset="0.0020" stop-color="#009aff"/><stop offset="0.0183" stop-color="#0399ff"/><stop offset="0.1077" stop-color="#3f8fff"/><stop offset="0.4573" stop-color="#e964ff"/><stop offset="0.5142" stop-color="#ff5afb"/><stop offset="0.6890" stop-color="#ff31c0"/><stop offset="0.9654" stop-color="#ff058c"/><stop offset="0.9980" stop-color="#f08"/></linearGradient>
<linearGradient id="gi73" gradientUnits="userSpaceOnUse" x1="1390.0" x2="1634.0" y1="0" y2="0"><stop offset="0.0020" stop-color="#0098ff"/><stop offset="0.0225" stop-color="#0695ff"/><stop offset="0.1291" stop-color="#498aff"/><stop offset="0.5143" stop-color="#fe5aff"/><stop offset="0.7029" stop-color="#ff2fc1"/><stop offset="0.9816" stop-color="#ff018d"/><stop offset="0.9980" stop-color="#ff008b"/></linearGradient>
<linearGradient id="gi74" gradientUnits="userSpaceOnUse" x1="1391.0" x2="1632.0" y1="0" y2="0"><stop offset="0.0021" stop-color="#0095ff"/><stop offset="0.0187" stop-color="#0493ff"/><stop offset="0.1224" stop-color="#4588ff"/><stop offset="0.5207" stop-color="#fc57ff"/><stop offset="0.7365" stop-color="#ff28bd"/><stop offset="0.9979" stop-color="#ff008e"/></linearGradient>
<linearGradient id="gi75" gradientUnits="userSpaceOnUse" x1="1391.0" x2="1630.0" y1="0" y2="0"><stop offset="0.0021" stop-color="#0092ff"/><stop offset="0.0188" stop-color="#0390ff"/><stop offset="0.1151" stop-color="#3f86ff"/><stop offset="0.4874" stop-color="#e85aff"/><stop offset="0.5502" stop-color="#ff50fb"/><stop offset="0.7385" stop-color="#ff28c0"/><stop offset="0.9979" stop-color="#ff0091"/></linearGradient>
<linearGradient id="gi76" gradientUnits="userSpaceOnUse" x1="1391.0" x2="1628.0" y1="0" y2="0"><stop offset="0.0021" stop-color="#008fff"/><stop offset="0.0232" stop-color="#068dff"/><stop offset="0.1371" stop-color="#4982ff"/><stop offset="0.5549" stop-color="#ff4fff"/><stop offset="0.7405" stop-color="#ff28c4"/><stop offset="0.9979" stop-color="#ff0094"/></linearGradient>
<linearGradient id="gi77" gradientUnits="userSpaceOnUse" x1="1392.0" x2="1626.0" y1="0" y2="0"><stop offset="0.0021" stop-color="#008cff"/><stop offset="0.0192" stop-color="#048bff"/><stop offset="0.1303" stop-color="#4580ff"/><stop offset="0.5577" stop-color="#fc4dff"/><stop offset="0.7885" stop-color="#ff20bd"/><stop offset="0.9979" stop-color="#ff0097"/></linearGradient>
<linearGradient id="gi78" gradientUnits="userSpaceOnUse" x1="1392.0" x2="1624.0" y1="0" y2="0"><stop offset="0.0022" stop-color="#008aff"/><stop offset="0.0194" stop-color="#0388ff"/><stop offset="0.1228" stop-color="#3f7eff"/><stop offset="0.5237" stop-color="#e950ff"/><stop offset="0.5884" stop-color="#ff47fb"/><stop offset="0.7909" stop-color="#ff1fc0"/><stop offset="0.9978" stop-color="#ff009b"/></linearGradient>
<linearGradient id="gi79" gradientUnits="userSpaceOnUse" x1="1392.0" x2="1622.0" y1="0" y2="0"><stop offset="0.0022" stop-color="#08f"/><stop offset="0.0239" stop-color="#0686ff"/><stop offset="0.1457" stop-color="#487aff"/><stop offset="0.5935" stop-color="#ff46ff"/><stop offset="0.7935" stop-color="#ff1fc4"/><stop offset="0.9978" stop-color="#ff009e"/></linearGradient>
<linearGradient id="gi80" gradientUnits="userSpaceOnUse" x1="1393.0" x2="1620.0" y1="0" y2="0"><stop offset="0.0022" stop-color="#0085ff"/><stop offset="0.0198" stop-color="#0483ff"/><stop offset="0.1388" stop-color="#4578ff"/><stop offset="0.5925" stop-color="#fa44ff"/><stop offset="0.6894" stop-color="#ff31e3"/><stop offset="0.9405" stop-color="#ff09ab"/><stop offset="0.9978" stop-color="#ff00a1"/></linearGradient>
<linearGradient id="gi81" gradientUnits="userSpaceOnUse" x1="1393.0" x2="1618.0" y1="0" y2="0"><stop offset="0.0022" stop-color="#0083ff"/><stop offset="0.0200" stop-color="#0381ff"/><stop offset="0.1311" stop-color="#4076ff"/><stop offset="0.5622" stop-color="#ea47ff"/><stop offset="0.6333" stop-color="#ff3dfa"/><stop offset="0.8511" stop-color="#ff16bf"/><stop offset="0.9978" stop-color="#ff00a5"/></linearGradient>
<linearGradient id="gi82" gradientUnits="userSpaceOnUse" x1="1393.0" x2="1616.0" y1="0" y2="0"><stop offset="0.0022" stop-color="#0080ff"/><stop offset="0.0247" stop-color="#067eff"/><stop offset="0.1547" stop-color="#4872ff"/><stop offset="0.6345" stop-color="#ff3cff"/><stop offset="0.8498" stop-color="#ff16c3"/><stop offset="0.9978" stop-color="#ff00a8"/></linearGradient>
<linearGradient id="gi83" gradientUnits="userSpaceOnUse" x1="1394.0" x2="1614.0" y1="0" y2="0"><stop offset="0.0023" stop-color="#007eff"/><stop offset="0.0205" stop-color="#047cff"/><stop offset="0.1477" stop-color="#4570ff"/><stop offset="0.6341" stop-color="#fb3bff"/><stop offset="0.7568" stop-color="#ff25de"/><stop offset="0.9977" stop-color="#ff00ac"/></linearGradient>
<linearGradient id="gi84" gradientUnits="userSpaceOnUse" x1="1394.0" x2="1612.0" y1="0" y2="0"><stop offset="0.0023" stop-color="#007cff"/><stop offset="0.0252" stop-color="#077aff"/><stop offset="0.1720" stop-color="#4d6cff"/><stop offset="0.6628" stop-color="#ff36ff"/><stop offset="0.8876" stop-color="#ff11c4"/><stop offset="0.9977" stop-color="#ff00b0"/></linearGradient>
<linearGradient id="gi85" gradientUnits="userSpaceOnUse" x1="1394.0" x2="1611.0" y1="0" y2="0"><stop offset="0.0023" stop-color="#007aff"/><stop offset="0.0253" stop-color="#0578ff"/><stop offset="0.1636" stop-color="#486bff"/><stop offset="0.6751" stop-color="#f3f"/><stop offset="0.9055" stop-color="#ff0dc3"/><stop offset="0.9977" stop-color="#ff00b3"/></linearGradient>
<linearGradient id="gi86" gradientUnits="userSpaceOnUse" x1="1395.0" x2="1609.0" y1="0" y2="0"><stop offset="0.0023" stop-color="#07f"/><stop offset="0.0210" stop-color="#0476ff"/><stop offset="0.1565" stop-color="#456aff"/><stop offset="0.6752" stop-color="#fb32ff"/><stop offset="0.8294" stop-color="#ff19d8"/><stop offset="0.9977" stop-color="#ff00b6"/></linearGradient>
<linearGradient id="gi87" gradientUnits="userSpaceOnUse" x1="1395.0" x2="1607.0" y1="0" y2="0"><stop offset="0.0024" stop-color="#0075ff"/><stop offset="0.0259" stop-color="#0773ff"/><stop offset="0.1816" stop-color="#4d65ff"/><stop offset="0.7052" stop-color="#ff2eff"/><stop offset="0.9458" stop-color="#ff07c3"/><stop offset="0.9976" stop-color="#ff00ba"/></linearGradient>
<linearGradient id="gi88" gradientUnits="userSpaceOnUse" x1="1395.0" x2="1605.0" y1="0" y2="0"><stop offset="0.0024" stop-color="#0073ff"/><stop offset="0.0262" stop-color="#0571ff"/><stop offset="0.1738" stop-color="#4864ff"/><stop offset="0.7214" stop-color="#ff2bff"/><stop offset="0.9643" stop-color="#ff04c4"/><stop offset="0.9976" stop-color="#ff00be"/></linearGradient>
<linearGradient id="gi89" gradientUnits="userSpaceOnUse" x1="1396.0" x2="1603.0" y1="0" y2="0"><stop offset="0.0024" stop-color="#0071ff"/><stop offset="0.0217" stop-color="#046fff"/><stop offset="0.1667" stop-color="#4563ff"/><stop offset="0.7222" stop-color="#fb2aff"/><stop offset="0.9348" stop-color="#ff09ce"/><stop offset="0.9976" stop-color="#ff00c2"/></linearGradient>
<linearGradient id="gi90" gradientUnits="userSpaceOnUse" x1="1396.0" x2="1601.0" y1="0" y2="0"><stop offset="0.0024" stop-color="#006fff"/><stop offset="0.0268" stop-color="#066dff"/><stop offset="0.1927" stop-color="#4c5fff"/><stop offset="0.7537" stop-color="#ff25ff"/><stop offset="0.9976" stop-color="#ff00c6"/></linearGradient>
<linearGradient id="gi91" gradientUnits="userSpaceOnUse" x1="1396.0" x2="1599.0" y1="0" y2="0"><stop offset="0.0025" stop-color="#006dff"/><stop offset="0.0271" stop-color="#056bff"/><stop offset="0.1847" stop-color="#485eff"/><stop offset="0.7709" stop-color="#f2f"/><stop offset="0.9975" stop-color="#ff00ca"/></linearGradient>
<linearGradient id="gi92" gradientUnits="userSpaceOnUse" x1="1397.0" x2="1597.0" y1="0" y2="0"><stop offset="0.0025" stop-color="#006bff"/><stop offset="0.0225" stop-color="#0469ff"/><stop offset="0.1775" stop-color="#455dff"/><stop offset="0.7725" stop-color="#fb21ff"/><stop offset="0.9975" stop-color="#ff00ce"/></linearGradient>
<linearGradient id="gi93" gradientUnits="userSpaceOnUse" x1="1397.0" x2="1595.0" y1="0" y2="0"><stop offset="0.0025" stop-color="#0069ff"/><stop offset="0.0278" stop-color="#0667ff"/><stop offset="0.2045" stop-color="#4c59ff"/><stop offset="0.8056" stop-color="#ff1dff"/><stop offset="0.9975" stop-color="#ff00d2"/></linearGradient>
<linearGradient id="gi94" gradientUnits="userSpaceOnUse" x1="1397.0" x2="1593.0" y1="0" y2="0"><stop offset="0.0026" stop-color="#0067ff"/><stop offset="0.0281" stop-color="#0565ff"/><stop offset="0.1964" stop-color="#4858ff"/><stop offset="0.8240" stop-color="#ff1aff"/><stop offset="0.9974" stop-color="#ff00d7"/></linearGradient>
<linearGradient id="gi95" gradientUnits="userSpaceOnUse" x1="1398.0" x2="1591.0" y1="0" y2="0"><stop offset="0.0026" stop-color="#0065ff"/><stop offset="0.0233" stop-color="#0464ff"/><stop offset="0.1891" stop-color="#4557ff"/><stop offset="0.8264" stop-color="#fb19ff"/><stop offset="0.9974" stop-color="#ff00db"/></linearGradient>
<linearGradient id="gi96" gradientUnits="userSpaceOnUse" x1="1398.0" x2="1589.0" y1="0" y2="0"><stop offset="0.0026" stop-color="#0064ff"/><stop offset="0.0288" stop-color="#0662ff"/><stop offset="0.2173" stop-color="#4c53ff"/><stop offset="0.8613" stop-color="#ff14ff"/><stop offset="0.9974" stop-color="#ff00e0"/></linearGradient>
<linearGradient id="gi97" gradientUnits="userSpaceOnUse" x1="1398.0" x2="1587.0" y1="0" y2="0"><stop offset="0.0026" stop-color="#0062ff"/><stop offset="0.0291" stop-color="#0560ff"/><stop offset="0.2090" stop-color="#4752ff"/><stop offset="0.8810" stop-color="#f1f"/><stop offset="0.9974" stop-color="#ff00e4"/></linearGradient>
<linearGradient id="gi98" gradientUnits="userSpaceOnUse" x1="1399.0" x2="1585.0" y1="0" y2="0"><stop offset="0.0027" stop-color="#0060ff"/><stop offset="0.0296" stop-color="#075eff"/><stop offset="0.2339" stop-color="#4e4fff"/><stop offset="0.8952" stop-color="#fe0fff"/><stop offset="0.9973" stop-color="#ff00e9"/></linearGradient>
<linearGradient id="gi99" gradientUnits="userSpaceOnUse" x1="1399.0" x2="1583.0" y1="0" y2="0"><stop offset="0.0027" stop-color="#005eff"/><stop offset="0.0299" stop-color="#065cff"/><stop offset="0.2310" stop-color="#4c4eff"/><stop offset="0.8995" stop-color="#fa0eff"/><stop offset="0.9810" stop-color="#ff01f1"/><stop offset="0.9973" stop-color="#f0e"/></linearGradient>
<linearGradient id="gi100" gradientUnits="userSpaceOnUse" x1="1399.0" x2="1581.0" y1="0" y2="0"><stop offset="0.0027" stop-color="#005dff"/><stop offset="0.0302" stop-color="#055bff"/><stop offset="0.2225" stop-color="#474dff"/><stop offset="0.8984" stop-color="#f40eff"/><stop offset="0.9643" stop-color="#ff04fa"/><stop offset="0.9973" stop-color="#ff00f2"/></linearGradient>
<linearGradient id="gi101" gradientUnits="userSpaceOnUse" x1="1399.0" x2="1579.0" y1="0" y2="0"><stop offset="0.0028" stop-color="#005bff"/><stop offset="0.0306" stop-color="#0459ff"/><stop offset="0.2194" stop-color="#454cff"/><stop offset="0.9028" stop-color="#f10dff"/><stop offset="0.9861" stop-color="#ff00fa"/><stop offset="0.9972" stop-color="#ff00f7"/></linearGradient>
<linearGradient id="gi102" gradientUnits="userSpaceOnUse" x1="1400.0" x2="1577.0" y1="0" y2="0"><stop offset="0.0028" stop-color="#0059ff"/><stop offset="0.0311" stop-color="#0657ff"/><stop offset="0.2458" stop-color="#4b48ff"/><stop offset="0.9124" stop-color="#ee0cff"/><stop offset="0.9972" stop-color="#ff00fc"/></linearGradient>
<linearGradient id="gi103" gradientUnits="userSpaceOnUse" x1="1400.0" x2="1575.0" y1="0" y2="0"><stop offset="0.0029" stop-color="#0058ff"/><stop offset="0.0371" stop-color="#0855ff"/><stop offset="0.2714" stop-color="#5045ff"/><stop offset="0.9229" stop-color="#ec0aff"/><stop offset="0.9971" stop-color="#fc00ff"/></linearGradient>
<linearGradient id="gi104" gradientUnits="userSpaceOnUse" x1="1400.0" x2="1573.0" y1="0" y2="0"><stop offset="0.0029" stop-color="#0056ff"/><stop offset="0.0318" stop-color="#0454ff"/><stop offset="0.2341" stop-color="#4547ff"/><stop offset="0.9162" stop-color="#e50bff"/><stop offset="0.9971" stop-color="#f700ff"/></linearGradient>
<linearGradient id="gi105" gradientUnits="userSpaceOnUse" x1="1401.0" x2="1571.0" y1="0" y2="0"><stop offset="0.0029" stop-color="#0054ff"/><stop offset="0.0324" stop-color="#0652ff"/><stop offset="0.2618" stop-color="#4b43ff"/><stop offset="0.9324" stop-color="#e408ff"/><stop offset="0.9971" stop-color="#f200ff"/></linearGradient>
<linearGradient id="gi106" gradientUnits="userSpaceOnUse" x1="1401.0" x2="1569.0" y1="0" y2="0"><stop offset="0.0030" stop-color="#0053ff"/><stop offset="0.0387" stop-color="#0851ff"/><stop offset="0.2887" stop-color="#5040ff"/><stop offset="0.9375" stop-color="#e107ff"/><stop offset="0.9970" stop-color="#ed00ff"/></linearGradient>
<linearGradient id="gi107" gradientUnits="userSpaceOnUse" x1="1401.0" x2="1567.0" y1="0" y2="0"><stop offset="0.0030" stop-color="#0052ff"/><stop offset="0.0392" stop-color="#074fff"/><stop offset="0.2861" stop-color="#4e3fff"/><stop offset="0.9428" stop-color="#dd07ff"/><stop offset="0.9970" stop-color="#e900ff"/></linearGradient>
<linearGradient id="gi108" gradientUnits="userSpaceOnUse" x1="1402.0" x2="1565.0" y1="0" y2="0"><stop offset="0.0031" stop-color="#0050ff"/><stop offset="0.0337" stop-color="#064eff"/><stop offset="0.2791" stop-color="#4b3eff"/><stop offset="0.9417" stop-color="#d907ff"/><stop offset="0.9969" stop-color="#e400ff"/></linearGradient>
<linearGradient id="gi109" gradientUnits="userSpaceOnUse" x1="1402.0" x2="1563.0" y1="0" y2="0"><stop offset="0.0031" stop-color="#004eff"/><stop offset="0.0404" stop-color="#084cff"/><stop offset="0.3075" stop-color="#503bff"/><stop offset="0.9534" stop-color="#d705ff"/><stop offset="0.9969" stop-color="#df00ff"/></linearGradient>
<linearGradient id="gi110" gradientUnits="userSpaceOnUse" x1="1402.0" x2="1561.0" y1="0" y2="0"><stop offset="0.0031" stop-color="#004dff"/><stop offset="0.0409" stop-color="#074bff"/><stop offset="0.3050" stop-color="#4d3aff"/><stop offset="0.9528" stop-color="#d205ff"/><stop offset="0.9969" stop-color="#db00ff"/></linearGradient>
<linearGradient id="gi111" gradientUnits="userSpaceOnUse" x1="1403.0" x2="1560.0" y1="0" y2="0"><stop offset="0.0032" stop-color="#004bff"/><stop offset="0.0350" stop-color="#0649ff"/><stop offset="0.2962" stop-color="#4b39ff"/><stop offset="0.9522" stop-color="#cf04ff"/><stop offset="0.9968" stop-color="#d700ff"/></linearGradient>
<linearGradient id="gi112" gradientUnits="userSpaceOnUse" x1="1403.0" x2="1558.0" y1="0" y2="0"><stop offset="0.0032" stop-color="#004aff"/><stop offset="0.0419" stop-color="#0848ff"/><stop offset="0.3258" stop-color="#4f37ff"/><stop offset="0.9968" stop-color="#d300ff"/></linearGradient>
<linearGradient id="gi113" gradientUnits="userSpaceOnUse" x1="1403.0" x2="1556.0" y1="0" y2="0"><stop offset="0.0033" stop-color="#0049ff"/><stop offset="0.0425" stop-color="#0746ff"/><stop offset="0.3235" stop-color="#4d36ff"/><stop offset="0.9967" stop-color="#ce00ff"/></linearGradient>
<linearGradient id="gi114" gradientUnits="userSpaceOnUse" x1="1404.0" x2="1554.0" y1="0" y2="0"><stop offset="0.0033" stop-color="#0047ff"/><stop offset="0.0367" stop-color="#0645ff"/><stop offset="0.3167" stop-color="#4b35ff"/><stop offset="0.9967" stop-color="#ca00ff"/></linearGradient>
<linearGradient id="gi115" gradientUnits="userSpaceOnUse" x1="1404.0" x2="1552.0" y1="0" y2="0"><stop offset="0.0034" stop-color="#0046ff"/><stop offset="0.0439" stop-color="#0744ff"/><stop offset="0.3480" stop-color="#4f32ff"/><stop offset="0.9966" stop-color="#c600ff"/></linearGradient>
<linearGradient id="gi116" gradientUnits="userSpaceOnUse" x1="1404.0" x2="1550.0" y1="0" y2="0"><stop offset="0.0034" stop-color="#0045ff"/><stop offset="0.0445" stop-color="#0742ff"/><stop offset="0.3459" stop-color="#4d31ff"/><stop offset="0.9966" stop-color="#c200ff"/></linearGradient>
<linearGradient id="gi117" gradientUnits="userSpaceOnUse" x1="1405.0" x2="1548.0" y1="0" y2="0"><stop offset="0.0035" stop-color="#0043ff"/><stop offset="0.0385" stop-color="#0641ff"/><stop offset="0.3392" stop-color="#4a30ff"/><stop offset="0.9965" stop-color="#be00ff"/></linearGradient>
<linearGradient id="gi118" gradientUnits="userSpaceOnUse" x1="1405.0" x2="1546.0" y1="0" y2="0"><stop offset="0.0035" stop-color="#0042ff"/><stop offset="0.0461" stop-color="#0740ff"/><stop offset="0.3723" stop-color="#4f2eff"/><stop offset="0.9965" stop-color="#ba00ff"/></linearGradient>
<linearGradient id="gi119" gradientUnits="userSpaceOnUse" x1="1405.0" x2="1544.0" y1="0" y2="0"><stop offset="0.0036" stop-color="#0041ff"/><stop offset="0.0540" stop-color="#093eff"/><stop offset="0.4065" stop-color="#532bff"/><stop offset="0.9964" stop-color="#b600ff"/></linearGradient>
<linearGradient id="gi120" gradientUnits="userSpaceOnUse" x1="1406.0" x2="1542.0" y1="0" y2="0"><stop offset="0.0037" stop-color="#003fff"/><stop offset="0.0404" stop-color="#063dff"/><stop offset="0.3640" stop-color="#4a2cff"/><stop offset="0.9963" stop-color="#b200ff"/></linearGradient>
<linearGradient id="gi121" gradientUnits="userSpaceOnUse" x1="1406.0" x2="1540.0" y1="0" y2="0"><stop offset="0.0037" stop-color="#003eff"/><stop offset="0.0485" stop-color="#073cff"/><stop offset="0.3993" stop-color="#4f29ff"/><stop offset="0.9963" stop-color="#ae00ff"/></linearGradient>
<linearGradient id="gi122" gradientUnits="userSpaceOnUse" x1="1406.0" x2="1538.0" y1="0" y2="0"><stop offset="0.0038" stop-color="#003dff"/><stop offset="0.0568" stop-color="#093aff"/><stop offset="0.4432" stop-color="#5426ff"/><stop offset="0.9962" stop-color="#a0f"/></linearGradient>
<linearGradient id="gi123" gradientUnits="userSpaceOnUse" x1="1407.0" x2="1536.0" y1="0" y2="0"><stop offset="0.0039" stop-color="#003bff"/><stop offset="0.0504" stop-color="#0839ff"/><stop offset="0.4302" stop-color="#5026ff"/><stop offset="0.9961" stop-color="#a600ff"/></linearGradient>
<linearGradient id="gi124" gradientUnits="userSpaceOnUse" x1="1407.0" x2="1534.0" y1="0" y2="0"><stop offset="0.0039" stop-color="#003aff"/><stop offset="0.0512" stop-color="#0738ff"/><stop offset="0.4291" stop-color="#4e25ff"/><stop offset="0.9961" stop-color="#a300ff"/></linearGradient>
<linearGradient id="gi125" gradientUnits="userSpaceOnUse" x1="1407.0" x2="1532.0" y1="0" y2="0"><stop offset="0.0040" stop-color="#0039ff"/><stop offset="0.0600" stop-color="#0936ff"/><stop offset="0.4760" stop-color="#5422ff"/><stop offset="0.9960" stop-color="#9f00ff"/></linearGradient>
<linearGradient id="gi126" gradientUnits="userSpaceOnUse" x1="1408.0" x2="1530.0" y1="0" y2="0"><stop offset="0.0041" stop-color="#0037ff"/><stop offset="0.0533" stop-color="#0835ff"/><stop offset="0.4631" stop-color="#5022ff"/><stop offset="0.9959" stop-color="#9b00ff"/></linearGradient>
<linearGradient id="gi127" gradientUnits="userSpaceOnUse" x1="1408.0" x2="1528.0" y1="0" y2="0"><stop offset="0.0042" stop-color="#0036ff"/><stop offset="0.0625" stop-color="#0934ff"/><stop offset="0.5125" stop-color="#551fff"/><stop offset="0.9958" stop-color="#9800ff"/></linearGradient>
<linearGradient id="gi128" gradientUnits="userSpaceOnUse" x1="1408.0" x2="1526.0" y1="0" y2="0"><stop offset="0.0042" stop-color="#0035ff"/><stop offset="0.0720" stop-color="#0b32ff"/><stop offset="0.5551" stop-color="#591cff"/><stop offset="0.9958" stop-color="#9400ff"/></linearGradient>
<linearGradient id="gi129" gradientUnits="userSpaceOnUse" x1="1409.0" x2="1524.0" y1="0" y2="0"><stop offset="0.0043" stop-color="#0034ff"/><stop offset="0.0565" stop-color="#0832ff"/><stop offset="0.5000" stop-color="#501eff"/><stop offset="0.9957" stop-color="#9100ff"/></linearGradient>
<linearGradient id="gi130" gradientUnits="userSpaceOnUse" x1="1409.0" x2="1522.0" y1="0" y2="0"><stop offset="0.0044" stop-color="#03f"/><stop offset="0.0664" stop-color="#0930ff"/><stop offset="0.5531" stop-color="#551bff"/><stop offset="0.9956" stop-color="#8d00ff"/></linearGradient>
<linearGradient id="gi131" gradientUnits="userSpaceOnUse" x1="1409.0" x2="1520.0" y1="0" y2="0"><stop offset="0.0045" stop-color="#0032ff"/><stop offset="0.0766" stop-color="#0a2fff"/><stop offset="0.5991" stop-color="#5918ff"/><stop offset="0.9955" stop-color="#8a00ff"/></linearGradient>
<linearGradient id="gi132" gradientUnits="userSpaceOnUse" x1="1410.0" x2="1518.0" y1="0" y2="0"><stop offset="0.0046" stop-color="#0030ff"/><stop offset="0.0694" stop-color="#0a2eff"/><stop offset="0.5972" stop-color="#5717ff"/><stop offset="0.9954" stop-color="#8600ff"/></linearGradient>
<linearGradient id="gi133" gradientUnits="userSpaceOnUse" x1="1410.0" x2="1516.0" y1="0" y2="0"><stop offset="0.0047" stop-color="#002fff"/><stop offset="0.0708" stop-color="#092dff"/><stop offset="0.5991" stop-color="#5517ff"/><stop offset="0.9953" stop-color="#8300ff"/></linearGradient>
<linearGradient id="gi134" gradientUnits="userSpaceOnUse" x1="1410.0" x2="1514.0" y1="0" y2="0"><stop offset="0.0048" stop-color="#002eff"/><stop offset="0.0817" stop-color="#0a2bff"/><stop offset="0.6490" stop-color="#5814ff"/><stop offset="0.9952" stop-color="#8000ff"/></linearGradient>
<linearGradient id="gi135" gradientUnits="userSpaceOnUse" x1="1411.0" x2="1512.0" y1="0" y2="0"><stop offset="0.0050" stop-color="#002dff"/><stop offset="0.0842" stop-color="#0b2aff"/><stop offset="0.6980" stop-color="#5c11ff"/><stop offset="0.9950" stop-color="#7d00ff"/></linearGradient>
<linearGradient id="gi136" gradientUnits="userSpaceOnUse" x1="1411.0" x2="1510.0" y1="0" y2="0"><stop offset="0.0051" stop-color="#002cff"/><stop offset="0.0758" stop-color="#0929ff"/><stop offset="0.6515" stop-color="#5413ff"/><stop offset="0.9949" stop-color="#7900ff"/></linearGradient>
<linearGradient id="gi137" gradientUnits="userSpaceOnUse" x1="1411.0" x2="1509.0" y1="0" y2="0"><stop offset="0.0051" stop-color="#002bff"/><stop offset="0.0969" stop-color="#0c28ff"/><stop offset="0.7500" stop-color="#5d0dff"/><stop offset="0.9949" stop-color="#70f"/></linearGradient>
<linearGradient id="gi138" gradientUnits="userSpaceOnUse" x1="1411.0" x2="1507.0" y1="0" y2="0"><stop offset="0.0052" stop-color="#002aff"/><stop offset="0.0781" stop-color="#0828ff"/><stop offset="0.6510" stop-color="#5011ff"/><stop offset="0.9948" stop-color="#7400ff"/></linearGradient>
<linearGradient id="gi139" gradientUnits="userSpaceOnUse" x1="1412.0" x2="1505.0" y1="0" y2="0"><stop offset="0.0054" stop-color="#0029ff"/><stop offset="0.0914" stop-color="#0b26ff"/><stop offset="0.7581" stop-color="#590cff"/><stop offset="0.9946" stop-color="#7100ff"/></linearGradient>
<linearGradient id="gi140" gradientUnits="userSpaceOnUse" x1="1412.0" x2="1503.0" y1="0" y2="0"><stop offset="0.0055" stop-color="#0028ff"/><stop offset="0.1044" stop-color="#0c25ff"/><stop offset="0.8187" stop-color="#5d09ff"/><stop offset="0.9945" stop-color="#6e00ff"/></linearGradient>
<linearGradient id="gi141" gradientUnits="userSpaceOnUse" x1="1412.0" x2="1501.0" y1="0" y2="0"><stop offset="0.0056" stop-color="#0027ff"/><stop offset="0.0843" stop-color="#0724ff"/><stop offset="0.7135" stop-color="#500dff"/><stop offset="0.9944" stop-color="#6b00ff"/></linearGradient>
<linearGradient id="gi142" gradientUnits="userSpaceOnUse" x1="1413.0" x2="1499.0" y1="0" y2="0"><stop offset="0.0058" stop-color="#0026ff"/><stop offset="0.0988" stop-color="#0a23ff"/><stop offset="0.8314" stop-color="#5908ff"/><stop offset="0.9942" stop-color="#6800ff"/></linearGradient>
<linearGradient id="gi143" gradientUnits="userSpaceOnUse" x1="1413.0" x2="1497.0" y1="0" y2="0"><stop offset="0.0060" stop-color="#0025ff"/><stop offset="0.1250" stop-color="#0d21ff"/><stop offset="0.9464" stop-color="#6001ff"/><stop offset="0.9940" stop-color="#6500ff"/></linearGradient>
<linearGradient id="gi144" gradientUnits="userSpaceOnUse" x1="1413.0" x2="1495.0" y1="0" y2="0"><stop offset="0.0061" stop-color="#0024ff"/><stop offset="0.0915" stop-color="#0721ff"/><stop offset="0.7866" stop-color="#5009ff"/><stop offset="0.9939" stop-color="#6200ff"/></linearGradient>
<linearGradient id="gi145" gradientUnits="userSpaceOnUse" x1="1414.0" x2="1493.0" y1="0" y2="0"><stop offset="0.0063" stop-color="#02f"/><stop offset="0.1076" stop-color="#0a20ff"/><stop offset="0.9177" stop-color="#5803ff"/><stop offset="0.9937" stop-color="#5f00ff"/></linearGradient>
<linearGradient id="gi146" gradientUnits="userSpaceOnUse" x1="1414.0" x2="1491.0" y1="0" y2="0"><stop offset="0.0065" stop-color="#0021ff"/><stop offset="0.1364" stop-color="#0d1eff"/><stop offset="0.9935" stop-color="#5c00ff"/></linearGradient>
<linearGradient id="gi147" gradientUnits="userSpaceOnUse" x1="1414.0" x2="1489.0" y1="0" y2="0"><stop offset="0.0067" stop-color="#0021ff"/><stop offset="0.1133" stop-color="#091eff"/><stop offset="0.9400" stop-color="#5501ff"/><stop offset="0.9933" stop-color="#5900ff"/></linearGradient>
<linearGradient id="gi148" gradientUnits="userSpaceOnUse" x1="1415.0" x2="1487.0" y1="0" y2="0"><stop offset="0.0069" stop-color="#001fff"/><stop offset="0.1319" stop-color="#0c1cff"/><stop offset="0.9931" stop-color="#5600ff"/></linearGradient>
<linearGradient id="gi149" gradientUnits="userSpaceOnUse" x1="1415.0" x2="1485.0" y1="0" y2="0"><stop offset="0.0071" stop-color="#001eff"/><stop offset="0.1643" stop-color="#0e1aff"/><stop offset="0.9929" stop-color="#5300ff"/></linearGradient>
<linearGradient id="gi150" gradientUnits="userSpaceOnUse" x1="1415.0" x2="1483.0" y1="0" y2="0"><stop offset="0.0074" stop-color="#001eff"/><stop offset="0.1250" stop-color="#091bff"/><stop offset="0.9926" stop-color="#5000ff"/></linearGradient>
<linearGradient id="gi151" gradientUnits="userSpaceOnUse" x1="1416.0" x2="1481.0" y1="0" y2="0"><stop offset="0.0077" stop-color="#001cff"/><stop offset="0.1615" stop-color="#0d19ff"/><stop offset="0.9923" stop-color="#4d00ff"/></linearGradient>
<linearGradient id="gi152" gradientUnits="userSpaceOnUse" x1="1416.0" x2="1479.0" y1="0" y2="0"><stop offset="0.0079" stop-color="#001bff"/><stop offset="0.2143" stop-color="#1117ff"/><stop offset="0.9921" stop-color="#4b00ff"/></linearGradient>
<linearGradient id="gi153" gradientUnits="userSpaceOnUse" x1="1416.0" x2="1477.0" y1="0" y2="0"><stop offset="0.0082" stop-color="#001bff"/><stop offset="0.1557" stop-color="#0b17ff"/><stop offset="0.9918" stop-color="#4800ff"/></linearGradient>
<linearGradient id="gi154" gradientUnits="userSpaceOnUse" x1="1417.0" x2="1475.0" y1="0" y2="0"><stop offset="0.0086" stop-color="#0019ff"/><stop offset="0.1983" stop-color="#0f15ff"/><stop offset="0.9914" stop-color="#4500ff"/></linearGradient>
<linearGradient id="gi155" gradientUnits="userSpaceOnUse" x1="1417.0" x2="1473.0" y1="0" y2="0"><stop offset="0.0089" stop-color="#0018ff"/><stop offset="0.9911" stop-color="#4200ff"/></linearGradient>
<linearGradient id="gi156" gradientUnits="userSpaceOnUse" x1="1417.0" x2="1471.0" y1="0" y2="0"><stop offset="0.0093" stop-color="#0018ff"/><stop offset="0.1944" stop-color="#0c14ff"/><stop offset="0.9907" stop-color="#3f00ff"/></linearGradient>
<linearGradient id="gi157" gradientUnits="userSpaceOnUse" x1="1418.0" x2="1469.0" y1="0" y2="0"><stop offset="0.0098" stop-color="#0016ff"/><stop offset="0.2451" stop-color="#1012ff"/><stop offset="0.9902" stop-color="#3d00ff"/></linearGradient>
<linearGradient id="gi158" gradientUnits="userSpaceOnUse" x1="1418.0" x2="1467.0" y1="0" y2="0"><stop offset="0.0102" stop-color="#0016ff"/><stop offset="0.9898" stop-color="#3a00ff"/></linearGradient>
<linearGradient id="gi159" gradientUnits="userSpaceOnUse" x1="1418.0" x2="1465.0" y1="0" y2="0"><stop offset="0.0106" stop-color="#0015ff"/><stop offset="0.2660" stop-color="#0f10ff"/><stop offset="0.9894" stop-color="#3700ff"/></linearGradient>
<linearGradient id="gi160" gradientUnits="userSpaceOnUse" x1="1419.0" x2="1463.0" y1="0" y2="0"><stop offset="0.0114" stop-color="#0013ff"/><stop offset="0.9886" stop-color="#3400ff"/></linearGradient>
<linearGradient id="gi161" gradientUnits="userSpaceOnUse" x1="1419.0" x2="1461.0" y1="0" y2="0"><stop offset="0.0119" stop-color="#0013ff"/><stop offset="0.9881" stop-color="#3200ff"/></linearGradient>
<linearGradient id="gi162" gradientUnits="userSpaceOnUse" x1="1419.0" x2="1459.0" y1="0" y2="0"><stop offset="0.0125" stop-color="#0012ff"/><stop offset="0.3875" stop-color="#130cff"/><stop offset="0.9875" stop-color="#2f00ff"/></linearGradient>
<linearGradient id="gi163" gradientUnits="userSpaceOnUse" x1="1420.0" x2="1457.0" y1="0" y2="0"><stop offset="0.0135" stop-color="#01f"/><stop offset="0.9865" stop-color="#2c00ff"/></linearGradient>
<linearGradient id="gi164" gradientUnits="userSpaceOnUse" x1="1420.0" x2="1456.0" y1="0" y2="0"><stop offset="0.0139" stop-color="#0010ff"/><stop offset="0.9861" stop-color="#2b00ff"/></linearGradient>
<linearGradient id="gi165" gradientUnits="userSpaceOnUse" x1="1420.0" x2="1454.0" y1="0" y2="0"><stop offset="0.0147" stop-color="#000fff"/><stop offset="0.9853" stop-color="#2800ff"/></linearGradient>
<linearGradient id="gi166" gradientUnits="userSpaceOnUse" x1="1421.0" x2="1452.0" y1="0" y2="0"><stop offset="0.0161" stop-color="#000eff"/><stop offset="0.9839" stop-color="#2500ff"/></linearGradient>
<linearGradient id="gi167" gradientUnits="userSpaceOnUse" x1="1421.0" x2="1450.0" y1="0" y2="0"><stop offset="0.0172" stop-color="#000dff"/><stop offset="0.9828" stop-color="#20f"/></linearGradient>
<linearGradient id="gi168" gradientUnits="userSpaceOnUse" x1="1421.0" x2="1448.0" y1="0" y2="0"><stop offset="0.0185" stop-color="#000cff"/><stop offset="0.9815" stop-color="#2000ff"/></linearGradient>
<linearGradient id="gi169" gradientUnits="userSpaceOnUse" x1="1422.0" x2="1446.0" y1="0" y2="0"><stop offset="0.0208" stop-color="#000bff"/><stop offset="0.9792" stop-color="#1d00ff"/></linearGradient>
<linearGradient id="gi170" gradientUnits="userSpaceOnUse" x1="1422.0" x2="1444.0" y1="0" y2="0"><stop offset="0.0227" stop-color="#000aff"/><stop offset="0.9773" stop-color="#1a00ff"/></linearGradient>
<linearGradient id="gi171" gradientUnits="userSpaceOnUse" x1="1422.0" x2="1442.0" y1="0" y2="0"><stop offset="0.0250" stop-color="#0009ff"/><stop offset="0.9750" stop-color="#1700ff"/></linearGradient>
<linearGradient id="gi172" gradientUnits="userSpaceOnUse" x1="1423.0" x2="1440.0" y1="0" y2="0"><stop offset="0.0294" stop-color="#0007ff"/><stop offset="0.9706" stop-color="#1400ff"/></linearGradient>
<linearGradient id="gi173" gradientUnits="userSpaceOnUse" x1="1423.0" x2="1438.0" y1="0" y2="0"><stop offset="0.0333" stop-color="#0006ff"/><stop offset="0.9667" stop-color="#10f"/></linearGradient>
<linearGradient id="gi174" gradientUnits="userSpaceOnUse" x1="1423.0" x2="1436.0" y1="0" y2="0"><stop offset="0.0385" stop-color="#0006ff"/><stop offset="0.9615" stop-color="#0e00ff"/></linearGradient>
<linearGradient id="gi175" gradientUnits="userSpaceOnUse" x1="1424.0" x2="1434.0" y1="0" y2="0"><stop offset="0.0500" stop-color="#0004ff"/><stop offset="0.9500" stop-color="#0b00ff"/></linearGradient>
<linearGradient id="gi176" gradientUnits="userSpaceOnUse" x1="1424.0" x2="1432.0" y1="0" y2="0"><stop offset="0.0625" stop-color="#0003ff"/><stop offset="0.9375" stop-color="#0700ff"/></linearGradient>
<clipPath id="iclip"><rect x="1678.2" y="514.3" width="223.6" height="150.7"/></clipPath>
<clipPath id="itri"><path d="M2776.97,1118.00 L1256.49,304.22 L585.69,1931.78 Z"/></clipPath>
<linearGradient id="io0" gradientUnits="userSpaceOnUse" x1="1678.2" x2="1901.8" y1="0" y2="0"><stop offset="0.0022" stop-color="#6b9900"/><stop offset="0.7178" stop-color="#999600"/><stop offset="0.9996" stop-color="#998300"/></linearGradient>
<linearGradient id="io1" gradientUnits="userSpaceOnUse" x1="1678.2" x2="1901.8" y1="0" y2="0"><stop offset="0.0022" stop-color="#6b9900"/><stop offset="0.7133" stop-color="#999600"/><stop offset="0.9996" stop-color="#998200"/></linearGradient>
<linearGradient id="io2" gradientUnits="userSpaceOnUse" x1="1678.2" x2="1901.8" y1="0" y2="0"><stop offset="0.0022" stop-color="#6b9900"/><stop offset="0.7089" stop-color="#999600"/><stop offset="0.9996" stop-color="#998200"/></linearGradient>
<linearGradient id="io3" gradientUnits="userSpaceOnUse" x1="1678.2" x2="1901.8" y1="0" y2="0"><stop offset="0.0022" stop-color="#6b9900"/><stop offset="0.7044" stop-color="#999600"/><stop offset="0.9996" stop-color="#998200"/></linearGradient>
<linearGradient id="io4" gradientUnits="userSpaceOnUse" x1="1678.2" x2="1901.8" y1="0" y2="0"><stop offset="0.0022" stop-color="#6c9900"/><stop offset="0.6999" stop-color="#999600"/><stop offset="0.9996" stop-color="#998200"/></linearGradient>
<linearGradient id="io5" gradientUnits="userSpaceOnUse" x1="1678.2" x2="1901.8" y1="0" y2="0"><stop offset="0.0022" stop-color="#6c9900"/><stop offset="0.6954" stop-color="#999600"/><stop offset="0.9996" stop-color="#998100"/></linearGradient>
<linearGradient id="io6" gradientUnits="userSpaceOnUse" x1="1678.2" x2="1901.8" y1="0" y2="0"><stop offset="0.0022" stop-color="#6c9900"/><stop offset="0.6910" stop-color="#999600"/><stop offset="0.9996" stop-color="#998100"/></linearGradient>
<linearGradient id="io7" gradientUnits="userSpaceOnUse" x1="1678.2" x2="1901.8" y1="0" y2="0"><stop offset="0.0022" stop-color="#6d9900"/><stop offset="0.6865" stop-color="#999600"/><stop offset="0.9996" stop-color="#998100"/></linearGradient>
<linearGradient id="io8" gradientUnits="userSpaceOnUse" x1="1678.2" x2="1901.8" y1="0" y2="0"><stop offset="0.0022" stop-color="#6d9900"/><stop offset="0.6820" stop-color="#999600"/><stop offset="0.9996" stop-color="#998000"/></linearGradient>
<linearGradient id="io9" gradientUnits="userSpaceOnUse" x1="1678.2" x2="1901.8" y1="0" y2="0"><stop offset="0.0022" stop-color="#6d9900"/><stop offset="0.6775" stop-color="#999600"/><stop offset="0.9996" stop-color="#998000"/></linearGradient>
<linearGradient id="io10" gradientUnits="userSpaceOnUse" x1="1678.2" x2="1901.8" y1="0" y2="0"><stop offset="0.0022" stop-color="#6d9900"/><stop offset="0.6731" stop-color="#999600"/><stop offset="0.9996" stop-color="#998000"/></linearGradient>
<linearGradient id="io11" gradientUnits="userSpaceOnUse" x1="1678.2" x2="1901.8" y1="0" y2="0"><stop offset="0.0022" stop-color="#6e9900"/><stop offset="0.6686" stop-color="#999600"/><stop offset="0.9996" stop-color="#997f00"/></linearGradient>
<linearGradient id="io12" gradientUnits="userSpaceOnUse" x1="1678.2" x2="1901.8" y1="0" y2="0"><stop offset="0.0022" stop-color="#6e9900"/><stop offset="0.6641" stop-color="#999600"/><stop offset="0.9996" stop-color="#997f00"/></linearGradient>
<linearGradient id="io13" gradientUnits="userSpaceOnUse" x1="1678.2" x2="1901.8" y1="0" y2="0"><stop offset="0.0022" stop-color="#6e9900"/><stop offset="0.6597" stop-color="#999600"/><stop offset="0.9996" stop-color="#997f00"/></linearGradient>
<linearGradient id="io14" gradientUnits="userSpaceOnUse" x1="1678.2" x2="1901.8" y1="0" y2="0"><stop offset="0.0022" stop-color="#6f9900"/><stop offset="0.6507" stop-color="#999600"/><stop offset="0.9996" stop-color="#997f00"/></linearGradient>
<linearGradient id="io15" gradientUnits="userSpaceOnUse" x1="1678.2" x2="1901.8" y1="0" y2="0"><stop offset="0.0022" stop-color="#6f9900"/><stop offset="0.6462" stop-color="#999600"/><stop offset="0.9996" stop-color="#997e00"/></linearGradient>
<linearGradient id="io16" gradientUnits="userSpaceOnUse" x1="1678.2" x2="1901.8" y1="0" y2="0"><stop offset="0.0022" stop-color="#6f9900"/><stop offset="0.6418" stop-color="#999600"/><stop offset="0.9996" stop-color="#997e00"/></linearGradient>
<linearGradient id="io17" gradientUnits="userSpaceOnUse" x1="1678.2" x2="1901.8" y1="0" y2="0"><stop offset="0.0022" stop-color="#709900"/><stop offset="0.6373" stop-color="#999600"/><stop offset="0.9996" stop-color="#997e00"/></linearGradient>
<linearGradient id="io18" gradientUnits="userSpaceOnUse" x1="1678.2" x2="1901.8" y1="0" y2="0"><stop offset="0.0022" stop-color="#709900"/><stop offset="0.6328" stop-color="#999600"/><stop offset="0.9996" stop-color="#997d00"/></linearGradient>
<linearGradient id="io19" gradientUnits="userSpaceOnUse" x1="1678.2" x2="1901.8" y1="0" y2="0"><stop offset="0.0022" stop-color="#709900"/><stop offset="0.6284" stop-color="#999600"/><stop offset="0.9996" stop-color="#997d00"/></linearGradient>
<linearGradient id="io20" gradientUnits="userSpaceOnUse" x1="1678.2" x2="1901.8" y1="0" y2="0"><stop offset="0.0022" stop-color="#709900"/><stop offset="0.6239" stop-color="#999600"/><stop offset="0.9996" stop-color="#997d00"/></linearGradient>
<linearGradient id="io21" gradientUnits="userSpaceOnUse" x1="1678.2" x2="1901.8" y1="0" y2="0"><stop offset="0.0022" stop-color="#719900"/><stop offset="0.6194" stop-color="#999600"/><stop offset="0.9996" stop-color="#997d00"/></linearGradient>
<linearGradient id="io22" gradientUnits="userSpaceOnUse" x1="1678.2" x2="1901.8" y1="0" y2="0"><stop offset="0.0022" stop-color="#719900"/><stop offset="0.6149" stop-color="#999600"/><stop offset="0.9996" stop-color="#997c00"/></linearGradient>
<linearGradient id="io23" gradientUnits="userSpaceOnUse" x1="1678.2" x2="1901.8" y1="0" y2="0"><stop offset="0.0022" stop-color="#719900"/><stop offset="0.6105" stop-color="#999600"/><stop offset="0.9996" stop-color="#997c00"/></linearGradient>
<linearGradient id="io24" gradientUnits="userSpaceOnUse" x1="1678.2" x2="1901.8" y1="0" y2="0"><stop offset="0.0022" stop-color="#729900"/><stop offset="0.6060" stop-color="#999600"/><stop offset="0.9996" stop-color="#997c00"/></linearGradient>
<linearGradient id="io25" gradientUnits="userSpaceOnUse" x1="1678.2" x2="1901.8" y1="0" y2="0"><stop offset="0.0022" stop-color="#729900"/><stop offset="0.6015" stop-color="#999600"/><stop offset="0.9996" stop-color="#997b00"/></linearGradient>
<linearGradient id="io26" gradientUnits="userSpaceOnUse" x1="1678.2" x2="1901.8" y1="0" y2="0"><stop offset="0.0022" stop-color="#729900"/><stop offset="0.5970" stop-color="#999600"/><stop offset="0.9996" stop-color="#997b00"/></linearGradient>
<linearGradient id="io27" gradientUnits="userSpaceOnUse" x1="1678.2" x2="1901.8" y1="0" y2="0"><stop offset="0.0022" stop-color="#739900"/><stop offset="0.5926" stop-color="#999600"/><stop offset="0.9996" stop-color="#997b00"/></linearGradient>
<linearGradient id="io28" gradientUnits="userSpaceOnUse" x1="1678.2" x2="1901.8" y1="0" y2="0"><stop offset="0.0022" stop-color="#739900"/><stop offset="0.5881" stop-color="#999600"/><stop offset="0.9996" stop-color="#997b00"/></linearGradient>
<linearGradient id="io29" gradientUnits="userSpaceOnUse" x1="1678.2" x2="1901.8" y1="0" y2="0"><stop offset="0.0022" stop-color="#739900"/><stop offset="0.5836" stop-color="#999600"/><stop offset="0.9996" stop-color="#997a00"/></linearGradient>
<linearGradient id="io30" gradientUnits="userSpaceOnUse" x1="1678.2" x2="1901.8" y1="0" y2="0"><stop offset="0.0022" stop-color="#749900"/><stop offset="0.5747" stop-color="#999600"/><stop offset="0.9996" stop-color="#997a00"/></linearGradient>
<linearGradient id="io31" gradientUnits="userSpaceOnUse" x1="1678.2" x2="1901.8" y1="0" y2="0"><stop offset="0.0022" stop-color="#749900"/><stop offset="0.5702" stop-color="#999600"/><stop offset="0.9996" stop-color="#997a00"/></linearGradient>
<linearGradient id="io32" gradientUnits="userSpaceOnUse" x1="1678.2" x2="1901.8" y1="0" y2="0"><stop offset="0.0022" stop-color="#749900"/><stop offset="0.5657" stop-color="#999600"/><stop offset="0.9996" stop-color="#997a00"/></linearGradient>
<linearGradient id="io33" gradientUnits="userSpaceOnUse" x1="1678.2" x2="1901.8" y1="0" y2="0"><stop offset="0.0022" stop-color="#749900"/><stop offset="0.5613" stop-color="#999600"/><stop offset="0.9996" stop-color="#997900"/></linearGradient>
<linearGradient id="io34" gradientUnits="userSpaceOnUse" x1="1678.2" x2="1901.8" y1="0" y2="0"><stop offset="0.0022" stop-color="#759900"/><stop offset="0.5568" stop-color="#999600"/><stop offset="0.9996" stop-color="#997900"/></linearGradient>
<linearGradient id="io35" gradientUnits="userSpaceOnUse" x1="1678.2" x2="1901.8" y1="0" y2="0"><stop offset="0.0022" stop-color="#759900"/><stop offset="0.5523" stop-color="#999600"/><stop offset="0.9996" stop-color="#997900"/></linearGradient>
<linearGradient id="io36" gradientUnits="userSpaceOnUse" x1="1678.2" x2="1901.8" y1="0" y2="0"><stop offset="0.0022" stop-color="#759900"/><stop offset="0.5479" stop-color="#999600"/><stop offset="0.9996" stop-color="#997800"/></linearGradient>
<linearGradient id="io37" gradientUnits="userSpaceOnUse" x1="1678.2" x2="1901.8" y1="0" y2="0"><stop offset="0.0022" stop-color="#769900"/><stop offset="0.5434" stop-color="#999600"/><stop offset="0.9996" stop-color="#997800"/></linearGradient>
<linearGradient id="io38" gradientUnits="userSpaceOnUse" x1="1678.2" x2="1901.8" y1="0" y2="0"><stop offset="0.0022" stop-color="#769900"/><stop offset="0.5389" stop-color="#999600"/><stop offset="0.9996" stop-color="#997800"/></linearGradient>
<linearGradient id="io39" gradientUnits="userSpaceOnUse" x1="1678.2" x2="1901.8" y1="0" y2="0"><stop offset="0.0022" stop-color="#769900"/><stop offset="0.5344" stop-color="#999600"/><stop offset="0.9996" stop-color="#997800"/></linearGradient>
<linearGradient id="io40" gradientUnits="userSpaceOnUse" x1="1678.2" x2="1901.8" y1="0" y2="0"><stop offset="0.0022" stop-color="#790"/><stop offset="0.5300" stop-color="#999600"/><stop offset="0.9996" stop-color="#970"/></linearGradient>
<linearGradient id="io41" gradientUnits="userSpaceOnUse" x1="1678.2" x2="1901.8" y1="0" y2="0"><stop offset="0.0022" stop-color="#790"/><stop offset="0.5255" stop-color="#999600"/><stop offset="0.9996" stop-color="#970"/></linearGradient>
<linearGradient id="io42" gradientUnits="userSpaceOnUse" x1="1678.2" x2="1901.8" y1="0" y2="0"><stop offset="0.0022" stop-color="#790"/><stop offset="0.5210" stop-color="#999600"/><stop offset="0.9996" stop-color="#970"/></linearGradient>
<linearGradient id="io43" gradientUnits="userSpaceOnUse" x1="1678.2" x2="1901.8" y1="0" y2="0"><stop offset="0.0022" stop-color="#789900"/><stop offset="0.5165" stop-color="#999600"/><stop offset="0.9996" stop-color="#970"/></linearGradient>
<linearGradient id="io44" gradientUnits="userSpaceOnUse" x1="1678.2" x2="1901.8" y1="0" y2="0"><stop offset="0.0022" stop-color="#789900"/><stop offset="0.5121" stop-color="#999600"/><stop offset="0.9996" stop-color="#997600"/></linearGradient>
<linearGradient id="io45" gradientUnits="userSpaceOnUse" x1="1678.2" x2="1901.8" y1="0" y2="0"><stop offset="0.0022" stop-color="#789900"/><stop offset="0.5031" stop-color="#999600"/><stop offset="0.9996" stop-color="#997600"/></linearGradient>
<linearGradient id="io46" gradientUnits="userSpaceOnUse" x1="1678.2" x2="1901.8" y1="0" y2="0"><stop offset="0.0022" stop-color="#799900"/><stop offset="0.4987" stop-color="#999600"/><stop offset="0.9996" stop-color="#997600"/></linearGradient>
<linearGradient id="io47" gradientUnits="userSpaceOnUse" x1="1678.2" x2="1901.8" y1="0" y2="0"><stop offset="0.0022" stop-color="#799900"/><stop offset="0.4942" stop-color="#999600"/><stop offset="0.9996" stop-color="#997500"/></linearGradient>
<linearGradient id="io48" gradientUnits="userSpaceOnUse" x1="1678.2" x2="1901.8" y1="0" y2="0"><stop offset="0.0022" stop-color="#799900"/><stop offset="0.4897" stop-color="#999600"/><stop offset="0.9996" stop-color="#997500"/></linearGradient>
<linearGradient id="io49" gradientUnits="userSpaceOnUse" x1="1678.2" x2="1901.8" y1="0" y2="0"><stop offset="0.0022" stop-color="#799900"/><stop offset="0.4852" stop-color="#999600"/><stop offset="0.9996" stop-color="#997500"/></linearGradient>
<linearGradient id="io50" gradientUnits="userSpaceOnUse" x1="1678.2" x2="1901.8" y1="0" y2="0"><stop offset="0.0022" stop-color="#7a9900"/><stop offset="0.4808" stop-color="#999600"/><stop offset="0.9996" stop-color="#997500"/></linearGradient>
<linearGradient id="io51" gradientUnits="userSpaceOnUse" x1="1678.2" x2="1901.8" y1="0" y2="0"><stop offset="0.0022" stop-color="#7a9900"/><stop offset="0.4763" stop-color="#999600"/><stop offset="0.9996" stop-color="#997400"/></linearGradient>
<linearGradient id="io52" gradientUnits="userSpaceOnUse" x1="1678.2" x2="1901.8" y1="0" y2="0"><stop offset="0.0022" stop-color="#7a9900"/><stop offset="0.4718" stop-color="#999600"/><stop offset="0.9996" stop-color="#997400"/></linearGradient>
<linearGradient id="io53" gradientUnits="userSpaceOnUse" x1="1678.2" x2="1901.8" y1="0" y2="0"><stop offset="0.0022" stop-color="#7b9900"/><stop offset="0.4674" stop-color="#999600"/><stop offset="0.9996" stop-color="#997400"/></linearGradient>
<linearGradient id="io54" gradientUnits="userSpaceOnUse" x1="1678.2" x2="1901.8" y1="0" y2="0"><stop offset="0.0022" stop-color="#7b9900"/><stop offset="0.4629" stop-color="#999600"/><stop offset="0.9996" stop-color="#997400"/></linearGradient>
<linearGradient id="io55" gradientUnits="userSpaceOnUse" x1="1678.2" x2="1901.8" y1="0" y2="0"><stop offset="0.0022" stop-color="#7b9900"/><stop offset="0.4584" stop-color="#999600"/><stop offset="0.9996" stop-color="#997300"/></linearGradient>
<linearGradient id="io56" gradientUnits="userSpaceOnUse" x1="1678.2" x2="1901.8" y1="0" y2="0"><stop offset="0.0022" stop-color="#7c9900"/><stop offset="0.4539" stop-color="#999600"/><stop offset="0.9996" stop-color="#997300"/></linearGradient>
<linearGradient id="io57" gradientUnits="userSpaceOnUse" x1="1678.2" x2="1901.8" y1="0" y2="0"><stop offset="0.0022" stop-color="#7c9900"/><stop offset="0.4495" stop-color="#999600"/><stop offset="0.9996" stop-color="#997300"/></linearGradient>
<linearGradient id="io58" gradientUnits="userSpaceOnUse" x1="1678.2" x2="1901.8" y1="0" y2="0"><stop offset="0.0022" stop-color="#7c9900"/><stop offset="0.4450" stop-color="#999600"/><stop offset="0.9996" stop-color="#997300"/></linearGradient>
<linearGradient id="io59" gradientUnits="userSpaceOnUse" x1="1678.2" x2="1901.8" y1="0" y2="0"><stop offset="0.0022" stop-color="#7d9900"/><stop offset="0.4405" stop-color="#999600"/><stop offset="0.9996" stop-color="#997200"/></linearGradient>
<linearGradient id="io60" gradientUnits="userSpaceOnUse" x1="1678.2" x2="1901.8" y1="0" y2="0"><stop offset="0.0022" stop-color="#7d9900"/><stop offset="0.4360" stop-color="#999600"/><stop offset="0.9996" stop-color="#997200"/></linearGradient>
<linearGradient id="io61" gradientUnits="userSpaceOnUse" x1="1678.2" x2="1901.8" y1="0" y2="0"><stop offset="0.0022" stop-color="#7d9900"/><stop offset="0.4316" stop-color="#999600"/><stop offset="0.9996" stop-color="#997200"/></linearGradient>
<linearGradient id="io62" gradientUnits="userSpaceOnUse" x1="1678.2" x2="1901.8" y1="0" y2="0"><stop offset="0.0022" stop-color="#7e9900"/><stop offset="0.4226" stop-color="#999600"/><stop offset="0.9996" stop-color="#997200"/></linearGradient>
<linearGradient id="io63" gradientUnits="userSpaceOnUse" x1="1678.2" x2="1901.8" y1="0" y2="0"><stop offset="0.0022" stop-color="#7e9900"/><stop offset="0.4182" stop-color="#999600"/><stop offset="0.9996" stop-color="#997100"/></linearGradient>
<linearGradient id="io64" gradientUnits="userSpaceOnUse" x1="1678.2" x2="1901.8" y1="0" y2="0"><stop offset="0.0022" stop-color="#7e9900"/><stop offset="0.4137" stop-color="#999600"/><stop offset="0.9996" stop-color="#997100"/></linearGradient>
<linearGradient id="io65" gradientUnits="userSpaceOnUse" x1="1678.2" x2="1901.8" y1="0" y2="0"><stop offset="0.0022" stop-color="#7f9900"/><stop offset="0.4092" stop-color="#999600"/><stop offset="0.9996" stop-color="#997100"/></linearGradient>
<linearGradient id="io66" gradientUnits="userSpaceOnUse" x1="1678.2" x2="1901.8" y1="0" y2="0"><stop offset="0.0022" stop-color="#7f9900"/><stop offset="0.4047" stop-color="#999600"/><stop offset="0.9996" stop-color="#997100"/></linearGradient>
<linearGradient id="io67" gradientUnits="userSpaceOnUse" x1="1678.2" x2="1901.8" y1="0" y2="0"><stop offset="0.0022" stop-color="#7f9900"/><stop offset="0.4003" stop-color="#999600"/><stop offset="0.9996" stop-color="#997000"/></linearGradient>
<linearGradient id="io68" gradientUnits="userSpaceOnUse" x1="1678.2" x2="1901.8" y1="0" y2="0"><stop offset="0.0022" stop-color="#809900"/><stop offset="0.3958" stop-color="#999600"/><stop offset="0.9996" stop-color="#997000"/></linearGradient>
<linearGradient id="io69" gradientUnits="userSpaceOnUse" x1="1678.2" x2="1901.8" y1="0" y2="0"><stop offset="0.0022" stop-color="#809900"/><stop offset="0.3913" stop-color="#999600"/><stop offset="0.9996" stop-color="#997000"/></linearGradient>
<linearGradient id="io70" gradientUnits="userSpaceOnUse" x1="1678.2" x2="1901.8" y1="0" y2="0"><stop offset="0.0022" stop-color="#809900"/><stop offset="0.3869" stop-color="#999600"/><stop offset="0.9996" stop-color="#997000"/></linearGradient>
<linearGradient id="io71" gradientUnits="userSpaceOnUse" x1="1678.2" x2="1901.8" y1="0" y2="0"><stop offset="0.0022" stop-color="#819900"/><stop offset="0.3824" stop-color="#999600"/><stop offset="0.9996" stop-color="#996f00"/></linearGradient>
<linearGradient id="io72" gradientUnits="userSpaceOnUse" x1="1678.2" x2="1901.8" y1="0" y2="0"><stop offset="0.0022" stop-color="#819900"/><stop offset="0.3779" stop-color="#999600"/><stop offset="0.9996" stop-color="#996f00"/></linearGradient>
<linearGradient id="io73" gradientUnits="userSpaceOnUse" x1="1678.2" x2="1901.8" y1="0" y2="0"><stop offset="0.0022" stop-color="#819900"/><stop offset="0.3734" stop-color="#999600"/><stop offset="0.9996" stop-color="#996f00"/></linearGradient>
<linearGradient id="io74" gradientUnits="userSpaceOnUse" x1="1678.2" x2="1901.8" y1="0" y2="0"><stop offset="0.0022" stop-color="#829900"/><stop offset="0.3690" stop-color="#999600"/><stop offset="0.9996" stop-color="#996f00"/></linearGradient>
<linearGradient id="io75" gradientUnits="userSpaceOnUse" x1="1678.2" x2="1901.8" y1="0" y2="0"><stop offset="0.0022" stop-color="#829900"/><stop offset="0.3645" stop-color="#999600"/><stop offset="0.9996" stop-color="#996e00"/></linearGradient>
<linearGradient id="ii0" gradientUnits="userSpaceOnUse" x1="1678.2" x2="1901.8" y1="0" y2="0"><stop offset="0.0022" stop-color="#beff00"/><stop offset="0.8386" stop-color="#fffc00"/><stop offset="0.9996" stop-color="#ffef00"/></linearGradient>
<linearGradient id="ii1" gradientUnits="userSpaceOnUse" x1="1678.2" x2="1901.8" y1="0" y2="0"><stop offset="0.0022" stop-color="#beff00"/><stop offset="0.8296" stop-color="#fffc00"/><stop offset="0.9996" stop-color="#ffef00"/></linearGradient>
<linearGradient id="ii2" gradientUnits="userSpaceOnUse" x1="1678.2" x2="1901.8" y1="0" y2="0"><stop offset="0.0022" stop-color="#bfff00"/><stop offset="0.8207" stop-color="#fffc00"/><stop offset="0.9996" stop-color="#fe0"/></linearGradient>
<linearGradient id="ii3" gradientUnits="userSpaceOnUse" x1="1678.2" x2="1901.8" y1="0" y2="0"><stop offset="0.0022" stop-color="#c0ff00"/><stop offset="0.8117" stop-color="#fffc00"/><stop offset="0.9996" stop-color="#ffed00"/></linearGradient>
<linearGradient id="ii4" gradientUnits="userSpaceOnUse" x1="1678.2" x2="1901.8" y1="0" y2="0"><stop offset="0.0022" stop-color="#c0ff00"/><stop offset="0.8028" stop-color="#fffc00"/><stop offset="0.9996" stop-color="#ffed00"/></linearGradient>
<linearGradient id="ii5" gradientUnits="userSpaceOnUse" x1="1678.2" x2="1901.8" y1="0" y2="0"><stop offset="0.0022" stop-color="#c1ff00"/><stop offset="0.7938" stop-color="#fffc00"/><stop offset="0.9996" stop-color="#ffec00"/></linearGradient>
<linearGradient id="ii6" gradientUnits="userSpaceOnUse" x1="1678.2" x2="1901.8" y1="0" y2="0"><stop offset="0.0022" stop-color="#c1ff00"/><stop offset="0.7894" stop-color="#fffc00"/><stop offset="0.9996" stop-color="#ffeb00"/></linearGradient>
<linearGradient id="ii7" gradientUnits="userSpaceOnUse" x1="1678.2" x2="1901.8" y1="0" y2="0"><stop offset="0.0022" stop-color="#c2ff00"/><stop offset="0.7804" stop-color="#fffc00"/><stop offset="0.9996" stop-color="#ffeb00"/></linearGradient>
<linearGradient id="ii8" gradientUnits="userSpaceOnUse" x1="1678.2" x2="1901.8" y1="0" y2="0"><stop offset="0.0022" stop-color="#c2ff01"/><stop offset="0.7715" stop-color="#fffc00"/><stop offset="0.9996" stop-color="#ffea00"/></linearGradient>
<linearGradient id="ii9" gradientUnits="userSpaceOnUse" x1="1678.2" x2="1901.8" y1="0" y2="0"><stop offset="0.0022" stop-color="#c3ff02"/><stop offset="0.7625" stop-color="#fffc00"/><stop offset="0.9996" stop-color="#ffea00"/></linearGradient>
<linearGradient id="ii10" gradientUnits="userSpaceOnUse" x1="1678.2" x2="1901.8" y1="0" y2="0"><stop offset="0.0022" stop-color="#c3ff03"/><stop offset="0.7536" stop-color="#fffc00"/><stop offset="0.9996" stop-color="#ffe900"/></linearGradient>
<linearGradient id="ii11" gradientUnits="userSpaceOnUse" x1="1678.2" x2="1901.8" y1="0" y2="0"><stop offset="0.0022" stop-color="#c4ff04"/><stop offset="0.3824" stop-color="#e3ff00"/><stop offset="0.7491" stop-color="#fffc00"/><stop offset="0.9996" stop-color="#ffe800"/></linearGradient>
<linearGradient id="ii12" gradientUnits="userSpaceOnUse" x1="1678.2" x2="1901.8" y1="0" y2="0"><stop offset="0.0022" stop-color="#c5ff04"/><stop offset="0.2437" stop-color="#d8ff00"/><stop offset="0.7402" stop-color="#fffc00"/><stop offset="0.9996" stop-color="#ffe800"/></linearGradient>
<linearGradient id="ii13" gradientUnits="userSpaceOnUse" x1="1678.2" x2="1901.8" y1="0" y2="0"><stop offset="0.0022" stop-color="#c5ff05"/><stop offset="0.2258" stop-color="#d7ff00"/><stop offset="0.7312" stop-color="#fffc00"/><stop offset="0.9996" stop-color="#ffe700"/></linearGradient>
<linearGradient id="ii14" gradientUnits="userSpaceOnUse" x1="1678.2" x2="1901.8" y1="0" y2="0"><stop offset="0.0022" stop-color="#c6ff06"/><stop offset="0.2214" stop-color="#d8ff00"/><stop offset="0.7223" stop-color="#fffc00"/><stop offset="0.9996" stop-color="#ffe600"/></linearGradient>
<linearGradient id="ii15" gradientUnits="userSpaceOnUse" x1="1678.2" x2="1901.8" y1="0" y2="0"><stop offset="0.0022" stop-color="#c6ff07"/><stop offset="0.2303" stop-color="#d9ff00"/><stop offset="0.7178" stop-color="#fffc00"/><stop offset="0.9996" stop-color="#ffe600"/></linearGradient>
<linearGradient id="ii16" gradientUnits="userSpaceOnUse" x1="1678.2" x2="1901.8" y1="0" y2="0"><stop offset="0.0022" stop-color="#c7ff07"/><stop offset="0.2437" stop-color="#dbff00"/><stop offset="0.7089" stop-color="#fffc00"/><stop offset="0.9996" stop-color="#ffe500"/></linearGradient>
<linearGradient id="ii17" gradientUnits="userSpaceOnUse" x1="1678.2" x2="1901.8" y1="0" y2="0"><stop offset="0.0022" stop-color="#c7ff08"/><stop offset="0.2572" stop-color="#dcff00"/><stop offset="0.6999" stop-color="#fffc00"/><stop offset="0.9996" stop-color="#ffe500"/></linearGradient>
<linearGradient id="ii18" gradientUnits="userSpaceOnUse" x1="1678.2" x2="1901.8" y1="0" y2="0"><stop offset="0.0022" stop-color="#c8ff09"/><stop offset="0.2661" stop-color="#deff00"/><stop offset="0.6910" stop-color="#fffc00"/><stop offset="0.9996" stop-color="#ffe400"/></linearGradient>
<linearGradient id="ii19" gradientUnits="userSpaceOnUse" x1="1678.2" x2="1901.8" y1="0" y2="0"><stop offset="0.0022" stop-color="#c9ff09"/><stop offset="0.2840" stop-color="#e0ff00"/><stop offset="0.6865" stop-color="#fffc00"/><stop offset="0.9996" stop-color="#ffe300"/></linearGradient>
<linearGradient id="ii20" gradientUnits="userSpaceOnUse" x1="1678.2" x2="1901.8" y1="0" y2="0"><stop offset="0.0022" stop-color="#c9ff0a"/><stop offset="0.2974" stop-color="#e2ff00"/><stop offset="0.6775" stop-color="#fffc00"/><stop offset="0.9996" stop-color="#ffe300"/></linearGradient>
<linearGradient id="ii21" gradientUnits="userSpaceOnUse" x1="1678.2" x2="1901.8" y1="0" y2="0"><stop offset="0.0022" stop-color="#caff0b"/><stop offset="0.3153" stop-color="#e4ff00"/><stop offset="0.6686" stop-color="#fffc00"/><stop offset="0.9996" stop-color="#ffe200"/></linearGradient>
<linearGradient id="ii22" gradientUnits="userSpaceOnUse" x1="1678.2" x2="1901.8" y1="0" y2="0"><stop offset="0.0022" stop-color="#caff0b"/><stop offset="0.3287" stop-color="#e6ff00"/><stop offset="0.6597" stop-color="#fffc00"/><stop offset="0.9996" stop-color="#ffe200"/></linearGradient>
<linearGradient id="ii23" gradientUnits="userSpaceOnUse" x1="1678.2" x2="1901.8" y1="0" y2="0"><stop offset="0.0022" stop-color="#cbff0c"/><stop offset="0.3466" stop-color="#e8ff00"/><stop offset="0.6552" stop-color="#fffc00"/><stop offset="0.9996" stop-color="#ffe100"/></linearGradient>
<linearGradient id="ii24" gradientUnits="userSpaceOnUse" x1="1678.2" x2="1901.8" y1="0" y2="0"><stop offset="0.0022" stop-color="#ccff0d"/><stop offset="0.3645" stop-color="#eaff00"/><stop offset="0.6462" stop-color="#fffc00"/><stop offset="0.9996" stop-color="#ffe000"/></linearGradient>
<linearGradient id="ii25" gradientUnits="userSpaceOnUse" x1="1678.2" x2="1901.8" y1="0" y2="0"><stop offset="0.0022" stop-color="#ccff0d"/><stop offset="0.3779" stop-color="#ecff00"/><stop offset="0.6418" stop-color="#fffb00"/><stop offset="0.9996" stop-color="#ffe000"/></linearGradient>
<linearGradient id="ii26" gradientUnits="userSpaceOnUse" x1="1678.2" x2="1901.8" y1="0" y2="0"><stop offset="0.0022" stop-color="#cdff0e"/><stop offset="0.3913" stop-color="#ef0"/><stop offset="0.6328" stop-color="#fffb00"/><stop offset="0.9996" stop-color="#ffdf00"/></linearGradient>
<linearGradient id="ii27" gradientUnits="userSpaceOnUse" x1="1678.2" x2="1901.8" y1="0" y2="0"><stop offset="0.0022" stop-color="#cdff0f"/><stop offset="0.4092" stop-color="#f0ff00"/><stop offset="0.6239" stop-color="#fffc00"/><stop offset="0.9996" stop-color="#ffdf00"/></linearGradient>
<linearGradient id="ii28" gradientUnits="userSpaceOnUse" x1="1678.2" x2="1901.8" y1="0" y2="0"><stop offset="0.0022" stop-color="#ceff0f"/><stop offset="0.4271" stop-color="#f2ff00"/><stop offset="0.6194" stop-color="#fffb00"/><stop offset="0.9996" stop-color="#ffde00"/></linearGradient>
<linearGradient id="ii29" gradientUnits="userSpaceOnUse" x1="1678.2" x2="1901.8" y1="0" y2="0"><stop offset="0.0022" stop-color="#cfff10"/><stop offset="0.4450" stop-color="#f4ff00"/><stop offset="0.6149" stop-color="#fffb00"/><stop offset="0.9996" stop-color="#fd0"/></linearGradient>
<linearGradient id="ii30" gradientUnits="userSpaceOnUse" x1="1678.2" x2="1901.8" y1="0" y2="0"><stop offset="0.0022" stop-color="#cfff10"/><stop offset="0.4584" stop-color="#f6ff00"/><stop offset="0.6105" stop-color="#fffb00"/><stop offset="0.9996" stop-color="#fd0"/></linearGradient>
<linearGradient id="ii31" gradientUnits="userSpaceOnUse" x1="1678.2" x2="1901.8" y1="0" y2="0"><stop offset="0.0022" stop-color="#d0ff11"/><stop offset="0.4763" stop-color="#f8ff00"/><stop offset="0.6149" stop-color="#fffa00"/><stop offset="0.9996" stop-color="#ffdc00"/></linearGradient>
<linearGradient id="ii32" gradientUnits="userSpaceOnUse" x1="1678.2" x2="1901.8" y1="0" y2="0"><stop offset="0.0022" stop-color="#d0ff12"/><stop offset="0.4942" stop-color="#fbff00"/><stop offset="0.6552" stop-color="#fff500"/><stop offset="0.9996" stop-color="#ffdc00"/></linearGradient>
<linearGradient id="ii33" gradientUnits="userSpaceOnUse" x1="1678.2" x2="1901.8" y1="0" y2="0"><stop offset="0.0022" stop-color="#d1ff12"/><stop offset="0.5076" stop-color="#fdff00"/><stop offset="0.9996" stop-color="#ffdb00"/></linearGradient>
<linearGradient id="ii34" gradientUnits="userSpaceOnUse" x1="1678.2" x2="1901.8" y1="0" y2="0"><stop offset="0.0022" stop-color="#d2ff13"/><stop offset="0.5255" stop-color="#ff0"/><stop offset="0.9996" stop-color="#ffda00"/></linearGradient>
<linearGradient id="ii35" gradientUnits="userSpaceOnUse" x1="1678.2" x2="1901.8" y1="0" y2="0"><stop offset="0.0022" stop-color="#d2ff13"/><stop offset="0.5434" stop-color="#fffd00"/><stop offset="0.9996" stop-color="#ffda00"/></linearGradient>
<linearGradient id="ii36" gradientUnits="userSpaceOnUse" x1="1678.2" x2="1901.8" y1="0" y2="0"><stop offset="0.0022" stop-color="#d3ff14"/><stop offset="0.5479" stop-color="#fffc00"/><stop offset="0.9996" stop-color="#ffd900"/></linearGradient>
<linearGradient id="ii37" gradientUnits="userSpaceOnUse" x1="1678.2" x2="1901.8" y1="0" y2="0"><stop offset="0.0022" stop-color="#d3ff15"/><stop offset="0.5389" stop-color="#fffc00"/><stop offset="0.9996" stop-color="#ffd900"/></linearGradient>
<linearGradient id="ii38" gradientUnits="userSpaceOnUse" x1="1678.2" x2="1901.8" y1="0" y2="0"><stop offset="0.0022" stop-color="#d4ff15"/><stop offset="0.5300" stop-color="#fffc00"/><stop offset="0.9996" stop-color="#ffd800"/></linearGradient>
<linearGradient id="ii39" gradientUnits="userSpaceOnUse" x1="1678.2" x2="1901.8" y1="0" y2="0"><stop offset="0.0022" stop-color="#d5ff16"/><stop offset="0.5210" stop-color="#fffc01"/><stop offset="0.9996" stop-color="#ffd700"/></linearGradient>
<linearGradient id="ii40" gradientUnits="userSpaceOnUse" x1="1678.2" x2="1901.8" y1="0" y2="0"><stop offset="0.0022" stop-color="#d5ff16"/><stop offset="0.5121" stop-color="#fffc02"/><stop offset="0.9996" stop-color="#ffd700"/></linearGradient>
<linearGradient id="ii41" gradientUnits="userSpaceOnUse" x1="1678.2" x2="1901.8" y1="0" y2="0"><stop offset="0.0022" stop-color="#d6ff17"/><stop offset="0.5076" stop-color="#fffc04"/><stop offset="0.8296" stop-color="#ffe200"/><stop offset="0.9996" stop-color="#ffd600"/></linearGradient>
<linearGradient id="ii42" gradientUnits="userSpaceOnUse" x1="1678.2" x2="1901.8" y1="0" y2="0"><stop offset="0.0022" stop-color="#d7ff18"/><stop offset="0.4987" stop-color="#fffc05"/><stop offset="0.6999" stop-color="#ffeb00"/><stop offset="0.9996" stop-color="#ffd600"/></linearGradient>
<linearGradient id="ii43" gradientUnits="userSpaceOnUse" x1="1678.2" x2="1901.8" y1="0" y2="0"><stop offset="0.0022" stop-color="#d7ff18"/><stop offset="0.4897" stop-color="#fffc06"/><stop offset="0.6954" stop-color="#ffeb00"/><stop offset="0.9996" stop-color="#ffd500"/></linearGradient>
<linearGradient id="ii44" gradientUnits="userSpaceOnUse" x1="1678.2" x2="1901.8" y1="0" y2="0"><stop offset="0.0022" stop-color="#d8ff19"/><stop offset="0.4808" stop-color="#fffc07"/><stop offset="0.6999" stop-color="#ffea00"/><stop offset="0.9996" stop-color="#ffd400"/></linearGradient>
<linearGradient id="ii45" gradientUnits="userSpaceOnUse" x1="1678.2" x2="1901.8" y1="0" y2="0"><stop offset="0.0022" stop-color="#d8ff19"/><stop offset="0.4763" stop-color="#fffc08"/><stop offset="0.7133" stop-color="#ffe800"/><stop offset="0.9996" stop-color="#ffd400"/></linearGradient>
<linearGradient id="ii46" gradientUnits="userSpaceOnUse" x1="1678.2" x2="1901.8" y1="0" y2="0"><stop offset="0.0022" stop-color="#d9ff1a"/><stop offset="0.4674" stop-color="#fffc09"/><stop offset="0.7267" stop-color="#ffe700"/><stop offset="0.9996" stop-color="#ffd300"/></linearGradient>
<linearGradient id="ii47" gradientUnits="userSpaceOnUse" x1="1678.2" x2="1901.8" y1="0" y2="0"><stop offset="0.0022" stop-color="#daff1b"/><stop offset="0.4584" stop-color="#fffc0b"/><stop offset="0.7446" stop-color="#ffe500"/><stop offset="0.9996" stop-color="#ffd300"/></linearGradient>
<linearGradient id="ii48" gradientUnits="userSpaceOnUse" x1="1678.2" x2="1901.8" y1="0" y2="0"><stop offset="0.0022" stop-color="#daff1b"/><stop offset="0.4495" stop-color="#fffc0c"/><stop offset="0.7581" stop-color="#ffe300"/><stop offset="0.9996" stop-color="#ffd200"/></linearGradient>
<linearGradient id="ii49" gradientUnits="userSpaceOnUse" x1="1678.2" x2="1901.8" y1="0" y2="0"><stop offset="0.0022" stop-color="#dbff1c"/><stop offset="0.4405" stop-color="#fffc0d"/><stop offset="0.7715" stop-color="#ffe100"/><stop offset="0.9996" stop-color="#ffd200"/></linearGradient>
<linearGradient id="ii50" gradientUnits="userSpaceOnUse" x1="1678.2" x2="1901.8" y1="0" y2="0"><stop offset="0.0022" stop-color="#dcff1c"/><stop offset="0.4360" stop-color="#fffc0e"/><stop offset="0.7894" stop-color="#ffdf00"/><stop offset="0.9996" stop-color="#ffd100"/></linearGradient>
<linearGradient id="ii51" gradientUnits="userSpaceOnUse" x1="1678.2" x2="1901.8" y1="0" y2="0"><stop offset="0.0022" stop-color="#dcff1d"/><stop offset="0.4271" stop-color="#fffc0f"/><stop offset="0.8072" stop-color="#fd0"/><stop offset="0.9996" stop-color="#ffd000"/></linearGradient>
<linearGradient id="ii52" gradientUnits="userSpaceOnUse" x1="1678.2" x2="1901.8" y1="0" y2="0"><stop offset="0.0022" stop-color="#ddff1d"/><stop offset="0.4182" stop-color="#fffc10"/><stop offset="0.8207" stop-color="#ffdc00"/><stop offset="0.9996" stop-color="#ffd000"/></linearGradient>
<linearGradient id="ii53" gradientUnits="userSpaceOnUse" x1="1678.2" x2="1901.8" y1="0" y2="0"><stop offset="0.0022" stop-color="#deff1e"/><stop offset="0.4092" stop-color="#fffc11"/><stop offset="0.8386" stop-color="#ffda00"/><stop offset="0.9996" stop-color="#ffcf00"/></linearGradient>
<linearGradient id="ii54" gradientUnits="userSpaceOnUse" x1="1678.2" x2="1901.8" y1="0" y2="0"><stop offset="0.0022" stop-color="#deff1f"/><stop offset="0.4003" stop-color="#fffc12"/><stop offset="0.8564" stop-color="#ffd800"/><stop offset="0.9996" stop-color="#ffcf00"/></linearGradient>
<linearGradient id="ii55" gradientUnits="userSpaceOnUse" x1="1678.2" x2="1901.8" y1="0" y2="0"><stop offset="0.0022" stop-color="#dfff1f"/><stop offset="0.3958" stop-color="#fffc12"/><stop offset="0.8743" stop-color="#ffd600"/><stop offset="0.9996" stop-color="#ffce00"/></linearGradient>
<linearGradient id="ii56" gradientUnits="userSpaceOnUse" x1="1678.2" x2="1901.8" y1="0" y2="0"><stop offset="0.0022" stop-color="#e0ff20"/><stop offset="0.3869" stop-color="#fffc13"/><stop offset="0.8877" stop-color="#ffd500"/><stop offset="0.9996" stop-color="#ffcd00"/></linearGradient>
<linearGradient id="ii57" gradientUnits="userSpaceOnUse" x1="1678.2" x2="1901.8" y1="0" y2="0"><stop offset="0.0022" stop-color="#e0ff20"/><stop offset="0.3779" stop-color="#fffc14"/><stop offset="0.9056" stop-color="#ffd300"/><stop offset="0.9996" stop-color="#ffcd00"/></linearGradient>
<linearGradient id="ii58" gradientUnits="userSpaceOnUse" x1="1678.2" x2="1901.8" y1="0" y2="0"><stop offset="0.0022" stop-color="#e1ff21"/><stop offset="0.3690" stop-color="#fffc15"/><stop offset="0.9235" stop-color="#ffd100"/><stop offset="0.9996" stop-color="#fc0"/></linearGradient>
<linearGradient id="ii59" gradientUnits="userSpaceOnUse" x1="1678.2" x2="1901.8" y1="0" y2="0"><stop offset="0.0022" stop-color="#e2ff22"/><stop offset="0.3600" stop-color="#fffc16"/><stop offset="0.9414" stop-color="#ffcf00"/><stop offset="0.9996" stop-color="#fc0"/></linearGradient>
<linearGradient id="ii60" gradientUnits="userSpaceOnUse" x1="1678.2" x2="1901.8" y1="0" y2="0"><stop offset="0.0022" stop-color="#e2ff22"/><stop offset="0.3555" stop-color="#fffc17"/><stop offset="0.9548" stop-color="#ffce00"/><stop offset="0.9996" stop-color="#ffcb00"/></linearGradient>
<linearGradient id="ii61" gradientUnits="userSpaceOnUse" x1="1678.2" x2="1901.8" y1="0" y2="0"><stop offset="0.0022" stop-color="#e3ff23"/><stop offset="0.3466" stop-color="#fffc18"/><stop offset="0.9727" stop-color="#fc0"/><stop offset="0.9996" stop-color="#ffcb00"/></linearGradient>
<linearGradient id="ii62" gradientUnits="userSpaceOnUse" x1="1678.2" x2="1901.8" y1="0" y2="0"><stop offset="0.0022" stop-color="#e4ff23"/><stop offset="0.3377" stop-color="#fffc19"/><stop offset="0.9906" stop-color="#ffcb00"/><stop offset="0.9996" stop-color="#ffca00"/></linearGradient>
<linearGradient id="ii63" gradientUnits="userSpaceOnUse" x1="1678.2" x2="1901.8" y1="0" y2="0"><stop offset="0.0022" stop-color="#e4ff24"/><stop offset="0.3287" stop-color="#fffc1a"/><stop offset="0.9996" stop-color="#ffc900"/></linearGradient>
<linearGradient id="ii64" gradientUnits="userSpaceOnUse" x1="1678.2" x2="1901.8" y1="0" y2="0"><stop offset="0.0022" stop-color="#e5ff24"/><stop offset="0.3242" stop-color="#fffc1a"/><stop offset="0.9996" stop-color="#ffc900"/></linearGradient>
<linearGradient id="ii65" gradientUnits="userSpaceOnUse" x1="1678.2" x2="1901.8" y1="0" y2="0"><stop offset="0.0022" stop-color="#e6ff25"/><stop offset="0.3153" stop-color="#fffc1b"/><stop offset="0.9996" stop-color="#ffc800"/></linearGradient>
<linearGradient id="ii66" gradientUnits="userSpaceOnUse" x1="1678.2" x2="1901.8" y1="0" y2="0"><stop offset="0.0022" stop-color="#e6ff26"/><stop offset="0.3064" stop-color="#fffc1c"/><stop offset="0.9996" stop-color="#ffc800"/></linearGradient>
<linearGradient id="ii67" gradientUnits="userSpaceOnUse" x1="1678.2" x2="1901.8" y1="0" y2="0"><stop offset="0.0022" stop-color="#e7ff26"/><stop offset="0.2974" stop-color="#fffc1d"/><stop offset="0.9996" stop-color="#ffc700"/></linearGradient>
<linearGradient id="ii68" gradientUnits="userSpaceOnUse" x1="1678.2" x2="1901.8" y1="0" y2="0"><stop offset="0.0022" stop-color="#e8ff27"/><stop offset="0.2885" stop-color="#fffc1e"/><stop offset="0.9996" stop-color="#ffc701"/></linearGradient>
<linearGradient id="ii69" gradientUnits="userSpaceOnUse" x1="1678.2" x2="1901.8" y1="0" y2="0"><stop offset="0.0022" stop-color="#e8ff27"/><stop offset="0.2840" stop-color="#fffc1f"/><stop offset="0.9996" stop-color="#ffc602"/></linearGradient>
<linearGradient id="ii70" gradientUnits="userSpaceOnUse" x1="1678.2" x2="1901.8" y1="0" y2="0"><stop offset="0.0022" stop-color="#e9ff28"/><stop offset="0.2750" stop-color="#fffc20"/><stop offset="0.9996" stop-color="#ffc503"/></linearGradient>
<linearGradient id="ii71" gradientUnits="userSpaceOnUse" x1="1678.2" x2="1901.8" y1="0" y2="0"><stop offset="0.0022" stop-color="#eaff29"/><stop offset="0.2661" stop-color="#fffc20"/><stop offset="0.9996" stop-color="#ffc504"/></linearGradient>
<linearGradient id="ii72" gradientUnits="userSpaceOnUse" x1="1678.2" x2="1901.8" y1="0" y2="0"><stop offset="0.0022" stop-color="#ebff29"/><stop offset="0.2572" stop-color="#fffc21"/><stop offset="0.9996" stop-color="#ffc404"/></linearGradient>
<linearGradient id="ii73" gradientUnits="userSpaceOnUse" x1="1678.2" x2="1901.8" y1="0" y2="0"><stop offset="0.0022" stop-color="#ebff2a"/><stop offset="0.2527" stop-color="#fffb22"/><stop offset="0.9996" stop-color="#ffc405"/></linearGradient>
<linearGradient id="ii74" gradientUnits="userSpaceOnUse" x1="1678.2" x2="1901.8" y1="0" y2="0"><stop offset="0.0022" stop-color="#ecff2a"/><stop offset="0.2437" stop-color="#fffc23"/><stop offset="0.9996" stop-color="#ffc306"/></linearGradient>
<linearGradient id="ii75" gradientUnits="userSpaceOnUse" x1="1678.2" x2="1901.8" y1="0" y2="0"><stop offset="0.0022" stop-color="#edff2b"/><stop offset="0.2348" stop-color="#fffc24"/><stop offset="0.9996" stop-color="#ffc306"/></linearGradient>
<linearGradient id="rbar" x1="0" y1="0" x2="0" y2="1"><stop offset="0" stop-color="#ff0a0a"/><stop offset="0.45" stop-color="#f00000"/><stop offset="1" stop-color="#900000"/></linearGradient>
<linearGradient id="bbar" x1="0" y1="0" x2="0" y2="1"><stop offset="0" stop-color="#6a6aff"/><stop offset="0.18" stop-color="#0000ff"/><stop offset="0.6" stop-color="#0000e8"/><stop offset="1" stop-color="#000070"/></linearGradient>
<linearGradient id="bstrip" x1="0" y1="0" x2="0" y2="1"><stop offset="0" stop-color="#464646"/><stop offset="1" stop-color="#262626"/></linearGradient>
<linearGradient id="bbtn" x1="0" y1="0" x2="0" y2="1"><stop offset="0" stop-color="#a4a4a4"/><stop offset="0.5" stop-color="#7c7c7c"/><stop offset="1" stop-color="#5a5a5a"/></linearGradient>
<linearGradient id="nbtn" x1="0" y1="0" x2="0" y2="1"><stop offset="0" stop-color="#d0d0d0"/><stop offset="1" stop-color="#9a9a9a"/></linearGradient>
</defs>
<rect x="0" y="0" width="1920" height="1058" fill="#333"/>
<rect x="0" y="0" width="1920" height="17" fill="#00b4c3"/>
<rect x="0" y="17" width="1920" height="49" fill="#232323"/>
<path d="M1,17 H137 V35 Q137,39 133,39 H5 Q1,39 1,35 Z" fill="url(#logo)"/>
<path d="M7.5,1 L10.5,4 L7.5,7 L4.5,4 Z" fill="#f7c600"/>
<path d="M4,4.5 L7,7.5 L4,10.5 L1,7.5 Z" fill="#2ab0f0"/>
<path d="M11,4.5 L14,7.5 L11,10.5 L8,7.5 Z" fill="#20c040"/>
<path d="M7.5,8 L10.5,11 L7.5,14 L4.5,11 Z" fill="#e8306a"/>
<text x="18.0" y="12.3" font-size="10" fill="#061214" textLength="341.0" lengthAdjust="spacingAndGlyphs" stroke="#061214" stroke-width="0.3">Calman 2022 Calman Ultimate for Business 245 Days Remaining  - Analysis/SDR Toolkit</text>
<rect x="1828" y="7" width="10" height="1" fill="#111"/>
<rect x="1863" y="5" width="7" height="7" fill="none" stroke="#111" stroke-width="1"/><path d="M1865,5 V3.5 H1871.5 V10 H1870" fill="none" stroke="#111" stroke-width="1"/>
<path d="M1896,3 L1905,12 M1905,3 L1896,12" stroke="#111" stroke-width="1.1"/>
<path d="M25.8,19.2 L34.4,27.8 L25.8,36.4 L17.2,27.8 Z" fill="none" stroke="#fff" stroke-width="1.7"/>
<path d="M25.80,22.60 L27.90,24.70 L25.80,26.80 L23.70,24.70 Z" fill="#fff"/>
<path d="M28.90,25.70 L31.00,27.80 L28.90,29.90 L26.80,27.80 Z" fill="#fff"/>
<path d="M25.80,28.80 L27.90,30.90 L25.80,33.00 L23.70,30.90 Z" fill="#fff"/>
<path d="M22.70,25.70 L24.80,27.80 L22.70,29.90 L20.60,27.80 Z" fill="#fff"/>
<text x="37.5" y="32.8" font-size="18.5" fill="#fff" textLength="64.0" lengthAdjust="spacingAndGlyphs" >calman</text>
<circle cx="124.4" cy="27.8" r="7" fill="#c01010"/><path d="M120.5,26 H128.3 L124.4,30.5 Z" fill="#fff"/>
<rect x="142" y="26.5" width="1778" height="4" fill="url(#rainbow)"/>
<path d="M0,43 H145 Q149.5,43 149.5,47.5 V1058 H0 Z" fill="#585858"/>
<circle cx="14" cy="54" r="7" fill="#4e4e4e"/><circle cx="13.8" cy="53.5" r="3.2" fill="url(#knob)"/>
<circle cx="135.5" cy="54" r="7" fill="#4e4e4e"/><path d="M132.5,54 L137,50 V58 Z" fill="#fff"/>
<text x="7.0" y="76.0" font-size="10" fill="#e4e4e4" textLength="47.5" lengthAdjust="spacingAndGlyphs" >SDR Toolkit</text>
<rect x="7" y="79" width="136" height="188" fill="#212121"/>
<path d="M13,91.6 L17,87.6 V91.6 Z" fill="#555"/>
<text x="22.0" y="92.6" font-size="8.5" fill="#fff" font-weight="bold" textLength="35.5" lengthAdjust="spacingAndGlyphs" >Welcome</text>
<text x="31.5" y="104.7" font-size="8.5" fill="#f2f2f2" >Welcome</text>
<text x="31.5" y="115.8" font-size="8.5" fill="#f2f2f2" >Options</text>
<path d="M13,125.89999999999999 L17,121.89999999999999 V125.89999999999999 Z" fill="#555"/>
<text x="22.0" y="126.9" font-size="8.5" fill="#fff" font-weight="bold" textLength="31.0" lengthAdjust="spacingAndGlyphs" >Analysis</text>
<text x="31.5" y="138.3" font-size="8.5" fill="#f2f2f2" textLength="56.5" lengthAdjust="spacingAndGlyphs" >Dynamic Range</text>
<text x="31.5" y="149.4" font-size="8.5" fill="#f2f2f2" textLength="54.5" lengthAdjust="spacingAndGlyphs" >Grayscale - 2pt</text>
<text x="31.5" y="160.5" font-size="8.5" fill="#f2f2f2" textLength="62.5" lengthAdjust="spacingAndGlyphs" >Grayscale - Multi</text>
<text x="31.5" y="171.6" font-size="8.5" fill="#f2f2f2" >Color Gamut</text>
<text x="31.5" y="182.7" font-size="8.5" fill="#f2f2f2" textLength="26.5" lengthAdjust="spacingAndGlyphs" >3D LUT</text>
<text x="31.5" y="193.8" font-size="8.5" fill="#f2f2f2" textLength="49.5" lengthAdjust="spacingAndGlyphs" >ColorChecker</text>
<rect x="31" y="196.5" width="68" height="11" fill="#e8e8e8"/>
<text x="31.5" y="204.9" font-size="8.5" fill="#333" textLength="66.5" lengthAdjust="spacingAndGlyphs" >Saturation Sweeps</text>
<text x="31.5" y="216.0" font-size="8.5" fill="#f2f2f2" textLength="69.5" lengthAdjust="spacingAndGlyphs" >Luminance Sweeps</text>
<text x="31.5" y="227.1" font-size="8.5" fill="#f2f2f2" textLength="66.0" lengthAdjust="spacingAndGlyphs" >Screen Uniformity</text>
<text x="31.5" y="238.2" font-size="8.5" fill="#f2f2f2" textLength="64.5" lengthAdjust="spacingAndGlyphs" >Screen Angularity</text>
<text x="31.5" y="249.3" font-size="8.5" fill="#f2f2f2" textLength="57.0" lengthAdjust="spacingAndGlyphs" >Screen Stability</text>
<text x="31.5" y="260.4" font-size="8.5" fill="#f2f2f2" textLength="73.0" lengthAdjust="spacingAndGlyphs" >Spectral Power Dist.</text>
<rect x="149.5" y="66" width="1.5" height="992" fill="#2a2a2a"/>
<path d="M150,66 V47 Q150,43 154,43 H215 Q219,43 219,47 V66 Z" fill="#3a3a3a"/>
<path d="M150.6,66 V47.5 Q150.6,43.6 154.5,43.6 H214.5 Q218.4,43.6 218.4,47.5 V66" fill="none" stroke="#6e6e6e" stroke-width="1.2"/>
<rect x="193" y="43.5" width="1.5" height="22.5" fill="#5e5e5e"/>
<text x="154.8" y="58.2" font-size="9" fill="#f0f0f0" textLength="34.5" lengthAdjust="spacingAndGlyphs" stroke="#f0f0f0" stroke-width="0.25">History 1</text>
<circle cx="205.5" cy="56" r="7" fill="#3a3a3a" stroke="#444" stroke-width="0.5"/>
<path d="M202.5,56 H208.5 M205.5,53 V59" stroke="#888" stroke-width="0.8"/>
<path d="M1551,66 V45 Q1551,43 1553,43 H1655.5 Q1657.5,43 1657.5,45 V66 Z" fill="url(#ctl)"/>
<rect x="1551" y="44" width="3.5" height="22" fill="#30e030"/>
<text x="1557.5" y="52.8" font-size="8.5" fill="#f0f0f0" textLength="49.0" lengthAdjust="spacingAndGlyphs" >X-Rite i1Pro 2</text>
<text x="1557.5" y="63.5" font-size="8.5" fill="#f0f0f0" textLength="41.5" lengthAdjust="spacingAndGlyphs" >Direct View</text>
<circle cx="1616.8" cy="55" r="7" fill="url(#knobd)"/>
<path d="M1612.8,53.5 H1620.8 L1616.8,57.5 Z" fill="#fff"/>
<rect x="1631.5" y="44" width="1" height="22" fill="#555"/>
<circle cx="1646.5" cy="54.5" r="9.5" fill="#0000f0" stroke="#e8e8ff" stroke-width="0.8"/>
<text x="1646.5" y="57.3" font-size="7" fill="#fff" text-anchor="middle" font-weight="bold" >233</text>
<path d="M1662.5,66 V45 Q1662.5,43 1664.5,43 H1757.5 Q1759.5,43 1759.5,45 V66 Z" fill="url(#ctl)"/>
<rect x="1662.5" y="44" width="3.5" height="22" fill="#f0f000"/>
<text x="1669.0" y="52.8" font-size="8.5" fill="#f0f0f0" textLength="25.0" lengthAdjust="spacingAndGlyphs" >Source</text>
<circle cx="1748" cy="55.5" r="7" fill="url(#knobd)"/>
<path d="M1744,54.0 H1752 L1748,58.0 Z" fill="#fff"/>
<path d="M1764.5,66 V45 Q1764.5,43 1766.5,43 H1869.5 Q1871.5,43 1871.5,45 V66 Z" fill="url(#ctl)"/>
<rect x="1764.5" y="44" width="3.5" height="22" fill="#f0f000"/>
<text x="1771.0" y="52.8" font-size="8.5" fill="#f0f0f0" textLength="79.0" lengthAdjust="spacingAndGlyphs" >Direct Display Control</text>
<circle cx="1860" cy="55.5" r="7" fill="url(#knobd)"/>
<path d="M1856,54.0 H1864 L1860,58.0 Z" fill="#fff"/>
<rect x="1874.5" y="43.5" width="24.5" height="21.5" rx="3" fill="url(#gbtn)" stroke="#4a4a4a" stroke-width="0.8"/>
<circle cx="1886.8" cy="54.2" r="7.2" fill="#777"/>
<rect x="1885.60" y="48.00" width="2.4" height="3" fill="#e6e6e6" transform="rotate(0 1886.8 54.2)"/><rect x="1885.60" y="48.00" width="2.4" height="3" fill="#e6e6e6" transform="rotate(45 1886.8 54.2)"/><rect x="1885.60" y="48.00" width="2.4" height="3" fill="#e6e6e6" transform="rotate(90 1886.8 54.2)"/><rect x="1885.60" y="48.00" width="2.4" height="3" fill="#e6e6e6" transform="rotate(135 1886.8 54.2)"/><rect x="1885.60" y="48.00" width="2.4" height="3" fill="#e6e6e6" transform="rotate(180 1886.8 54.2)"/><rect x="1885.60" y="48.00" width="2.4" height="3" fill="#e6e6e6" transform="rotate(225 1886.8 54.2)"/><rect x="1885.60" y="48.00" width="2.4" height="3" fill="#e6e6e6" transform="rotate(270 1886.8 54.2)"/><rect x="1885.60" y="48.00" width="2.4" height="3" fill="#e6e6e6" transform="rotate(315 1886.8 54.2)"/>
<circle cx="1886.8" cy="54.2" r="4.2" fill="#e6e6e6"/><circle cx="1886.8" cy="54.2" r="2.1" fill="#777"/>
<rect x="1900" y="43.5" width="22" height="21.5" rx="3" fill="url(#gbtn)" stroke="#4a4a4a" stroke-width="0.8"/>
<circle cx="1910" cy="54" r="6.5" fill="#6a6a6a"/><path d="M1907.5,54 L1911.5,50.5 V57.5 Z" fill="#fff"/>
<text x="159.0" y="159.2" font-size="46.5" fill="#f2f2f2" textLength="352.0" lengthAdjust="spacingAndGlyphs" >Saturation Sweeps</text>
<text x="281.8" y="215.5" font-size="22" fill="#f4f4f4" textLength="113.6" lengthAdjust="spacingAndGlyphs" >dE Formula:</text>
<rect x="405" y="194.4" width="141" height="25.6" fill="url(#dd)"/>
<text x="409.7" y="215.2" font-size="17" fill="#f4f4f4" textLength="36.3" lengthAdjust="spacingAndGlyphs" >2000</text>
<path d="M531.3,205 H541.1 L536.2,211 Z" fill="#111"/>
<text x="743.7" y="150.5" font-size="22.5" fill="#f4f4f4" textLength="63.4" lengthAdjust="spacingAndGlyphs" >Levels:</text>
<svg x="815.8" y="128.9" width="359.1" height="26.1" overflow="hidden"><rect width="359.1" height="26.1" fill="url(#dd)"/>
<text x="5.2" y="22.0" font-size="17" fill="#f4f4f4" textLength="94.0" lengthAdjust="spacingAndGlyphs" >20% Sweeps</text>
<path d="M343.8,10.1 H353.3 L348.55,16.8 Z" fill="#111"/></svg>
<text x="342.1" y="248.7" font-size="15" fill="#dcdcdc" text-anchor="middle" >DeltaE 2000</text>
<rect x="195.5" y="255" width="331.0" height="410" fill="#232323"/>
<rect x="238.55" y="255" width="1.5" height="410" fill="#8e8e8e"/>
<rect x="282.35" y="255" width="1.5" height="410" fill="#8e8e8e"/>
<rect x="326.15" y="255" width="1.5" height="410" fill="#8e8e8e"/>
<rect x="369.95" y="255" width="1.5" height="410" fill="#8e8e8e"/>
<rect x="413.75" y="255" width="1.5" height="410" fill="#8e8e8e"/>
<rect x="457.55" y="255" width="1.5" height="410" fill="#8e8e8e"/>
<rect x="501.35" y="255" width="1.5" height="410" fill="#8e8e8e"/>
<rect x="194.75" y="254.25" width="332.5" height="411.5" fill="none" stroke="#a6a6a6" stroke-width="1.5"/>
<rect x="189.5" y="254.25" width="6" height="1.5" fill="#a6a6a6"/>
<rect x="189.5" y="322.58" width="6" height="1.5" fill="#a6a6a6"/>
<rect x="189.5" y="390.91" width="6" height="1.5" fill="#a6a6a6"/>
<rect x="189.5" y="459.24" width="6" height="1.5" fill="#a6a6a6"/>
<rect x="189.5" y="527.57" width="6" height="1.5" fill="#a6a6a6"/>
<rect x="189.5" y="595.90" width="6" height="1.5" fill="#a6a6a6"/>
<rect x="189.5" y="664.23" width="6" height="1.5" fill="#a6a6a6"/>
<rect x="194.75" y="665" width="1.5" height="6" fill="#a6a6a6"/>
<text x="195.5" y="687.0" font-size="16" fill="#d8d8d8" text-anchor="middle" textLength="8.4" lengthAdjust="spacingAndGlyphs" >0</text>
<rect x="238.55" y="665" width="1.5" height="6" fill="#a6a6a6"/>
<text x="239.3" y="687.0" font-size="16" fill="#d8d8d8" text-anchor="middle" textLength="8.4" lengthAdjust="spacingAndGlyphs" >2</text>
<rect x="282.35" y="665" width="1.5" height="6" fill="#a6a6a6"/>
<text x="283.1" y="687.0" font-size="16" fill="#d8d8d8" text-anchor="middle" textLength="8.4" lengthAdjust="spacingAndGlyphs" >4</text>
<rect x="326.15" y="665" width="1.5" height="6" fill="#a6a6a6"/>
<text x="326.9" y="687.0" font-size="16" fill="#d8d8d8" text-anchor="middle" textLength="8.4" lengthAdjust="spacingAndGlyphs" >6</text>
<rect x="369.95" y="665" width="1.5" height="6" fill="#a6a6a6"/>
<text x="370.7" y="687.0" font-size="16" fill="#d8d8d8" text-anchor="middle" textLength="8.4" lengthAdjust="spacingAndGlyphs" >8</text>
<rect x="413.75" y="665" width="1.5" height="6" fill="#a6a6a6"/>
<text x="414.5" y="687.0" font-size="16" fill="#d8d8d8" text-anchor="middle" textLength="17.5" lengthAdjust="spacingAndGlyphs" >10</text>
<rect x="457.55" y="665" width="1.5" height="6" fill="#a6a6a6"/>
<text x="458.3" y="687.0" font-size="16" fill="#d8d8d8" text-anchor="middle" textLength="17.5" lengthAdjust="spacingAndGlyphs" >12</text>
<rect x="501.35" y="665" width="1.5" height="6" fill="#a6a6a6"/>
<text x="502.1" y="687.0" font-size="16" fill="#d8d8d8" text-anchor="middle" textLength="17.5" lengthAdjust="spacingAndGlyphs" >14</text>
<text x="194.6" y="295.2" font-size="16" fill="#d8d8d8" text-anchor="end" textLength="37.3" lengthAdjust="spacingAndGlyphs" >100%</text>
<text x="194.6" y="363.5" font-size="16" fill="#d8d8d8" text-anchor="end" textLength="29.1" lengthAdjust="spacingAndGlyphs" >80%</text>
<text x="194.6" y="431.9" font-size="16" fill="#d8d8d8" text-anchor="end" textLength="29.1" lengthAdjust="spacingAndGlyphs" >60%</text>
<text x="194.6" y="500.2" font-size="16" fill="#d8d8d8" text-anchor="end" textLength="29.1" lengthAdjust="spacingAndGlyphs" >40%</text>
<text x="194.6" y="568.5" font-size="16" fill="#d8d8d8" text-anchor="end" textLength="29.1" lengthAdjust="spacingAndGlyphs" >20%</text>
<text x="194.6" y="636.8" font-size="16" fill="#d8d8d8" text-anchor="end" textLength="25.8" lengthAdjust="spacingAndGlyphs" >100</text>
<rect x="196.3" y="261.50" width="26.00" height="7.5" fill="#000"/>
<rect x="196.3" y="262.50" width="23.50" height="5" fill="url(#hb1)"/>
<rect x="196.3" y="268.70" width="30.60" height="7.5" fill="#000"/>
<rect x="196.3" y="269.70" width="28.10" height="5" fill="url(#hb2)"/>
<rect x="196.3" y="275.90" width="27.60" height="7.5" fill="#000"/>
<rect x="196.3" y="276.90" width="25.10" height="5" fill="url(#hb3)"/>
<rect x="196.3" y="283.10" width="21.20" height="7.5" fill="#000"/>
<rect x="196.3" y="284.10" width="18.70" height="5" fill="url(#hb4)"/>
<rect x="196.3" y="290.30" width="6.80" height="7.5" fill="#000"/>
<rect x="196.3" y="291.30" width="4.30" height="5" fill="url(#hb5)"/>
<rect x="196.3" y="297.50" width="9.80" height="7.5" fill="#000"/>
<rect x="196.3" y="298.50" width="7.30" height="5" fill="url(#hb6)"/>
<rect x="196.3" y="329.83" width="13.20" height="7.5" fill="#000"/>
<rect x="196.3" y="330.83" width="10.70" height="5" fill="url(#hb7)"/>
<rect x="196.3" y="337.03" width="27.60" height="7.5" fill="#000"/>
<rect x="196.3" y="338.03" width="25.10" height="5" fill="url(#hb8)"/>
<rect x="196.3" y="344.23" width="14.70" height="7.5" fill="#000"/>
<rect x="196.3" y="345.23" width="12.20" height="5" fill="url(#hb9)"/>
<rect x="196.3" y="351.43" width="24.70" height="7.5" fill="#000"/>
<rect x="196.3" y="352.43" width="22.20" height="5" fill="url(#hb10)"/>
<rect x="196.3" y="358.63" width="9.80" height="7.5" fill="#000"/>
<rect x="196.3" y="359.63" width="7.30" height="5" fill="url(#hb11)"/>
<rect x="196.3" y="365.83" width="6.80" height="7.5" fill="#000"/>
<rect x="196.3" y="366.83" width="4.30" height="5" fill="url(#hb12)"/>
<rect x="196.3" y="398.16" width="9.80" height="7.5" fill="#000"/>
<rect x="196.3" y="399.16" width="7.30" height="5" fill="url(#hb13)"/>
<rect x="196.3" y="405.36" width="29.20" height="7.5" fill="#000"/>
<rect x="196.3" y="406.36" width="26.70" height="5" fill="url(#hb14)"/>
<rect x="196.3" y="412.56" width="26.00" height="7.5" fill="#000"/>
<rect x="196.3" y="413.56" width="23.50" height="5" fill="url(#hb15)"/>
<rect x="196.3" y="419.76" width="24.70" height="7.5" fill="#000"/>
<rect x="196.3" y="420.76" width="22.20" height="5" fill="url(#hb16)"/>
<rect x="196.3" y="426.96" width="24.70" height="7.5" fill="#000"/>
<rect x="196.3" y="427.96" width="22.20" height="5" fill="url(#hb17)"/>
<rect x="196.3" y="434.16" width="9.80" height="7.5" fill="#000"/>
<rect x="196.3" y="435.16" width="7.30" height="5" fill="url(#hb18)"/>
<rect x="196.3" y="466.49" width="13.10" height="7.5" fill="#000"/>
<rect x="196.3" y="467.49" width="10.60" height="5" fill="url(#hb19)"/>
<rect x="196.3" y="473.69" width="29.20" height="7.5" fill="#000"/>
<rect x="196.3" y="474.69" width="26.70" height="5" fill="url(#hb20)"/>
<rect x="196.3" y="480.89" width="39.40" height="7.5" fill="#000"/>
<rect x="196.3" y="481.89" width="36.90" height="5" fill="url(#hb21)"/>
<rect x="196.3" y="488.09" width="23.40" height="7.5" fill="#000"/>
<rect x="196.3" y="489.09" width="20.90" height="5" fill="url(#hb22)"/>
<rect x="196.3" y="495.29" width="31.40" height="7.5" fill="#000"/>
<rect x="196.3" y="496.29" width="28.90" height="5" fill="url(#hb23)"/>
<rect x="196.3" y="502.49" width="12.10" height="7.5" fill="#000"/>
<rect x="196.3" y="503.49" width="9.60" height="5" fill="url(#hb24)"/>
<rect x="196.3" y="534.82" width="27.90" height="7.5" fill="#000"/>
<rect x="196.3" y="535.82" width="25.40" height="5" fill="url(#hb25)"/>
<rect x="196.3" y="542.02" width="25.90" height="7.5" fill="#000"/>
<rect x="196.3" y="543.02" width="23.40" height="5" fill="url(#hb26)"/>
<rect x="196.3" y="549.22" width="30.80" height="7.5" fill="#000"/>
<rect x="196.3" y="550.22" width="28.30" height="5" fill="url(#hb27)"/>
<rect x="196.3" y="556.42" width="17.60" height="7.5" fill="#000"/>
<rect x="196.3" y="557.42" width="15.10" height="5" fill="url(#hb28)"/>
<rect x="196.3" y="563.62" width="35.20" height="7.5" fill="#000"/>
<rect x="196.3" y="564.62" width="32.70" height="5" fill="url(#hb29)"/>
<rect x="196.3" y="570.82" width="12.10" height="7.5" fill="#000"/>
<rect x="196.3" y="571.82" width="9.60" height="5" fill="url(#hb30)"/>
<rect x="196.3" y="645.90" width="40.40" height="7.5" fill="#000"/>
<rect x="196.3" y="646.90" width="37.90" height="5" fill="url(#hb31)"/>
<rect x="582.6" y="197.8" width="153.80000000000007" height="299.2" fill="#232323"/>
<rect x="582.6" y="246.92" width="153.80000000000007" height="1.5" fill="#8a8a8a"/>
<rect x="582.6" y="296.78" width="153.80000000000007" height="1.5" fill="#8a8a8a"/>
<rect x="582.6" y="346.65" width="153.80000000000007" height="1.5" fill="#8a8a8a"/>
<rect x="582.6" y="396.52" width="153.80000000000007" height="1.5" fill="#8a8a8a"/>
<rect x="582.6" y="446.38" width="153.80000000000007" height="1.5" fill="#8a8a8a"/>
<rect x="582.6" y="197.8" width="153.80000000000007" height="299.2" fill="none" stroke="#a4a4a4" stroke-width="1.6"/>
<rect x="576.1" y="197.05" width="6.5" height="1.5" fill="#a4a4a4"/>
<text x="575.6" y="204.0" font-size="15" fill="#d6d6d6" text-anchor="end" textLength="16.0" lengthAdjust="spacingAndGlyphs" >15</text>
<rect x="576.1" y="246.92" width="6.5" height="1.5" fill="#a4a4a4"/>
<text x="575.6" y="253.9" font-size="15" fill="#d6d6d6" text-anchor="end" textLength="16.0" lengthAdjust="spacingAndGlyphs" >10</text>
<rect x="576.1" y="296.78" width="6.5" height="1.5" fill="#a4a4a4"/>
<text x="575.6" y="303.7" font-size="15" fill="#d6d6d6" text-anchor="end" textLength="8.0" lengthAdjust="spacingAndGlyphs" >5</text>
<rect x="576.1" y="346.65" width="6.5" height="1.5" fill="#a4a4a4"/>
<text x="575.6" y="353.6" font-size="15" fill="#d6d6d6" text-anchor="end" textLength="8.0" lengthAdjust="spacingAndGlyphs" >0</text>
<rect x="576.1" y="396.52" width="6.5" height="1.5" fill="#a4a4a4"/>
<text x="575.6" y="403.5" font-size="15" fill="#d6d6d6" text-anchor="end" textLength="16.0" lengthAdjust="spacingAndGlyphs" >-5</text>
<rect x="576.1" y="446.38" width="6.5" height="1.5" fill="#a4a4a4"/>
<text x="575.6" y="453.3" font-size="15" fill="#d6d6d6" text-anchor="end" >-10</text>
<rect x="576.1" y="496.25" width="6.5" height="1.5" fill="#a4a4a4"/>
<text x="575.6" y="503.2" font-size="15" fill="#d6d6d6" text-anchor="end" >-15</text>
<rect x="581.8000000000001" y="497.0" width="1.6" height="6" fill="#a4a4a4"/><rect x="735.6000000000001" y="497.0" width="1.6" height="6" fill="#a4a4a4"/>
<text x="660.0" y="513.5" font-size="15" fill="#dcdcdc" text-anchor="middle" >100%</text>
<text x="645.3" y="191.4" font-size="15.5" fill="#dcdcdc" text-anchor="middle" >DeltaL</text>
<rect x="598.1" y="346.20" width="122" height="2.4" fill="#050505"/>
<rect x="791.95" y="197.8" width="153.79999999999995" height="299.2" fill="#232323"/>
<rect x="791.95" y="246.92" width="153.79999999999995" height="1.5" fill="#8a8a8a"/>
<rect x="791.95" y="296.78" width="153.79999999999995" height="1.5" fill="#8a8a8a"/>
<rect x="791.95" y="346.65" width="153.79999999999995" height="1.5" fill="#8a8a8a"/>
<rect x="791.95" y="396.52" width="153.79999999999995" height="1.5" fill="#8a8a8a"/>
<rect x="791.95" y="446.38" width="153.79999999999995" height="1.5" fill="#8a8a8a"/>
<rect x="791.95" y="197.8" width="153.79999999999995" height="299.2" fill="none" stroke="#a4a4a4" stroke-width="1.6"/>
<rect x="785.45" y="197.05" width="6.5" height="1.5" fill="#a4a4a4"/>
<text x="785.0" y="204.0" font-size="15" fill="#d6d6d6" text-anchor="end" textLength="16.0" lengthAdjust="spacingAndGlyphs" >15</text>
<rect x="785.45" y="246.92" width="6.5" height="1.5" fill="#a4a4a4"/>
<text x="785.0" y="253.9" font-size="15" fill="#d6d6d6" text-anchor="end" textLength="16.0" lengthAdjust="spacingAndGlyphs" >10</text>
<rect x="785.45" y="296.78" width="6.5" height="1.5" fill="#a4a4a4"/>
<text x="785.0" y="303.7" font-size="15" fill="#d6d6d6" text-anchor="end" textLength="8.0" lengthAdjust="spacingAndGlyphs" >5</text>
<rect x="785.45" y="346.65" width="6.5" height="1.5" fill="#a4a4a4"/>
<text x="785.0" y="353.6" font-size="15" fill="#d6d6d6" text-anchor="end" textLength="8.0" lengthAdjust="spacingAndGlyphs" >0</text>
<rect x="785.45" y="396.52" width="6.5" height="1.5" fill="#a4a4a4"/>
<text x="785.0" y="403.5" font-size="15" fill="#d6d6d6" text-anchor="end" textLength="16.0" lengthAdjust="spacingAndGlyphs" >-5</text>
<rect x="785.45" y="446.38" width="6.5" height="1.5" fill="#a4a4a4"/>
<text x="785.0" y="453.3" font-size="15" fill="#d6d6d6" text-anchor="end" >-10</text>
<rect x="785.45" y="496.25" width="6.5" height="1.5" fill="#a4a4a4"/>
<text x="785.0" y="503.2" font-size="15" fill="#d6d6d6" text-anchor="end" >-15</text>
<rect x="791.1500000000001" y="497.0" width="1.6" height="6" fill="#a4a4a4"/><rect x="944.95" y="497.0" width="1.6" height="6" fill="#a4a4a4"/>
<text x="869.4" y="513.5" font-size="15" fill="#dcdcdc" text-anchor="middle" >100%</text>
<text x="854.6" y="191.4" font-size="15.5" fill="#dcdcdc" text-anchor="middle" textLength="45.8" lengthAdjust="spacingAndGlyphs" >DeltaC</text>
<rect x="807.95" y="346.4" width="122.6" height="10.2" fill="#000"/>
<rect x="807.95" y="346.5" width="120.8" height="8.5" fill="url(#ybar)"/>
<rect x="1001.3" y="197.8" width="153.79999999999995" height="299.2" fill="#232323"/>
<rect x="1001.3" y="246.92" width="153.79999999999995" height="1.5" fill="#8a8a8a"/>
<rect x="1001.3" y="296.78" width="153.79999999999995" height="1.5" fill="#8a8a8a"/>
<rect x="1001.3" y="346.65" width="153.79999999999995" height="1.5" fill="#8a8a8a"/>
<rect x="1001.3" y="396.52" width="153.79999999999995" height="1.5" fill="#8a8a8a"/>
<rect x="1001.3" y="446.38" width="153.79999999999995" height="1.5" fill="#8a8a8a"/>
<rect x="1001.3" y="197.8" width="153.79999999999995" height="299.2" fill="none" stroke="#a4a4a4" stroke-width="1.6"/>
<rect x="994.8" y="197.05" width="6.5" height="1.5" fill="#a4a4a4"/>
<text x="994.3" y="204.0" font-size="15" fill="#d6d6d6" text-anchor="end" textLength="16.0" lengthAdjust="spacingAndGlyphs" >15</text>
<rect x="994.8" y="246.92" width="6.5" height="1.5" fill="#a4a4a4"/>
<text x="994.3" y="253.9" font-size="15" fill="#d6d6d6" text-anchor="end" textLength="16.0" lengthAdjust="spacingAndGlyphs" >10</text>
<rect x="994.8" y="296.78" width="6.5" height="1.5" fill="#a4a4a4"/>
<text x="994.3" y="303.7" font-size="15" fill="#d6d6d6" text-anchor="end" textLength="8.0" lengthAdjust="spacingAndGlyphs" >5</text>
<rect x="994.8" y="346.65" width="6.5" height="1.5" fill="#a4a4a4"/>
<text x="994.3" y="353.6" font-size="15" fill="#d6d6d6" text-anchor="end" textLength="8.0" lengthAdjust="spacingAndGlyphs" >0</text>
<rect x="994.8" y="396.52" width="6.5" height="1.5" fill="#a4a4a4"/>
<text x="994.3" y="403.5" font-size="15" fill="#d6d6d6" text-anchor="end" textLength="16.0" lengthAdjust="spacingAndGlyphs" >-5</text>
<rect x="994.8" y="446.38" width="6.5" height="1.5" fill="#a4a4a4"/>
<text x="994.3" y="453.3" font-size="15" fill="#d6d6d6" text-anchor="end" >-10</text>
<rect x="994.8" y="496.25" width="6.5" height="1.5" fill="#a4a4a4"/>
<text x="994.3" y="503.2" font-size="15" fill="#d6d6d6" text-anchor="end" >-15</text>
<rect x="1000.5" y="497.0" width="1.6" height="6" fill="#a4a4a4"/><rect x="1154.3" y="497.0" width="1.6" height="6" fill="#a4a4a4"/>
<text x="1078.7" y="513.5" font-size="15" fill="#dcdcdc" text-anchor="middle" >100%</text>
<text x="1064.0" y="191.4" font-size="15.5" fill="#dcdcdc" text-anchor="middle" textLength="45.8" lengthAdjust="spacingAndGlyphs" >DeltaH</text>
<rect x="1018.0999999999999" y="339.79999999999995" width="122.2" height="8.2" fill="#000"/>
<rect x="1018.0999999999999" y="340.2" width="120.6" height="6.2" fill="url(#ybar)"/>
<rect x="548" y="524.7" width="628" height="172.6" fill="#000"/>
<rect x="570.75" y="533" width="103.8" height="139" fill="#c3c3a5" stroke="#f4f4f4" stroke-width="1.6"/>
<text x="623.0" y="689.3" font-size="14" fill="#fff" text-anchor="middle" textLength="24.7" lengthAdjust="spacingAndGlyphs" >20%</text>
<rect x="693.05" y="533" width="103.8" height="139" fill="#c2c085" stroke="#f4f4f4" stroke-width="1.6"/>
<text x="745.3" y="689.3" font-size="14" fill="#fff" text-anchor="middle" textLength="24.7" lengthAdjust="spacingAndGlyphs" >40%</text>
<rect x="816.05" y="533" width="103.8" height="139" fill="#c2c06b" stroke="#f4f4f4" stroke-width="1.6"/>
<text x="868.3" y="689.3" font-size="14" fill="#fff" text-anchor="middle" textLength="24.7" lengthAdjust="spacingAndGlyphs" >60%</text>
<rect x="938.45" y="533" width="103.8" height="139" fill="#c2be4d" stroke="#f4f4f4" stroke-width="1.6"/>
<text x="990.7" y="689.3" font-size="14" fill="#fff" text-anchor="middle" textLength="24.7" lengthAdjust="spacingAndGlyphs" >80%</text>
<rect x="1061.45" y="533" width="103.8" height="139" fill="#c3c000" stroke="#f4f4f4" stroke-width="1.6"/>
<text x="1113.7" y="689.3" font-size="14" fill="#fff" text-anchor="middle" textLength="32.5" lengthAdjust="spacingAndGlyphs" >100%</text>
<text x="0" y="0" font-size="13.5" fill="#fff" transform="translate(562.2,563) rotate(-90)" text-anchor="middle" textLength="37.4" lengthAdjust="spacingAndGlyphs">Actual</text>
<text x="0" y="0" font-size="13.5" fill="#fff" transform="translate(562.2,642) rotate(-90)" text-anchor="middle" textLength="36" lengthAdjust="spacingAndGlyphs">Target</text>
<rect x="1183" y="120.2" width="737" height="591.4" fill="#1c1c1c"/>
<rect x="1190" y="127.5" width="722" height="577.5" fill="#333"/>
<text x="1551.7" y="147.3" font-size="15" fill="#dcdcdc" text-anchor="middle" >CIE 1976 u'v'</text>
<rect x="1230.0" y="152.3" width="677.5" height="522.5" fill="#232323"/>
<g clip-path="url(#plotclip)"><g clip-path="url(#locclip)"><rect x="1259.0" y="162.00" width="70.0" height="2.00" fill="url(#go0)"/><rect x="1250.0" y="164.00" width="104.0" height="2.00" fill="url(#go1)"/><rect x="1246.0" y="166.00" width="129.0" height="2.00" fill="url(#go2)"/><rect x="1242.0" y="168.00" width="152.0" height="2.00" fill="url(#go3)"/><rect x="1239.0" y="170.00" width="171.0" height="2.00" fill="url(#go4)"/><rect x="1238.0" y="172.00" width="190.0" height="2.00" fill="url(#go5)"/><rect x="1235.0" y="174.00" width="212.0" height="2.00" fill="url(#go6)"/><rect x="1234.0" y="176.00" width="228.0" height="2.00" fill="url(#go7)"/><rect x="1233.0" y="178.00" width="250.0" height="2.00" fill="url(#go8)"/><rect x="1233.0" y="180.00" width="267.0" height="2.00" fill="url(#go9)"/><rect x="1232.0" y="182.00" width="285.0" height="2.00" fill="url(#go10)"/><rect x="1231.0" y="184.00" width="298.0" height="2.00" fill="url(#go11)"/><rect x="1230.0" y="186.00" width="318.0" height="2.00" fill="url(#go12)"/><rect x="1230.0" y="188.00" width="337.0" height="2.00" fill="url(#go13)"/><rect x="1230.0" y="190.00" width="357.0" height="2.00" fill="url(#go14)"/><rect x="1230.0" y="192.00" width="371.0" height="2.00" fill="url(#go15)"/><rect x="1230.0" y="194.00" width="391.0" height="2.00" fill="url(#go16)"/><rect x="1230.0" y="196.00" width="405.0" height="2.00" fill="url(#go17)"/><rect x="1230.0" y="198.00" width="426.0" height="2.00" fill="url(#go18)"/><rect x="1230.0" y="200.00" width="439.0" height="2.00" fill="url(#go19)"/><rect x="1230.0" y="202.00" width="459.0" height="2.00" fill="url(#go20)"/><rect x="1230.0" y="204.00" width="479.0" height="2.00" fill="url(#go21)"/><rect x="1230.0" y="206.00" width="491.0" height="2.00" fill="url(#go22)"/><rect x="1230.0" y="208.00" width="510.0" height="2.00" fill="url(#go23)"/><rect x="1230.0" y="210.00" width="527.0" height="2.00" fill="url(#go24)"/><rect x="1230.0" y="212.00" width="549.0" height="2.00" fill="url(#go25)"/><rect x="1230.0" y="214.00" width="564.0" height="2.00" fill="url(#go26)"/><rect x="1230.0" y="216.00" width="582.0" height="2.00" fill="url(#go27)"/><rect x="1230.0" y="218.00" width="599.0" height="2.00" fill="url(#go28)"/><rect x="1230.0" y="220.00" width="616.0" height="2.00" fill="url(#go29)"/><rect x="1230.0" y="222.00" width="634.0" height="2.00" fill="url(#go30)"/><rect x="1230.0" y="224.00" width="653.0" height="2.00" fill="url(#go31)"/><rect x="1230.0" y="226.00" width="671.0" height="2.00" fill="url(#go32)"/><rect x="1230.0" y="228.00" width="677.5" height="2.00" fill="url(#go33)"/><rect x="1231.0" y="230.00" width="676.5" height="2.00" fill="url(#go34)"/><rect x="1231.0" y="232.00" width="676.5" height="2.00" fill="url(#go35)"/><rect x="1232.0" y="234.00" width="675.5" height="2.00" fill="url(#go36)"/><rect x="1232.0" y="236.00" width="675.5" height="2.00" fill="url(#go37)"/><rect x="1233.0" y="238.00" width="674.5" height="2.00" fill="url(#go38)"/><rect x="1233.0" y="240.00" width="674.5" height="2.00" fill="url(#go39)"/><rect x="1234.0" y="242.00" width="673.5" height="2.00" fill="url(#go40)"/><rect x="1234.0" y="244.00" width="673.5" height="2.00" fill="url(#go41)"/><rect x="1235.0" y="246.00" width="672.5" height="2.00" fill="url(#go42)"/><rect x="1235.0" y="248.00" width="672.5" height="2.00" fill="url(#go43)"/><rect x="1236.0" y="250.00" width="671.5" height="2.00" fill="url(#go44)"/><rect x="1236.0" y="252.00" width="671.5" height="2.00" fill="url(#go45)"/><rect x="1237.0" y="254.00" width="670.5" height="2.00" fill="url(#go46)"/><rect x="1238.0" y="256.00" width="669.5" height="2.00" fill="url(#go47)"/><rect x="1238.0" y="258.00" width="669.5" height="2.00" fill="url(#go48)"/><rect x="1239.0" y="260.00" width="668.5" height="2.00" fill="url(#go49)"/><rect x="1239.0" y="262.00" width="668.5" height="2.00" fill="url(#go50)"/><rect x="1240.0" y="264.00" width="667.0" height="2.00" fill="url(#go51)"/><rect x="1241.0" y="266.00" width="664.0" height="2.00" fill="url(#go52)"/><rect x="1241.0" y="268.00" width="662.0" height="2.00" fill="url(#go53)"/><rect x="1242.0" y="270.00" width="659.0" height="2.00" fill="url(#go54)"/><rect x="1242.0" y="272.00" width="657.0" height="2.00" fill="url(#go55)"/><rect x="1243.0" y="274.00" width="654.0" height="2.00" fill="url(#go56)"/><rect x="1244.0" y="276.00" width="651.0" height="2.00" fill="url(#go57)"/><rect x="1244.0" y="278.00" width="649.0" height="2.00" fill="url(#go58)"/><rect x="1245.0" y="280.00" width="646.0" height="2.00" fill="url(#go59)"/><rect x="1246.0" y="282.00" width="643.0" height="2.00" fill="url(#go60)"/><rect x="1247.0" y="284.00" width="640.0" height="2.00" fill="url(#go61)"/><rect x="1247.0" y="286.00" width="638.0" height="2.00" fill="url(#go62)"/><rect x="1248.0" y="288.00" width="635.0" height="2.00" fill="url(#go63)"/><rect x="1249.0" y="290.00" width="632.0" height="2.00" fill="url(#go64)"/><rect x="1249.0" y="292.00" width="631.0" height="2.00" fill="url(#go65)"/><rect x="1250.0" y="294.00" width="628.0" height="2.00" fill="url(#go66)"/><rect x="1251.0" y="296.00" width="625.0" height="2.00" fill="url(#go67)"/><rect x="1251.0" y="298.00" width="623.0" height="2.00" fill="url(#go68)"/><rect x="1252.0" y="300.00" width="620.0" height="2.00" fill="url(#go69)"/><rect x="1253.0" y="302.00" width="617.0" height="2.00" fill="url(#go70)"/><rect x="1253.0" y="304.00" width="615.0" height="2.00" fill="url(#go71)"/><rect x="1254.0" y="306.00" width="612.0" height="2.00" fill="url(#go72)"/><rect x="1255.0" y="308.00" width="609.0" height="2.00" fill="url(#go73)"/><rect x="1256.0" y="310.00" width="606.0" height="2.00" fill="url(#go74)"/><rect x="1257.0" y="312.00" width="603.0" height="2.00" fill="url(#go75)"/><rect x="1258.0" y="314.00" width="600.0" height="2.00" fill="url(#go76)"/><rect x="1258.0" y="316.00" width="598.0" height="2.00" fill="url(#go77)"/><rect x="1259.0" y="318.00" width="595.0" height="2.00" fill="url(#go78)"/><rect x="1260.0" y="320.00" width="592.0" height="2.00" fill="url(#go79)"/><rect x="1261.0" y="322.00" width="589.0" height="2.00" fill="url(#go80)"/><rect x="1262.0" y="324.00" width="586.0" height="2.00" fill="url(#go81)"/><rect x="1263.0" y="326.00" width="583.0" height="2.00" fill="url(#go82)"/><rect x="1264.0" y="328.00" width="580.0" height="2.00" fill="url(#go83)"/><rect x="1264.0" y="330.00" width="579.0" height="2.00" fill="url(#go84)"/><rect x="1265.0" y="332.00" width="576.0" height="2.00" fill="url(#go85)"/><rect x="1266.0" y="334.00" width="573.0" height="2.00" fill="url(#go86)"/><rect x="1267.0" y="336.00" width="570.0" height="2.00" fill="url(#go87)"/><rect x="1268.0" y="338.00" width="567.0" height="2.00" fill="url(#go88)"/><rect x="1269.0" y="340.00" width="564.0" height="2.00" fill="url(#go89)"/><rect x="1270.0" y="342.00" width="561.0" height="2.00" fill="url(#go90)"/><rect x="1271.0" y="344.00" width="558.0" height="2.00" fill="url(#go91)"/><rect x="1272.0" y="346.00" width="555.0" height="2.00" fill="url(#go92)"/><rect x="1273.0" y="348.00" width="552.0" height="2.00" fill="url(#go93)"/><rect x="1273.0" y="350.00" width="550.0" height="2.00" fill="url(#go94)"/><rect x="1274.0" y="352.00" width="547.0" height="2.00" fill="url(#go95)"/><rect x="1275.0" y="354.00" width="544.0" height="2.00" fill="url(#go96)"/><rect x="1276.0" y="356.00" width="541.0" height="2.00" fill="url(#go97)"/><rect x="1277.0" y="358.00" width="538.0" height="2.00" fill="url(#go98)"/><rect x="1278.0" y="360.00" width="535.0" height="2.00" fill="url(#go99)"/><rect x="1279.0" y="362.00" width="532.0" height="2.00" fill="url(#go100)"/><rect x="1280.0" y="364.00" width="529.0" height="2.00" fill="url(#go101)"/><rect x="1281.0" y="366.00" width="526.0" height="2.00" fill="url(#go102)"/><rect x="1282.0" y="368.00" width="523.0" height="2.00" fill="url(#go103)"/><rect x="1283.0" y="370.00" width="521.0" height="2.00" fill="url(#go104)"/><rect x="1284.0" y="372.00" width="518.0" height="2.00" fill="url(#go105)"/><rect x="1285.0" y="374.00" width="515.0" height="2.00" fill="url(#go106)"/><rect x="1286.0" y="376.00" width="512.0" height="2.00" fill="url(#go107)"/><rect x="1287.0" y="378.00" width="509.0" height="2.00" fill="url(#go108)"/><rect x="1288.0" y="380.00" width="506.0" height="2.00" fill="url(#go109)"/><rect x="1289.0" y="382.00" width="503.0" height="2.00" fill="url(#go110)"/><rect x="1290.0" y="384.00" width="500.0" height="2.00" fill="url(#go111)"/><rect x="1291.0" y="386.00" width="497.0" height="2.00" fill="url(#go112)"/><rect x="1292.0" y="388.00" width="494.0" height="2.00" fill="url(#go113)"/><rect x="1293.0" y="390.00" width="491.0" height="2.00" fill="url(#go114)"/><rect x="1294.0" y="392.00" width="488.0" height="2.00" fill="url(#go115)"/><rect x="1295.0" y="394.00" width="485.0" height="2.00" fill="url(#go116)"/><rect x="1296.0" y="396.00" width="482.0" height="2.00" fill="url(#go117)"/><rect x="1297.0" y="398.00" width="479.0" height="2.00" fill="url(#go118)"/><rect x="1298.0" y="400.00" width="476.0" height="2.00" fill="url(#go119)"/><rect x="1300.0" y="402.00" width="472.0" height="2.00" fill="url(#go120)"/><rect x="1301.0" y="404.00" width="469.0" height="2.00" fill="url(#go121)"/><rect x="1302.0" y="406.00" width="466.0" height="2.00" fill="url(#go122)"/><rect x="1303.0" y="408.00" width="464.0" height="2.00" fill="url(#go123)"/><rect x="1304.0" y="410.00" width="461.0" height="2.00" fill="url(#go124)"/><rect x="1305.0" y="412.00" width="458.0" height="2.00" fill="url(#go125)"/><rect x="1306.0" y="414.00" width="455.0" height="2.00" fill="url(#go126)"/><rect x="1307.0" y="416.00" width="452.0" height="2.00" fill="url(#go127)"/><rect x="1309.0" y="418.00" width="448.0" height="2.00" fill="url(#go128)"/><rect x="1310.0" y="420.00" width="445.0" height="2.00" fill="url(#go129)"/><rect x="1311.0" y="422.00" width="442.0" height="2.00" fill="url(#go130)"/><rect x="1312.0" y="424.00" width="439.0" height="2.00" fill="url(#go131)"/><rect x="1313.0" y="426.00" width="436.0" height="2.00" fill="url(#go132)"/><rect x="1315.0" y="428.00" width="432.0" height="2.00" fill="url(#go133)"/><rect x="1316.0" y="430.00" width="429.0" height="2.00" fill="url(#go134)"/><rect x="1317.0" y="432.00" width="426.0" height="2.00" fill="url(#go135)"/><rect x="1318.0" y="434.00" width="423.0" height="2.00" fill="url(#go136)"/><rect x="1319.0" y="436.00" width="420.0" height="2.00" fill="url(#go137)"/><rect x="1321.0" y="438.00" width="416.0" height="2.00" fill="url(#go138)"/><rect x="1322.0" y="440.00" width="413.0" height="2.00" fill="url(#go139)"/><rect x="1323.0" y="442.00" width="410.0" height="2.00" fill="url(#go140)"/><rect x="1324.0" y="444.00" width="407.0" height="2.00" fill="url(#go141)"/><rect x="1325.0" y="446.00" width="405.0" height="2.00" fill="url(#go142)"/><rect x="1327.0" y="448.00" width="401.0" height="2.00" fill="url(#go143)"/><rect x="1328.0" y="450.00" width="398.0" height="2.00" fill="url(#go144)"/><rect x="1329.0" y="452.00" width="395.0" height="2.00" fill="url(#go145)"/><rect x="1330.0" y="454.00" width="392.0" height="2.00" fill="url(#go146)"/><rect x="1331.0" y="456.00" width="389.0" height="2.00" fill="url(#go147)"/><rect x="1333.0" y="458.00" width="385.0" height="2.00" fill="url(#go148)"/><rect x="1334.0" y="460.00" width="382.0" height="2.00" fill="url(#go149)"/><rect x="1335.0" y="462.00" width="379.0" height="2.00" fill="url(#go150)"/><rect x="1336.0" y="464.00" width="376.0" height="2.00" fill="url(#go151)"/><rect x="1337.0" y="466.00" width="373.0" height="2.00" fill="url(#go152)"/><rect x="1339.0" y="468.00" width="369.0" height="2.00" fill="url(#go153)"/><rect x="1340.0" y="470.00" width="366.0" height="2.00" fill="url(#go154)"/><rect x="1341.0" y="472.00" width="363.0" height="2.00" fill="url(#go155)"/><rect x="1342.0" y="474.00" width="360.0" height="2.00" fill="url(#go156)"/><rect x="1343.0" y="476.00" width="357.0" height="2.00" fill="url(#go157)"/><rect x="1345.0" y="478.00" width="353.0" height="2.00" fill="url(#go158)"/><rect x="1346.0" y="480.00" width="350.0" height="2.00" fill="url(#go159)"/><rect x="1347.0" y="482.00" width="347.0" height="2.00" fill="url(#go160)"/><rect x="1349.0" y="484.00" width="343.0" height="2.00" fill="url(#go161)"/><rect x="1350.0" y="486.00" width="341.0" height="2.00" fill="url(#go162)"/><rect x="1351.0" y="488.00" width="338.0" height="2.00" fill="url(#go163)"/><rect x="1353.0" y="490.00" width="334.0" height="2.00" fill="url(#go164)"/><rect x="1354.0" y="492.00" width="331.0" height="2.00" fill="url(#go165)"/><rect x="1355.0" y="494.00" width="328.0" height="2.00" fill="url(#go166)"/><rect x="1357.0" y="496.00" width="324.0" height="2.00" fill="url(#go167)"/><rect x="1358.0" y="498.00" width="321.0" height="2.00" fill="url(#go168)"/><rect x="1359.0" y="500.00" width="318.0" height="2.00" fill="url(#go169)"/><rect x="1361.0" y="502.00" width="314.0" height="2.00" fill="url(#go170)"/><rect x="1362.0" y="504.00" width="311.0" height="2.00" fill="url(#go171)"/><rect x="1363.0" y="506.00" width="308.0" height="2.00" fill="url(#go172)"/><rect x="1365.0" y="508.00" width="304.0" height="2.00" fill="url(#go173)"/><rect x="1366.0" y="510.00" width="301.0" height="2.00" fill="url(#go174)"/><rect x="1367.0" y="512.00" width="298.0" height="2.00" fill="url(#go175)"/><rect x="1369.0" y="514.00" width="294.0" height="2.00" fill="url(#go176)"/><rect x="1370.0" y="516.00" width="291.0" height="2.00" fill="url(#go177)"/><rect x="1372.0" y="518.00" width="287.0" height="2.00" fill="url(#go178)"/><rect x="1373.0" y="520.00" width="284.0" height="2.00" fill="url(#go179)"/><rect x="1374.0" y="522.00" width="281.0" height="2.00" fill="url(#go180)"/><rect x="1376.0" y="524.00" width="278.0" height="2.00" fill="url(#go181)"/><rect x="1377.0" y="526.00" width="275.0" height="2.00" fill="url(#go182)"/><rect x="1379.0" y="528.00" width="271.0" height="2.00" fill="url(#go183)"/><rect x="1380.0" y="530.00" width="268.0" height="2.00" fill="url(#go184)"/><rect x="1382.0" y="532.00" width="264.0" height="2.00" fill="url(#go185)"/><rect x="1383.0" y="534.00" width="261.0" height="2.00" fill="url(#go186)"/><rect x="1385.0" y="536.00" width="257.0" height="2.00" fill="url(#go187)"/><rect x="1387.0" y="538.00" width="253.0" height="2.00" fill="url(#go188)"/><rect x="1388.0" y="540.00" width="250.0" height="2.00" fill="url(#go189)"/><rect x="1390.0" y="542.00" width="246.0" height="2.00" fill="url(#go190)"/><rect x="1391.0" y="544.00" width="243.0" height="2.00" fill="url(#go191)"/><rect x="1393.0" y="546.00" width="239.0" height="2.00" fill="url(#go192)"/><rect x="1394.0" y="548.00" width="236.0" height="2.00" fill="url(#go193)"/><rect x="1396.0" y="550.00" width="232.0" height="2.00" fill="url(#go194)"/><rect x="1397.0" y="552.00" width="229.0" height="2.00" fill="url(#go195)"/><rect x="1399.0" y="554.00" width="225.0" height="2.00" fill="url(#go196)"/><rect x="1401.0" y="556.00" width="221.0" height="2.00" fill="url(#go197)"/><rect x="1402.0" y="558.00" width="218.0" height="2.00" fill="url(#go198)"/><rect x="1404.0" y="560.00" width="214.0" height="2.00" fill="url(#go199)"/><rect x="1406.0" y="562.00" width="211.0" height="2.00" fill="url(#go200)"/><rect x="1407.0" y="564.00" width="208.0" height="2.00" fill="url(#go201)"/><rect x="1409.0" y="566.00" width="204.0" height="2.00" fill="url(#go202)"/><rect x="1411.0" y="568.00" width="200.0" height="2.00" fill="url(#go203)"/><rect x="1413.0" y="570.00" width="196.0" height="2.00" fill="url(#go204)"/><rect x="1415.0" y="572.00" width="192.0" height="2.00" fill="url(#go205)"/><rect x="1416.0" y="574.00" width="189.0" height="2.00" fill="url(#go206)"/><rect x="1418.0" y="576.00" width="185.0" height="2.00" fill="url(#go207)"/><rect x="1419.0" y="578.00" width="182.0" height="2.00" fill="url(#go208)"/><rect x="1421.0" y="580.00" width="178.0" height="2.00" fill="url(#go209)"/><rect x="1423.0" y="582.00" width="174.0" height="2.00" fill="url(#go210)"/><rect x="1425.0" y="584.00" width="170.0" height="2.00" fill="url(#go211)"/><rect x="1427.0" y="586.00" width="166.0" height="2.00" fill="url(#go212)"/><rect x="1429.0" y="588.00" width="162.0" height="2.00" fill="url(#go213)"/><rect x="1431.0" y="590.00" width="158.0" height="2.00" fill="url(#go214)"/><rect x="1433.0" y="592.00" width="154.0" height="2.00" fill="url(#go215)"/><rect x="1435.0" y="594.00" width="150.0" height="2.00" fill="url(#go216)"/><rect x="1437.0" y="596.00" width="146.0" height="2.00" fill="url(#go217)"/><rect x="1439.0" y="598.00" width="142.0" height="2.00" fill="url(#go218)"/><rect x="1441.0" y="600.00" width="138.0" height="2.00" fill="url(#go219)"/><rect x="1443.0" y="602.00" width="135.0" height="2.00" fill="url(#go220)"/><rect x="1446.0" y="604.00" width="130.0" height="2.00" fill="url(#go221)"/><rect x="1448.0" y="606.00" width="126.0" height="2.00" fill="url(#go222)"/><rect x="1450.0" y="608.00" width="122.0" height="2.00" fill="url(#go223)"/><rect x="1453.0" y="610.00" width="117.0" height="2.00" fill="url(#go224)"/><rect x="1455.0" y="612.00" width="113.0" height="2.00" fill="url(#go225)"/><rect x="1457.0" y="614.00" width="109.0" height="2.00" fill="url(#go226)"/><rect x="1460.0" y="616.00" width="104.0" height="2.00" fill="url(#go227)"/><rect x="1462.0" y="618.00" width="100.0" height="2.00" fill="url(#go228)"/><rect x="1465.0" y="620.00" width="95.0" height="2.00" fill="url(#go229)"/><rect x="1467.0" y="622.00" width="91.0" height="2.00" fill="url(#go230)"/><rect x="1469.0" y="624.00" width="87.0" height="2.00" fill="url(#go231)"/><rect x="1471.0" y="626.00" width="83.0" height="2.00" fill="url(#go232)"/><rect x="1474.0" y="628.00" width="78.0" height="2.00" fill="url(#go233)"/><rect x="1477.0" y="630.00" width="73.0" height="2.00" fill="url(#go234)"/><rect x="1478.0" y="632.00" width="70.0" height="2.00" fill="url(#go235)"/><rect x="1481.0" y="634.00" width="65.0" height="2.00" fill="url(#go236)"/><rect x="1484.0" y="636.00" width="60.0" height="2.00" fill="url(#go237)"/><rect x="1486.0" y="638.00" width="56.0" height="2.00" fill="url(#go238)"/><rect x="1488.0" y="640.00" width="53.0" height="2.00" fill="url(#go239)"/><rect x="1491.0" y="642.00" width="48.0" height="2.00" fill="url(#go240)"/><rect x="1494.0" y="644.00" width="43.0" height="2.00" fill="url(#go241)"/><rect x="1496.0" y="646.00" width="39.0" height="2.00" fill="url(#go242)"/><rect x="1498.0" y="648.00" width="35.0" height="2.00" fill="url(#go243)"/><rect x="1501.0" y="650.00" width="30.0" height="2.00" fill="url(#go244)"/><rect x="1503.0" y="652.00" width="26.0" height="2.00" fill="url(#go245)"/><rect x="1506.0" y="654.00" width="21.0" height="2.00" fill="url(#go246)"/><rect x="1508.0" y="656.00" width="17.0" height="2.00" fill="url(#go247)"/><rect x="1511.0" y="658.00" width="12.0" height="2.00" fill="url(#go248)"/></g></g>
<g clip-path="url(#triclip)"><rect x="1367.0" y="182.00" width="7.0" height="2.00" fill="url(#gi0)"/><rect x="1367.0" y="184.00" width="29.0" height="2.00" fill="url(#gi1)"/><rect x="1367.0" y="186.00" width="50.0" height="2.00" fill="url(#gi2)"/><rect x="1368.0" y="188.00" width="71.0" height="2.00" fill="url(#gi3)"/><rect x="1368.0" y="190.00" width="93.0" height="2.00" fill="url(#gi4)"/><rect x="1368.0" y="192.00" width="114.0" height="2.00" fill="url(#gi5)"/><rect x="1369.0" y="194.00" width="135.0" height="2.00" fill="url(#gi6)"/><rect x="1369.0" y="196.00" width="157.0" height="2.00" fill="url(#gi7)"/><rect x="1369.0" y="198.00" width="178.0" height="2.00" fill="url(#gi8)"/><rect x="1370.0" y="200.00" width="199.0" height="2.00" fill="url(#gi9)"/><rect x="1370.0" y="202.00" width="220.0" height="2.00" fill="url(#gi10)"/><rect x="1370.0" y="204.00" width="242.0" height="2.00" fill="url(#gi11)"/><rect x="1371.0" y="206.00" width="263.0" height="2.00" fill="url(#gi12)"/><rect x="1371.0" y="208.00" width="284.0" height="2.00" fill="url(#gi13)"/><rect x="1371.0" y="210.00" width="306.0" height="2.00" fill="url(#gi14)"/><rect x="1372.0" y="212.00" width="327.0" height="2.00" fill="url(#gi15)"/><rect x="1372.0" y="214.00" width="348.0" height="2.00" fill="url(#gi16)"/><rect x="1372.0" y="216.00" width="370.0" height="2.00" fill="url(#gi17)"/><rect x="1373.0" y="218.00" width="369.0" height="2.00" fill="url(#gi18)"/><rect x="1373.0" y="220.00" width="367.0" height="2.00" fill="url(#gi19)"/><rect x="1373.0" y="222.00" width="365.0" height="2.00" fill="url(#gi20)"/><rect x="1373.0" y="224.00" width="363.0" height="2.00" fill="url(#gi21)"/><rect x="1374.0" y="226.00" width="360.0" height="2.00" fill="url(#gi22)"/><rect x="1374.0" y="228.00" width="358.0" height="2.00" fill="url(#gi23)"/><rect x="1374.0" y="230.00" width="356.0" height="2.00" fill="url(#gi24)"/><rect x="1375.0" y="232.00" width="353.0" height="2.00" fill="url(#gi25)"/><rect x="1375.0" y="234.00" width="351.0" height="2.00" fill="url(#gi26)"/><rect x="1375.0" y="236.00" width="349.0" height="2.00" fill="url(#gi27)"/><rect x="1376.0" y="238.00" width="346.0" height="2.00" fill="url(#gi28)"/><rect x="1376.0" y="240.00" width="344.0" height="2.00" fill="url(#gi29)"/><rect x="1376.0" y="242.00" width="342.0" height="2.00" fill="url(#gi30)"/><rect x="1377.0" y="244.00" width="339.0" height="2.00" fill="url(#gi31)"/><rect x="1377.0" y="246.00" width="338.0" height="2.00" fill="url(#gi32)"/><rect x="1377.0" y="248.00" width="336.0" height="2.00" fill="url(#gi33)"/><rect x="1378.0" y="250.00" width="333.0" height="2.00" fill="url(#gi34)"/><rect x="1378.0" y="252.00" width="331.0" height="2.00" fill="url(#gi35)"/><rect x="1378.0" y="254.00" width="329.0" height="2.00" fill="url(#gi36)"/><rect x="1379.0" y="256.00" width="326.0" height="2.00" fill="url(#gi37)"/><rect x="1379.0" y="258.00" width="324.0" height="2.00" fill="url(#gi38)"/><rect x="1379.0" y="260.00" width="322.0" height="2.00" fill="url(#gi39)"/><rect x="1380.0" y="262.00" width="319.0" height="2.00" fill="url(#gi40)"/><rect x="1380.0" y="264.00" width="317.0" height="2.00" fill="url(#gi41)"/><rect x="1380.0" y="266.00" width="315.0" height="2.00" fill="url(#gi42)"/><rect x="1381.0" y="268.00" width="312.0" height="2.00" fill="url(#gi43)"/><rect x="1381.0" y="270.00" width="310.0" height="2.00" fill="url(#gi44)"/><rect x="1381.0" y="272.00" width="308.0" height="2.00" fill="url(#gi45)"/><rect x="1382.0" y="274.00" width="305.0" height="2.00" fill="url(#gi46)"/><rect x="1382.0" y="276.00" width="303.0" height="2.00" fill="url(#gi47)"/><rect x="1382.0" y="278.00" width="301.0" height="2.00" fill="url(#gi48)"/><rect x="1383.0" y="280.00" width="298.0" height="2.00" fill="url(#gi49)"/><rect x="1383.0" y="282.00" width="296.0" height="2.00" fill="url(#gi50)"/><rect x="1383.0" y="284.00" width="294.0" height="2.00" fill="url(#gi51)"/><rect x="1384.0" y="286.00" width="291.0" height="2.00" fill="url(#gi52)"/><rect x="1384.0" y="288.00" width="289.0" height="2.00" fill="url(#gi53)"/><rect x="1384.0" y="290.00" width="287.0" height="2.00" fill="url(#gi54)"/><rect x="1385.0" y="292.00" width="284.0" height="2.00" fill="url(#gi55)"/><rect x="1385.0" y="294.00" width="282.0" height="2.00" fill="url(#gi56)"/><rect x="1385.0" y="296.00" width="280.0" height="2.00" fill="url(#gi57)"/><rect x="1386.0" y="298.00" width="278.0" height="2.00" fill="url(#gi58)"/><rect x="1386.0" y="300.00" width="276.0" height="2.00" fill="url(#gi59)"/><rect x="1386.0" y="302.00" width="274.0" height="2.00" fill="url(#gi60)"/><rect x="1386.0" y="304.00" width="272.0" height="2.00" fill="url(#gi61)"/><rect x="1387.0" y="306.00" width="269.0" height="2.00" fill="url(#gi62)"/><rect x="1387.0" y="308.00" width="267.0" height="2.00" fill="url(#gi63)"/><rect x="1387.0" y="310.00" width="265.0" height="2.00" fill="url(#gi64)"/><rect x="1388.0" y="312.00" width="262.0" height="2.00" fill="url(#gi65)"/><rect x="1388.0" y="314.00" width="260.0" height="2.00" fill="url(#gi66)"/><rect x="1388.0" y="316.00" width="258.0" height="2.00" fill="url(#gi67)"/><rect x="1389.0" y="318.00" width="255.0" height="2.00" fill="url(#gi68)"/><rect x="1389.0" y="320.00" width="253.0" height="2.00" fill="url(#gi69)"/><rect x="1389.0" y="322.00" width="251.0" height="2.00" fill="url(#gi70)"/><rect x="1390.0" y="324.00" width="248.0" height="2.00" fill="url(#gi71)"/><rect x="1390.0" y="326.00" width="246.0" height="2.00" fill="url(#gi72)"/><rect x="1390.0" y="328.00" width="244.0" height="2.00" fill="url(#gi73)"/><rect x="1391.0" y="330.00" width="241.0" height="2.00" fill="url(#gi74)"/><rect x="1391.0" y="332.00" width="239.0" height="2.00" fill="url(#gi75)"/><rect x="1391.0" y="334.00" width="237.0" height="2.00" fill="url(#gi76)"/><rect x="1392.0" y="336.00" width="234.0" height="2.00" fill="url(#gi77)"/><rect x="1392.0" y="338.00" width="232.0" height="2.00" fill="url(#gi78)"/><rect x="1392.0" y="340.00" width="230.0" height="2.00" fill="url(#gi79)"/><rect x="1393.0" y="342.00" width="227.0" height="2.00" fill="url(#gi80)"/><rect x="1393.0" y="344.00" width="225.0" height="2.00" fill="url(#gi81)"/><rect x="1393.0" y="346.00" width="223.0" height="2.00" fill="url(#gi82)"/><rect x="1394.0" y="348.00" width="220.0" height="2.00" fill="url(#gi83)"/><rect x="1394.0" y="350.00" width="218.0" height="2.00" fill="url(#gi84)"/><rect x="1394.0" y="352.00" width="217.0" height="2.00" fill="url(#gi85)"/><rect x="1395.0" y="354.00" width="214.0" height="2.00" fill="url(#gi86)"/><rect x="1395.0" y="356.00" width="212.0" height="2.00" fill="url(#gi87)"/><rect x="1395.0" y="358.00" width="210.0" height="2.00" fill="url(#gi88)"/><rect x="1396.0" y="360.00" width="207.0" height="2.00" fill="url(#gi89)"/><rect x="1396.0" y="362.00" width="205.0" height="2.00" fill="url(#gi90)"/><rect x="1396.0" y="364.00" width="203.0" height="2.00" fill="url(#gi91)"/><rect x="1397.0" y="366.00" width="200.0" height="2.00" fill="url(#gi92)"/><rect x="1397.0" y="368.00" width="198.0" height="2.00" fill="url(#gi93)"/><rect x="1397.0" y="370.00" width="196.0" height="2.00" fill="url(#gi94)"/><rect x="1398.0" y="372.00" width="193.0" height="2.00" fill="url(#gi95)"/><rect x="1398.0" y="374.00" width="191.0" height="2.00" fill="url(#gi96)"/><rect x="1398.0" y="376.00" width="189.0" height="2.00" fill="url(#gi97)"/><rect x="1399.0" y="378.00" width="186.0" height="2.00" fill="url(#gi98)"/><rect x="1399.0" y="380.00" width="184.0" height="2.00" fill="url(#gi99)"/><rect x="1399.0" y="382.00" width="182.0" height="2.00" fill="url(#gi100)"/><rect x="1399.0" y="384.00" width="180.0" height="2.00" fill="url(#gi101)"/><rect x="1400.0" y="386.00" width="177.0" height="2.00" fill="url(#gi102)"/><rect x="1400.0" y="388.00" width="175.0" height="2.00" fill="url(#gi103)"/><rect x="1400.0" y="390.00" width="173.0" height="2.00" fill="url(#gi104)"/><rect x="1401.0" y="392.00" width="170.0" height="2.00" fill="url(#gi105)"/><rect x="1401.0" y="394.00" width="168.0" height="2.00" fill="url(#gi106)"/><rect x="1401.0" y="396.00" width="166.0" height="2.00" fill="url(#gi107)"/><rect x="1402.0" y="398.00" width="163.0" height="2.00" fill="url(#gi108)"/><rect x="1402.0" y="400.00" width="161.0" height="2.00" fill="url(#gi109)"/><rect x="1402.0" y="402.00" width="159.0" height="2.00" fill="url(#gi110)"/><rect x="1403.0" y="404.00" width="157.0" height="2.00" fill="url(#gi111)"/><rect x="1403.0" y="406.00" width="155.0" height="2.00" fill="url(#gi112)"/><rect x="1403.0" y="408.00" width="153.0" height="2.00" fill="url(#gi113)"/><rect x="1404.0" y="410.00" width="150.0" height="2.00" fill="url(#gi114)"/><rect x="1404.0" y="412.00" width="148.0" height="2.00" fill="url(#gi115)"/><rect x="1404.0" y="414.00" width="146.0" height="2.00" fill="url(#gi116)"/><rect x="1405.0" y="416.00" width="143.0" height="2.00" fill="url(#gi117)"/><rect x="1405.0" y="418.00" width="141.0" height="2.00" fill="url(#gi118)"/><rect x="1405.0" y="420.00" width="139.0" height="2.00" fill="url(#gi119)"/><rect x="1406.0" y="422.00" width="136.0" height="2.00" fill="url(#gi120)"/><rect x="1406.0" y="424.00" width="134.0" height="2.00" fill="url(#gi121)"/><rect x="1406.0" y="426.00" width="132.0" height="2.00" fill="url(#gi122)"/><rect x="1407.0" y="428.00" width="129.0" height="2.00" fill="url(#gi123)"/><rect x="1407.0" y="430.00" width="127.0" height="2.00" fill="url(#gi124)"/><rect x="1407.0" y="432.00" width="125.0" height="2.00" fill="url(#gi125)"/><rect x="1408.0" y="434.00" width="122.0" height="2.00" fill="url(#gi126)"/><rect x="1408.0" y="436.00" width="120.0" height="2.00" fill="url(#gi127)"/><rect x="1408.0" y="438.00" width="118.0" height="2.00" fill="url(#gi128)"/><rect x="1409.0" y="440.00" width="115.0" height="2.00" fill="url(#gi129)"/><rect x="1409.0" y="442.00" width="113.0" height="2.00" fill="url(#gi130)"/><rect x="1409.0" y="444.00" width="111.0" height="2.00" fill="url(#gi131)"/><rect x="1410.0" y="446.00" width="108.0" height="2.00" fill="url(#gi132)"/><rect x="1410.0" y="448.00" width="106.0" height="2.00" fill="url(#gi133)"/><rect x="1410.0" y="450.00" width="104.0" height="2.00" fill="url(#gi134)"/><rect x="1411.0" y="452.00" width="101.0" height="2.00" fill="url(#gi135)"/><rect x="1411.0" y="454.00" width="99.0" height="2.00" fill="url(#gi136)"/><rect x="1411.0" y="456.00" width="98.0" height="2.00" fill="url(#gi137)"/><rect x="1411.0" y="458.00" width="96.0" height="2.00" fill="url(#gi138)"/><rect x="1412.0" y="460.00" width="93.0" height="2.00" fill="url(#gi139)"/><rect x="1412.0" y="462.00" width="91.0" height="2.00" fill="url(#gi140)"/><rect x="1412.0" y="464.00" width="89.0" height="2.00" fill="url(#gi141)"/><rect x="1413.0" y="466.00" width="86.0" height="2.00" fill="url(#gi142)"/><rect x="1413.0" y="468.00" width="84.0" height="2.00" fill="url(#gi143)"/><rect x="1413.0" y="470.00" width="82.0" height="2.00" fill="url(#gi144)"/><rect x="1414.0" y="472.00" width="79.0" height="2.00" fill="url(#gi145)"/><rect x="1414.0" y="474.00" width="77.0" height="2.00" fill="url(#gi146)"/><rect x="1414.0" y="476.00" width="75.0" height="2.00" fill="url(#gi147)"/><rect x="1415.0" y="478.00" width="72.0" height="2.00" fill="url(#gi148)"/><rect x="1415.0" y="480.00" width="70.0" height="2.00" fill="url(#gi149)"/><rect x="1415.0" y="482.00" width="68.0" height="2.00" fill="url(#gi150)"/><rect x="1416.0" y="484.00" width="65.0" height="2.00" fill="url(#gi151)"/><rect x="1416.0" y="486.00" width="63.0" height="2.00" fill="url(#gi152)"/><rect x="1416.0" y="488.00" width="61.0" height="2.00" fill="url(#gi153)"/><rect x="1417.0" y="490.00" width="58.0" height="2.00" fill="url(#gi154)"/><rect x="1417.0" y="492.00" width="56.0" height="2.00" fill="url(#gi155)"/><rect x="1417.0" y="494.00" width="54.0" height="2.00" fill="url(#gi156)"/><rect x="1418.0" y="496.00" width="51.0" height="2.00" fill="url(#gi157)"/><rect x="1418.0" y="498.00" width="49.0" height="2.00" fill="url(#gi158)"/><rect x="1418.0" y="500.00" width="47.0" height="2.00" fill="url(#gi159)"/><rect x="1419.0" y="502.00" width="44.0" height="2.00" fill="url(#gi160)"/><rect x="1419.0" y="504.00" width="42.0" height="2.00" fill="url(#gi161)"/><rect x="1419.0" y="506.00" width="40.0" height="2.00" fill="url(#gi162)"/><rect x="1420.0" y="508.00" width="37.0" height="2.00" fill="url(#gi163)"/><rect x="1420.0" y="510.00" width="36.0" height="2.00" fill="url(#gi164)"/><rect x="1420.0" y="512.00" width="34.0" height="2.00" fill="url(#gi165)"/><rect x="1421.0" y="514.00" width="31.0" height="2.00" fill="url(#gi166)"/><rect x="1421.0" y="516.00" width="29.0" height="2.00" fill="url(#gi167)"/><rect x="1421.0" y="518.00" width="27.0" height="2.00" fill="url(#gi168)"/><rect x="1422.0" y="520.00" width="24.0" height="2.00" fill="url(#gi169)"/><rect x="1422.0" y="522.00" width="22.0" height="2.00" fill="url(#gi170)"/><rect x="1422.0" y="524.00" width="20.0" height="2.00" fill="url(#gi171)"/><rect x="1423.0" y="526.00" width="17.0" height="2.00" fill="url(#gi172)"/><rect x="1423.0" y="528.00" width="15.0" height="2.00" fill="url(#gi173)"/><rect x="1423.0" y="530.00" width="13.0" height="2.00" fill="url(#gi174)"/><rect x="1424.0" y="532.00" width="10.0" height="2.00" fill="url(#gi175)"/><rect x="1424.0" y="534.00" width="8.0" height="2.00" fill="url(#gi176)"/></g>
<rect x="1229.25" y="151.55" width="679.0" height="524.0" fill="none" stroke="#a8a8a8" stroke-width="1.5"/>
<rect x="1224" y="674.05" width="6" height="1.5" fill="#a8a8a8"/>
<text x="1223.2" y="680.6" font-size="15" fill="#d8d8d8" text-anchor="end" >0</text>
<rect x="1224" y="630.63" width="6" height="1.5" fill="#a8a8a8"/>
<text x="1223.2" y="637.2" font-size="15" fill="#d8d8d8" text-anchor="end" >0.05</text>
<rect x="1224" y="587.21" width="6" height="1.5" fill="#a8a8a8"/>
<text x="1223.2" y="593.8" font-size="15" fill="#d8d8d8" text-anchor="end" >0.1</text>
<rect x="1224" y="543.79" width="6" height="1.5" fill="#a8a8a8"/>
<text x="1223.2" y="550.3" font-size="15" fill="#d8d8d8" text-anchor="end" >0.15</text>
<rect x="1224" y="500.37" width="6" height="1.5" fill="#a8a8a8"/>
<text x="1223.2" y="506.9" font-size="15" fill="#d8d8d8" text-anchor="end" >0.2</text>
<rect x="1224" y="456.95" width="6" height="1.5" fill="#a8a8a8"/>
<text x="1223.2" y="463.5" font-size="15" fill="#d8d8d8" text-anchor="end" >0.25</text>
<rect x="1224" y="413.53" width="6" height="1.5" fill="#a8a8a8"/>
<text x="1223.2" y="420.1" font-size="15" fill="#d8d8d8" text-anchor="end" >0.3</text>
<rect x="1224" y="370.11" width="6" height="1.5" fill="#a8a8a8"/>
<text x="1223.2" y="376.7" font-size="15" fill="#d8d8d8" text-anchor="end" >0.35</text>
<rect x="1224" y="326.69" width="6" height="1.5" fill="#a8a8a8"/>
<text x="1223.2" y="333.2" font-size="15" fill="#d8d8d8" text-anchor="end" >0.4</text>
<rect x="1224" y="283.27" width="6" height="1.5" fill="#a8a8a8"/>
<text x="1223.2" y="289.8" font-size="15" fill="#d8d8d8" text-anchor="end" >0.45</text>
<rect x="1224" y="239.85" width="6" height="1.5" fill="#a8a8a8"/>
<text x="1223.2" y="246.4" font-size="15" fill="#d8d8d8" text-anchor="end" >0.5</text>
<rect x="1224" y="196.43" width="6" height="1.5" fill="#a8a8a8"/>
<text x="1223.2" y="203.0" font-size="15" fill="#d8d8d8" text-anchor="end" >0.55</text>
<rect x="1229.25" y="674.8" width="1.5" height="6" fill="#a8a8a8"/>
<text x="1230.0" y="697.5" font-size="15" fill="#d8d8d8" text-anchor="middle" >0</text>
<rect x="1285.70" y="674.8" width="1.5" height="6" fill="#a8a8a8"/>
<text x="1286.5" y="697.5" font-size="15" fill="#d8d8d8" text-anchor="middle" >0.05</text>
<rect x="1342.15" y="674.8" width="1.5" height="6" fill="#a8a8a8"/>
<text x="1342.9" y="697.5" font-size="15" fill="#d8d8d8" text-anchor="middle" >0.1</text>
<rect x="1398.60" y="674.8" width="1.5" height="6" fill="#a8a8a8"/>
<text x="1399.3" y="697.5" font-size="15" fill="#d8d8d8" text-anchor="middle" >0.15</text>
<rect x="1455.05" y="674.8" width="1.5" height="6" fill="#a8a8a8"/>
<text x="1455.8" y="697.5" font-size="15" fill="#d8d8d8" text-anchor="middle" >0.2</text>
<rect x="1511.50" y="674.8" width="1.5" height="6" fill="#a8a8a8"/>
<text x="1512.2" y="697.5" font-size="15" fill="#d8d8d8" text-anchor="middle" >0.25</text>
<rect x="1567.95" y="674.8" width="1.5" height="6" fill="#a8a8a8"/>
<text x="1568.7" y="697.5" font-size="15" fill="#d8d8d8" text-anchor="middle" >0.3</text>
<rect x="1624.40" y="674.8" width="1.5" height="6" fill="#a8a8a8"/>
<text x="1625.2" y="697.5" font-size="15" fill="#d8d8d8" text-anchor="middle" >0.35</text>
<rect x="1680.85" y="674.8" width="1.5" height="6" fill="#a8a8a8"/>
<text x="1681.6" y="697.5" font-size="15" fill="#d8d8d8" text-anchor="middle" >0.4</text>
<rect x="1737.30" y="674.8" width="1.5" height="6" fill="#a8a8a8"/>
<text x="1738.0" y="697.5" font-size="15" fill="#d8d8d8" text-anchor="middle" >0.45</text>
<rect x="1793.75" y="674.8" width="1.5" height="6" fill="#a8a8a8"/>
<text x="1794.5" y="697.5" font-size="15" fill="#d8d8d8" text-anchor="middle" >0.5</text>
<rect x="1850.20" y="674.8" width="1.5" height="6" fill="#a8a8a8"/>
<text x="1851.0" y="697.5" font-size="15" fill="#d8d8d8" text-anchor="middle" >0.55</text>
<rect x="1674.5" y="510.2" width="230.5" height="158.3" fill="#333"/>
<g clip-path="url(#iclip)"><rect x="1678.2" y="514.00" width="223.6" height="2.00" fill="url(#io0)"/><rect x="1678.2" y="516.00" width="223.6" height="2.00" fill="url(#io1)"/><rect x="1678.2" y="518.00" width="223.6" height="2.00" fill="url(#io2)"/><rect x="1678.2" y="520.00" width="223.6" height="2.00" fill="url(#io3)"/><rect x="1678.2" y="522.00" width="223.6" height="2.00" fill="url(#io4)"/><rect x="1678.2" y="524.00" width="223.6" height="2.00" fill="url(#io5)"/><rect x="1678.2" y="526.00" width="223.6" height="2.00" fill="url(#io6)"/><rect x="1678.2" y="528.00" width="223.6" height="2.00" fill="url(#io7)"/><rect x="1678.2" y="530.00" width="223.6" height="2.00" fill="url(#io8)"/><rect x="1678.2" y="532.00" width="223.6" height="2.00" fill="url(#io9)"/><rect x="1678.2" y="534.00" width="223.6" height="2.00" fill="url(#io10)"/><rect x="1678.2" y="536.00" width="223.6" height="2.00" fill="url(#io11)"/><rect x="1678.2" y="538.00" width="223.6" height="2.00" fill="url(#io12)"/><rect x="1678.2" y="540.00" width="223.6" height="2.00" fill="url(#io13)"/><rect x="1678.2" y="542.00" width="223.6" height="2.00" fill="url(#io14)"/><rect x="1678.2" y="544.00" width="223.6" height="2.00" fill="url(#io15)"/><rect x="1678.2" y="546.00" width="223.6" height="2.00" fill="url(#io16)"/><rect x="1678.2" y="548.00" width="223.6" height="2.00" fill="url(#io17)"/><rect x="1678.2" y="550.00" width="223.6" height="2.00" fill="url(#io18)"/><rect x="1678.2" y="552.00" width="223.6" height="2.00" fill="url(#io19)"/><rect x="1678.2" y="554.00" width="223.6" height="2.00" fill="url(#io20)"/><rect x="1678.2" y="556.00" width="223.6" height="2.00" fill="url(#io21)"/><rect x="1678.2" y="558.00" width="223.6" height="2.00" fill="url(#io22)"/><rect x="1678.2" y="560.00" width="223.6" height="2.00" fill="url(#io23)"/><rect x="1678.2" y="562.00" width="223.6" height="2.00" fill="url(#io24)"/><rect x="1678.2" y="564.00" width="223.6" height="2.00" fill="url(#io25)"/><rect x="1678.2" y="566.00" width="223.6" height="2.00" fill="url(#io26)"/><rect x="1678.2" y="568.00" width="223.6" height="2.00" fill="url(#io27)"/><rect x="1678.2" y="570.00" width="223.6" height="2.00" fill="url(#io28)"/><rect x="1678.2" y="572.00" width="223.6" height="2.00" fill="url(#io29)"/><rect x="1678.2" y="574.00" width="223.6" height="2.00" fill="url(#io30)"/><rect x="1678.2" y="576.00" width="223.6" height="2.00" fill="url(#io31)"/><rect x="1678.2" y="578.00" width="223.6" height="2.00" fill="url(#io32)"/><rect x="1678.2" y="580.00" width="223.6" height="2.00" fill="url(#io33)"/><rect x="1678.2" y="582.00" width="223.6" height="2.00" fill="url(#io34)"/><rect x="1678.2" y="584.00" width="223.6" height="2.00" fill="url(#io35)"/><rect x="1678.2" y="586.00" width="223.6" height="2.00" fill="url(#io36)"/><rect x="1678.2" y="588.00" width="223.6" height="2.00" fill="url(#io37)"/><rect x="1678.2" y="590.00" width="223.6" height="2.00" fill="url(#io38)"/><rect x="1678.2" y="592.00" width="223.6" height="2.00" fill="url(#io39)"/><rect x="1678.2" y="594.00" width="223.6" height="2.00" fill="url(#io40)"/><rect x="1678.2" y="596.00" width="223.6" height="2.00" fill="url(#io41)"/><rect x="1678.2" y="598.00" width="223.6" height="2.00" fill="url(#io42)"/><rect x="1678.2" y="600.00" width="223.6" height="2.00" fill="url(#io43)"/><rect x="1678.2" y="602.00" width="223.6" height="2.00" fill="url(#io44)"/><rect x="1678.2" y="604.00" width="223.6" height="2.00" fill="url(#io45)"/><rect x="1678.2" y="606.00" width="223.6" height="2.00" fill="url(#io46)"/><rect x="1678.2" y="608.00" width="223.6" height="2.00" fill="url(#io47)"/><rect x="1678.2" y="610.00" width="223.6" height="2.00" fill="url(#io48)"/><rect x="1678.2" y="612.00" width="223.6" height="2.00" fill="url(#io49)"/><rect x="1678.2" y="614.00" width="223.6" height="2.00" fill="url(#io50)"/><rect x="1678.2" y="616.00" width="223.6" height="2.00" fill="url(#io51)"/><rect x="1678.2" y="618.00" width="223.6" height="2.00" fill="url(#io52)"/><rect x="1678.2" y="620.00" width="223.6" height="2.00" fill="url(#io53)"/><rect x="1678.2" y="622.00" width="223.6" height="2.00" fill="url(#io54)"/><rect x="1678.2" y="624.00" width="223.6" height="2.00" fill="url(#io55)"/><rect x="1678.2" y="626.00" width="223.6" height="2.00" fill="url(#io56)"/><rect x="1678.2" y="628.00" width="223.6" height="2.00" fill="url(#io57)"/><rect x="1678.2" y="630.00" width="223.6" height="2.00" fill="url(#io58)"/><rect x="1678.2" y="632.00" width="223.6" height="2.00" fill="url(#io59)"/><rect x="1678.2" y="634.00" width="223.6" height="2.00" fill="url(#io60)"/><rect x="1678.2" y="636.00" width="223.6" height="2.00" fill="url(#io61)"/><rect x="1678.2" y="638.00" width="223.6" height="2.00" fill="url(#io62)"/><rect x="1678.2" y="640.00" width="223.6" height="2.00" fill="url(#io63)"/><rect x="1678.2" y="642.00" width="223.6" height="2.00" fill="url(#io64)"/><rect x="1678.2" y="644.00" width="223.6" height="2.00" fill="url(#io65)"/><rect x="1678.2" y="646.00" width="223.6" height="2.00" fill="url(#io66)"/><rect x="1678.2" y="648.00" width="223.6" height="2.00" fill="url(#io67)"/><rect x="1678.2" y="650.00" width="223.6" height="2.00" fill="url(#io68)"/><rect x="1678.2" y="652.00" width="223.6" height="2.00" fill="url(#io69)"/><rect x="1678.2" y="654.00" width="223.6" height="2.00" fill="url(#io70)"/><rect x="1678.2" y="656.00" width="223.6" height="2.00" fill="url(#io71)"/><rect x="1678.2" y="658.00" width="223.6" height="2.00" fill="url(#io72)"/><rect x="1678.2" y="660.00" width="223.6" height="2.00" fill="url(#io73)"/><rect x="1678.2" y="662.00" width="223.6" height="2.00" fill="url(#io74)"/><rect x="1678.2" y="664.00" width="223.6" height="2.00" fill="url(#io75)"/></g>
<g clip-path="url(#iclip)"><g clip-path="url(#itri)"><rect x="1678.2" y="514.00" width="223.6" height="2.00" fill="url(#ii0)"/><rect x="1678.2" y="516.00" width="223.6" height="2.00" fill="url(#ii1)"/><rect x="1678.2" y="518.00" width="223.6" height="2.00" fill="url(#ii2)"/><rect x="1678.2" y="520.00" width="223.6" height="2.00" fill="url(#ii3)"/><rect x="1678.2" y="522.00" width="223.6" height="2.00" fill="url(#ii4)"/><rect x="1678.2" y="524.00" width="223.6" height="2.00" fill="url(#ii5)"/><rect x="1678.2" y="526.00" width="223.6" height="2.00" fill="url(#ii6)"/><rect x="1678.2" y="528.00" width="223.6" height="2.00" fill="url(#ii7)"/><rect x="1678.2" y="530.00" width="223.6" height="2.00" fill="url(#ii8)"/><rect x="1678.2" y="532.00" width="223.6" height="2.00" fill="url(#ii9)"/><rect x="1678.2" y="534.00" width="223.6" height="2.00" fill="url(#ii10)"/><rect x="1678.2" y="536.00" width="223.6" height="2.00" fill="url(#ii11)"/><rect x="1678.2" y="538.00" width="223.6" height="2.00" fill="url(#ii12)"/><rect x="1678.2" y="540.00" width="223.6" height="2.00" fill="url(#ii13)"/><rect x="1678.2" y="542.00" width="223.6" height="2.00" fill="url(#ii14)"/><rect x="1678.2" y="544.00" width="223.6" height="2.00" fill="url(#ii15)"/><rect x="1678.2" y="546.00" width="223.6" height="2.00" fill="url(#ii16)"/><rect x="1678.2" y="548.00" width="223.6" height="2.00" fill="url(#ii17)"/><rect x="1678.2" y="550.00" width="223.6" height="2.00" fill="url(#ii18)"/><rect x="1678.2" y="552.00" width="223.6" height="2.00" fill="url(#ii19)"/><rect x="1678.2" y="554.00" width="223.6" height="2.00" fill="url(#ii20)"/><rect x="1678.2" y="556.00" width="223.6" height="2.00" fill="url(#ii21)"/><rect x="1678.2" y="558.00" width="223.6" height="2.00" fill="url(#ii22)"/><rect x="1678.2" y="560.00" width="223.6" height="2.00" fill="url(#ii23)"/><rect x="1678.2" y="562.00" width="223.6" height="2.00" fill="url(#ii24)"/><rect x="1678.2" y="564.00" width="223.6" height="2.00" fill="url(#ii25)"/><rect x="1678.2" y="566.00" width="223.6" height="2.00" fill="url(#ii26)"/><rect x="1678.2" y="568.00" width="223.6" height="2.00" fill="url(#ii27)"/><rect x="1678.2" y="570.00" width="223.6" height="2.00" fill="url(#ii28)"/><rect x="1678.2" y="572.00" width="223.6" height="2.00" fill="url(#ii29)"/><rect x="1678.2" y="574.00" width="223.6" height="2.00" fill="url(#ii30)"/><rect x="1678.2" y="576.00" width="223.6" height="2.00" fill="url(#ii31)"/><rect x="1678.2" y="578.00" width="223.6" height="2.00" fill="url(#ii32)"/><rect x="1678.2" y="580.00" width="223.6" height="2.00" fill="url(#ii33)"/><rect x="1678.2" y="582.00" width="223.6" height="2.00" fill="url(#ii34)"/><rect x="1678.2" y="584.00" width="223.6" height="2.00" fill="url(#ii35)"/><rect x="1678.2" y="586.00" width="223.6" height="2.00" fill="url(#ii36)"/><rect x="1678.2" y="588.00" width="223.6" height="2.00" fill="url(#ii37)"/><rect x="1678.2" y="590.00" width="223.6" height="2.00" fill="url(#ii38)"/><rect x="1678.2" y="592.00" width="223.6" height="2.00" fill="url(#ii39)"/><rect x="1678.2" y="594.00" width="223.6" height="2.00" fill="url(#ii40)"/><rect x="1678.2" y="596.00" width="223.6" height="2.00" fill="url(#ii41)"/><rect x="1678.2" y="598.00" width="223.6" height="2.00" fill="url(#ii42)"/><rect x="1678.2" y="600.00" width="223.6" height="2.00" fill="url(#ii43)"/><rect x="1678.2" y="602.00" width="223.6" height="2.00" fill="url(#ii44)"/><rect x="1678.2" y="604.00" width="223.6" height="2.00" fill="url(#ii45)"/><rect x="1678.2" y="606.00" width="223.6" height="2.00" fill="url(#ii46)"/><rect x="1678.2" y="608.00" width="223.6" height="2.00" fill="url(#ii47)"/><rect x="1678.2" y="610.00" width="223.6" height="2.00" fill="url(#ii48)"/><rect x="1678.2" y="612.00" width="223.6" height="2.00" fill="url(#ii49)"/><rect x="1678.2" y="614.00" width="223.6" height="2.00" fill="url(#ii50)"/><rect x="1678.2" y="616.00" width="223.6" height="2.00" fill="url(#ii51)"/><rect x="1678.2" y="618.00" width="223.6" height="2.00" fill="url(#ii52)"/><rect x="1678.2" y="620.00" width="223.6" height="2.00" fill="url(#ii53)"/><rect x="1678.2" y="622.00" width="223.6" height="2.00" fill="url(#ii54)"/><rect x="1678.2" y="624.00" width="223.6" height="2.00" fill="url(#ii55)"/><rect x="1678.2" y="626.00" width="223.6" height="2.00" fill="url(#ii56)"/><rect x="1678.2" y="628.00" width="223.6" height="2.00" fill="url(#ii57)"/><rect x="1678.2" y="630.00" width="223.6" height="2.00" fill="url(#ii58)"/><rect x="1678.2" y="632.00" width="223.6" height="2.00" fill="url(#ii59)"/><rect x="1678.2" y="634.00" width="223.6" height="2.00" fill="url(#ii60)"/><rect x="1678.2" y="636.00" width="223.6" height="2.00" fill="url(#ii61)"/><rect x="1678.2" y="638.00" width="223.6" height="2.00" fill="url(#ii62)"/><rect x="1678.2" y="640.00" width="223.6" height="2.00" fill="url(#ii63)"/><rect x="1678.2" y="642.00" width="223.6" height="2.00" fill="url(#ii64)"/><rect x="1678.2" y="644.00" width="223.6" height="2.00" fill="url(#ii65)"/><rect x="1678.2" y="646.00" width="223.6" height="2.00" fill="url(#ii66)"/><rect x="1678.2" y="648.00" width="223.6" height="2.00" fill="url(#ii67)"/><rect x="1678.2" y="650.00" width="223.6" height="2.00" fill="url(#ii68)"/><rect x="1678.2" y="652.00" width="223.6" height="2.00" fill="url(#ii69)"/><rect x="1678.2" y="654.00" width="223.6" height="2.00" fill="url(#ii70)"/><rect x="1678.2" y="656.00" width="223.6" height="2.00" fill="url(#ii71)"/><rect x="1678.2" y="658.00" width="223.6" height="2.00" fill="url(#ii72)"/><rect x="1678.2" y="660.00" width="223.6" height="2.00" fill="url(#ii73)"/><rect x="1678.2" y="662.00" width="223.6" height="2.00" fill="url(#ii74)"/><rect x="1678.2" y="664.00" width="223.6" height="2.00" fill="url(#ii75)"/></g></g>
<rect x="1677.6000000000001" y="513.6999999999999" width="224.8" height="151.9" fill="none" stroke="#9a9a9a" stroke-width="1.6"/>
<rect x="1781.6" y="581.6" width="13.8" height="13.8" fill="none" stroke="#fafafa" stroke-width="1.8"/>
<circle cx="1780.2" cy="591.6" r="4.3" fill="#c6c000" stroke="#111" stroke-width="1.5"/>
<rect x="1424.0" y="236.5" width="13.8" height="13.8" fill="#a0ed9e" fill-opacity="0.4" stroke="#fafafa" stroke-width="1.8"/><rect x="1405.2" y="219.0" width="13.8" height="13.8" fill="#6bed6d" fill-opacity="0.4" stroke="#fafafa" stroke-width="1.8"/><rect x="1389.2" y="202.7" width="13.8" height="13.8" fill="#43ed43" fill-opacity="0.4" stroke="#fafafa" stroke-width="1.8"/><rect x="1376.3" y="189.9" width="13.8" height="13.8" fill="#23ed24" fill-opacity="0.4" stroke="#fafafa" stroke-width="1.8"/><rect x="1363.7" y="177.0" width="13.8" height="13.8" fill="#00ed00" fill-opacity="0.4" stroke="#fafafa" stroke-width="1.8"/><rect x="1448.5" y="240.5" width="13.8" height="13.8" fill="#edebb0" fill-opacity="0.4" stroke="#fafafa" stroke-width="1.8"/><rect x="1450.0" y="224.5" width="13.8" height="13.8" fill="#edeb7f" fill-opacity="0.4" stroke="#fafafa" stroke-width="1.8"/><rect x="1451.2" y="210.4" width="13.8" height="13.8" fill="#edec55" fill-opacity="0.4" stroke="#fafafa" stroke-width="1.8"/><rect x="1451.2" y="198.7" width="13.8" height="13.8" fill="#eaed31" fill-opacity="0.4" stroke="#fafafa" stroke-width="1.8"/><rect x="1452.8" y="185.2" width="13.8" height="13.8" fill="#ebed00" fill-opacity="0.4" stroke="#fafafa" stroke-width="1.8"/><rect x="1434.0" y="262.0" width="13.8" height="13.8" fill="#c1ebed" fill-opacity="0.4" stroke="#fafafa" stroke-width="1.8"/><rect x="1419.9" y="263.6" width="13.8" height="13.8" fill="#94edec" fill-opacity="0.4" stroke="#fafafa" stroke-width="1.8"/><rect x="1405.1" y="266.3" width="13.8" height="13.8" fill="#63eced" fill-opacity="0.4" stroke="#fafafa" stroke-width="1.8"/><rect x="1391.6" y="268.2" width="13.8" height="13.8" fill="#35edec" fill-opacity="0.4" stroke="#fafafa" stroke-width="1.8"/><rect x="1379.3" y="270.9" width="13.8" height="13.8" fill="#01eced" fill-opacity="0.4" stroke="#fafafa" stroke-width="1.8"/><rect x="1464.1" y="276.6" width="13.8" height="13.8" fill="#edb2eb" fill-opacity="0.4" stroke="#fafafa" stroke-width="1.8"/><rect x="1484.3" y="296.9" width="13.8" height="13.8" fill="#ed81ec" fill-opacity="0.4" stroke="#fafafa" stroke-width="1.8"/><rect x="1504.9" y="318.0" width="13.8" height="13.8" fill="#ec5aed" fill-opacity="0.4" stroke="#fafafa" stroke-width="1.8"/><rect x="1532.2" y="346.0" width="13.8" height="13.8" fill="#eb30ed" fill-opacity="0.4" stroke="#fafafa" stroke-width="1.8"/><rect x="1567.0" y="378.8" width="13.8" height="13.8" fill="#ed01ec" fill-opacity="0.4" stroke="#fafafa" stroke-width="1.8"/><rect x="1442.6" y="291.1" width="13.8" height="13.8" fill="#9fa1ed" fill-opacity="0.4" stroke="#fafafa" stroke-width="1.8"/><rect x="1440.1" y="330.1" width="13.8" height="13.8" fill="#6d6ced" fill-opacity="0.4" stroke="#fafafa" stroke-width="1.8"/><rect x="1435.8" y="377.6" width="13.8" height="13.8" fill="#4645ed" fill-opacity="0.4" stroke="#fafafa" stroke-width="1.8"/><rect x="1429.8" y="438.1" width="13.8" height="13.8" fill="#2524ed" fill-opacity="0.4" stroke="#fafafa" stroke-width="1.8"/><rect x="1421.4" y="529.2" width="13.8" height="13.8" fill="#0100ed" fill-opacity="0.4" stroke="#fafafa" stroke-width="1.8"/><rect x="1498.1" y="251.0" width="13.8" height="13.8" fill="#ed7f80" fill-opacity="0.4" stroke="#fafafa" stroke-width="1.8"/><rect x="1554.1" y="240.4" width="13.8" height="13.8" fill="#ed4b49" fill-opacity="0.4" stroke="#fafafa" stroke-width="1.8"/><rect x="1606.0" y="233.4" width="13.8" height="13.8" fill="#ed2e2f" fill-opacity="0.4" stroke="#fafafa" stroke-width="1.8"/><rect x="1663.9" y="222.9" width="13.8" height="13.8" fill="#ed1717" fill-opacity="0.4" stroke="#fafafa" stroke-width="1.8"/><rect x="1731.5" y="211.7" width="13.8" height="13.8" fill="#ed0000" fill-opacity="0.4" stroke="#fafafa" stroke-width="1.8"/>
<rect x="1445.5" y="259.3" width="13.8" height="13.8" fill="#f0f0f0" stroke="#111" stroke-width="1.8"/>
<circle cx="1427.8" cy="244.3" r="4.3" fill="#96be96" stroke="#111" stroke-width="1.35"/><circle cx="1406.5" cy="224.1" r="4.3" fill="#7fbe7f" stroke="#111" stroke-width="1.35"/><circle cx="1392.0" cy="209.9" r="4.3" fill="#6abe6a" stroke="#111" stroke-width="1.35"/><circle cx="1377.3" cy="196.8" r="4.3" fill="#53be53" stroke="#111" stroke-width="1.35"/><circle cx="1364.5" cy="184.1" r="4.3" fill="#22be22" stroke="#111" stroke-width="1.35"/><circle cx="1455.3" cy="247.4" r="4.3" fill="#bebe96" stroke="#111" stroke-width="1.35"/><circle cx="1456.9" cy="230.2" r="4.3" fill="#bebe7f" stroke="#111" stroke-width="1.35"/><circle cx="1456.9" cy="215.8" r="4.3" fill="#bebe6a" stroke="#111" stroke-width="1.35"/><circle cx="1458.1" cy="205.6" r="4.3" fill="#bebe53" stroke="#111" stroke-width="1.35"/><circle cx="1458.1" cy="192.5" r="4.3" fill="#bebe22" stroke="#111" stroke-width="1.35"/><circle cx="1437.9" cy="268.9" r="4.3" fill="#96bebe" stroke="#111" stroke-width="1.35"/><circle cx="1423.7" cy="271.7" r="4.3" fill="#7fbebe" stroke="#111" stroke-width="1.35"/><circle cx="1409.2" cy="273.2" r="4.3" fill="#6abebe" stroke="#111" stroke-width="1.35"/><circle cx="1396.3" cy="274.8" r="4.3" fill="#53bebe" stroke="#111" stroke-width="1.35"/><circle cx="1381.7" cy="277.9" r="4.3" fill="#22bebe" stroke="#111" stroke-width="1.35"/><circle cx="1473.1" cy="286.6" r="4.3" fill="#be96be" stroke="#111" stroke-width="1.35"/><circle cx="1495.8" cy="306.9" r="4.3" fill="#be7fbe" stroke="#111" stroke-width="1.35"/><circle cx="1516.0" cy="327.1" r="4.3" fill="#be6abe" stroke="#111" stroke-width="1.35"/><circle cx="1542.0" cy="351.3" r="4.3" fill="#be53be" stroke="#111" stroke-width="1.35"/><circle cx="1575.4" cy="384.9" r="4.3" fill="#be22be" stroke="#111" stroke-width="1.35"/><circle cx="1451.1" cy="300.7" r="4.3" fill="#9696be" stroke="#111" stroke-width="1.35"/><circle cx="1446.8" cy="342.7" r="4.3" fill="#7f7fbe" stroke="#111" stroke-width="1.35"/><circle cx="1442.5" cy="388.8" r="4.3" fill="#6a6abe" stroke="#111" stroke-width="1.35"/><circle cx="1437.8" cy="445.4" r="4.3" fill="#5353be" stroke="#111" stroke-width="1.35"/><circle cx="1431.0" cy="541.7" r="4.3" fill="#2222be" stroke="#111" stroke-width="1.35"/><circle cx="1507.5" cy="257.6" r="4.3" fill="#be9696" stroke="#111" stroke-width="1.35"/><circle cx="1562.2" cy="247.6" r="4.3" fill="#be7f7f" stroke="#111" stroke-width="1.35"/><circle cx="1612.9" cy="240.3" r="4.3" fill="#be6a6a" stroke="#111" stroke-width="1.35"/><circle cx="1662.0" cy="230.4" r="4.3" fill="#be5353" stroke="#111" stroke-width="1.35"/><circle cx="1725.3" cy="220.1" r="4.3" fill="#be2222" stroke="#111" stroke-width="1.35"/>
<circle cx="1453.8" cy="266.2" r="4.3" fill="#fff" stroke="#111" stroke-width="1.5"/>
<text x="204.1" y="745.7" font-size="30" fill="#f4f4f4" textLength="246.7" lengthAdjust="spacingAndGlyphs" >Avg dE2000: 0.96</text>
<text x="199.9" y="788.7" font-size="30" fill="#f4f4f4" textLength="256.4" lengthAdjust="spacingAndGlyphs" >Max dE2000: 1.78</text>
<text x="166.3" y="839.5" font-size="30" fill="#f4f4f4" textLength="230.9" lengthAdjust="spacingAndGlyphs" >Current Reading</text>
<text x="166.3" y="877.6" font-size="25.5" fill="#f4f4f4" textLength="106.8" lengthAdjust="spacingAndGlyphs" >x: 0.4172</text>
<text x="331.7" y="877.6" font-size="25.5" fill="#f4f4f4" textLength="108.0" lengthAdjust="spacingAndGlyphs" >y: 0.5045</text>
<text x="166.3" y="920.6" font-size="25.5" fill="#f4f4f4" textLength="100.9" lengthAdjust="spacingAndGlyphs" >fL: 52.99</text>
<text x="166.3" y="956.5" font-size="25.5" fill="#f4f4f4" textLength="167.1" lengthAdjust="spacingAndGlyphs" >cd/m²: 181.57</text>
<text x="644.8" y="748.2" font-size="16" fill="#dcdcdc" text-anchor="middle" textLength="87.9" lengthAdjust="spacingAndGlyphs" >RGB Balance</text>
<rect x="516.7" y="753.2" width="277.4" height="190.6" fill="#232323"/>
<rect x="516.7" y="790.25" width="277.4" height="1.5" fill="#8a8a8a"/>
<rect x="509.5" y="790.25" width="7.2" height="1.5" fill="#a4a4a4"/>
<rect x="516.7" y="849.25" width="277.4" height="1.5" fill="#8a8a8a"/>
<rect x="509.5" y="849.25" width="7.2" height="1.5" fill="#a4a4a4"/>
<rect x="516.7" y="909.45" width="277.4" height="1.5" fill="#8a8a8a"/>
<rect x="509.5" y="909.45" width="7.2" height="1.5" fill="#a4a4a4"/>
<rect x="516.7" y="753.2" width="277.4" height="190.6" fill="none" stroke="#a4a4a4" stroke-width="1.6"/>
<rect x="515.9000000000001" y="943.8" width="1.6" height="6.5" fill="#a4a4a4"/><rect x="793.3000000000001" y="943.8" width="1.6" height="6.5" fill="#a4a4a4"/>
<text x="509.0" y="795.8" font-size="15" fill="#d6d6d6" text-anchor="end" textLength="8.1" lengthAdjust="spacingAndGlyphs" >5</text>
<text x="509.0" y="855.8" font-size="15" fill="#d6d6d6" text-anchor="end" textLength="8.1" lengthAdjust="spacingAndGlyphs" >0</text>
<text x="509.0" y="916.0" font-size="15" fill="#d6d6d6" text-anchor="end" >-5</text>
<text x="654.9" y="961.6" font-size="15.5" fill="#dcdcdc" text-anchor="middle" textLength="37.7" lengthAdjust="spacingAndGlyphs" >100%</text>
<rect x="543.2" y="849.5" width="72.6" height="19.6" fill="#000"/><rect x="544.2" y="850.5" width="70.6" height="17.4" fill="url(#rbar)"/>
<rect x="615.4" y="850.2" width="73.4" height="2.2" fill="#0a0a0a"/><rect x="615.4" y="850.6" width="73.3" height="1.2" fill="#1a7a1a"/>
<rect x="690.6" y="755.3" width="73.4" height="95.2" fill="#000"/><rect x="691.6" y="756.3" width="71.4" height="93.4" fill="url(#bbar)"/>
<rect x="816.7" y="720.9" width="764.9" height="14.9" fill="#2f2f2f"/>
<rect x="816.7" y="735.8" width="764.9" height="15.2" fill="#161616"/>
<rect x="816.7" y="720.9" width="21.1" height="30.1" fill="#000"/>
<rect x="837.8" y="751.00" width="743.8" height="27.6" fill="#434343"/>
<rect x="816.7" y="751.00" width="21.1" height="27.6" fill="#262626"/>
<text x="844.0" y="771.3" font-size="18" fill="#f2f2f2" textLength="83.7" lengthAdjust="spacingAndGlyphs" >x: CIE31</text>
<text x="1014.4" y="771.3" font-size="18" fill="#f2f2f2" textLength="71.0" lengthAdjust="spacingAndGlyphs" >0.3353</text>
<text x="1129.1" y="771.3" font-size="18" fill="#f2f2f2" textLength="71.0" lengthAdjust="spacingAndGlyphs" >0.3575</text>
<text x="1243.9" y="771.3" font-size="18" fill="#f2f2f2" textLength="71.0" lengthAdjust="spacingAndGlyphs" >0.3783</text>
<text x="1358.6" y="771.3" font-size="18" fill="#f2f2f2" textLength="71.0" lengthAdjust="spacingAndGlyphs" >0.3959</text>
<text x="1473.4" y="771.3" font-size="18" fill="#f2f2f2" textLength="71.0" lengthAdjust="spacingAndGlyphs" >0.4172</text>
<rect x="837.8" y="778.38" width="743.8" height="27.6" fill="#808080"/>
<rect x="816.7" y="778.38" width="21.1" height="27.6" fill="#232323"/>
<text x="844.0" y="798.7" font-size="18" fill="#f2f2f2" textLength="85.3" lengthAdjust="spacingAndGlyphs" >y: CIE31</text>
<text x="1014.4" y="798.7" font-size="18" fill="#f2f2f2" textLength="71.0" lengthAdjust="spacingAndGlyphs" >0.3666</text>
<text x="1129.1" y="798.7" font-size="18" fill="#f2f2f2" textLength="71.0" lengthAdjust="spacingAndGlyphs" >0.4037</text>
<text x="1243.9" y="798.7" font-size="18" fill="#f2f2f2" textLength="71.0" lengthAdjust="spacingAndGlyphs" >0.4386</text>
<text x="1358.6" y="798.7" font-size="18" fill="#f2f2f2" textLength="71.0" lengthAdjust="spacingAndGlyphs" >0.4682</text>
<text x="1473.4" y="798.7" font-size="18" fill="#f2f2f2" textLength="71.0" lengthAdjust="spacingAndGlyphs" >0.5045</text>
<rect x="837.8" y="805.75" width="743.8" height="27.6" fill="#434343"/>
<rect x="816.7" y="805.75" width="21.1" height="27.6" fill="#262626"/>
<text x="844.0" y="826.0" font-size="18" fill="#f2f2f2" textLength="14.6" lengthAdjust="spacingAndGlyphs" >Y</text>
<text x="1014.4" y="826.0" font-size="18" fill="#f2f2f2" textLength="98.8" lengthAdjust="spacingAndGlyphs" >190.0487</text>
<text x="1129.1" y="826.0" font-size="18" fill="#f2f2f2" textLength="98.8" lengthAdjust="spacingAndGlyphs" >186.6846</text>
<text x="1243.9" y="826.0" font-size="18" fill="#f2f2f2" textLength="98.8" lengthAdjust="spacingAndGlyphs" >184.5670</text>
<text x="1358.6" y="826.0" font-size="18" fill="#f2f2f2" textLength="98.8" lengthAdjust="spacingAndGlyphs" >183.1378</text>
<text x="1473.4" y="826.0" font-size="18" fill="#f2f2f2" textLength="98.8" lengthAdjust="spacingAndGlyphs" >181.5732</text>
<rect x="837.8" y="833.12" width="743.8" height="27.6" fill="#808080"/>
<rect x="816.7" y="833.12" width="21.1" height="27.6" fill="#232323"/>
<text x="844.0" y="853.4" font-size="18" fill="#f2f2f2" textLength="152.4" lengthAdjust="spacingAndGlyphs" >Target x:CIE31</text>
<text x="1014.4" y="853.4" font-size="18" fill="#f2f2f2" textLength="71.0" lengthAdjust="spacingAndGlyphs" >0.3344</text>
<text x="1129.1" y="853.4" font-size="18" fill="#f2f2f2" textLength="71.0" lengthAdjust="spacingAndGlyphs" >0.3564</text>
<text x="1243.9" y="853.4" font-size="18" fill="#f2f2f2" textLength="71.0" lengthAdjust="spacingAndGlyphs" >0.3773</text>
<text x="1358.6" y="853.4" font-size="18" fill="#f2f2f2" textLength="71.0" lengthAdjust="spacingAndGlyphs" >0.3969</text>
<text x="1473.4" y="853.4" font-size="18" fill="#f2f2f2" textLength="71.0" lengthAdjust="spacingAndGlyphs" >0.4193</text>
<rect x="837.8" y="860.50" width="743.8" height="27.6" fill="#434343"/>
<rect x="816.7" y="860.50" width="21.1" height="27.6" fill="#262626"/>
<text x="844.0" y="880.8" font-size="18" fill="#f2f2f2" textLength="152.4" lengthAdjust="spacingAndGlyphs" >Target y:CIE31</text>
<text x="1014.4" y="880.8" font-size="18" fill="#f2f2f2" textLength="71.0" lengthAdjust="spacingAndGlyphs" >0.3648</text>
<text x="1129.1" y="880.8" font-size="18" fill="#f2f2f2" textLength="71.0" lengthAdjust="spacingAndGlyphs" >0.4013</text>
<text x="1243.9" y="880.8" font-size="18" fill="#f2f2f2" textLength="71.0" lengthAdjust="spacingAndGlyphs" >0.4358</text>
<text x="1358.6" y="880.8" font-size="18" fill="#f2f2f2" textLength="71.0" lengthAdjust="spacingAndGlyphs" >0.4682</text>
<text x="1473.4" y="880.8" font-size="18" fill="#f2f2f2" textLength="71.0" lengthAdjust="spacingAndGlyphs" >0.5053</text>
<rect x="837.8" y="887.88" width="743.8" height="27.6" fill="#808080"/>
<rect x="816.7" y="887.88" width="21.1" height="27.6" fill="#232323"/>
<text x="844.0" y="908.2" font-size="18" fill="#f2f2f2" textLength="88.6" lengthAdjust="spacingAndGlyphs" >Target Y</text>
<text x="1014.4" y="908.2" font-size="18" fill="#f2f2f2" textLength="98.8" lengthAdjust="spacingAndGlyphs" >192.5085</text>
<text x="1129.1" y="908.2" font-size="18" fill="#f2f2f2" textLength="98.8" lengthAdjust="spacingAndGlyphs" >189.1294</text>
<text x="1243.9" y="908.2" font-size="18" fill="#f2f2f2" textLength="98.8" lengthAdjust="spacingAndGlyphs" >186.5330</text>
<text x="1358.6" y="908.2" font-size="18" fill="#f2f2f2" textLength="98.8" lengthAdjust="spacingAndGlyphs" >184.4954</text>
<text x="1473.4" y="908.2" font-size="18" fill="#f2f2f2" textLength="98.8" lengthAdjust="spacingAndGlyphs" >182.5255</text>
<rect x="837.8" y="915.25" width="743.8" height="27.6" fill="#434343"/>
<rect x="816.7" y="915.25" width="21.1" height="27.6" fill="#262626"/>
<text x="844.0" y="935.5" font-size="18" fill="#f2f2f2" textLength="89.5" lengthAdjust="spacingAndGlyphs" >ΔE 2000</text>
<text x="1014.4" y="935.5" font-size="18" fill="#f2f2f2" textLength="71.0" lengthAdjust="spacingAndGlyphs" >0.4986</text>
<text x="1129.1" y="935.5" font-size="18" fill="#f2f2f2" textLength="71.0" lengthAdjust="spacingAndGlyphs" >0.4602</text>
<text x="1243.9" y="935.5" font-size="18" fill="#f2f2f2" textLength="71.0" lengthAdjust="spacingAndGlyphs" >0.4175</text>
<text x="1358.6" y="935.5" font-size="18" fill="#f2f2f2" textLength="71.0" lengthAdjust="spacingAndGlyphs" >0.2921</text>
<text x="1473.4" y="935.5" font-size="18" fill="#f2f2f2" textLength="71.0" lengthAdjust="spacingAndGlyphs" >0.4355</text>
<rect x="837.8" y="942.62" width="743.8" height="27.6" fill="#808080"/>
<rect x="816.7" y="942.62" width="21.1" height="27.6" fill="#232323"/>
<text x="844.0" y="962.9" font-size="18" fill="#f2f2f2" textLength="60.7" lengthAdjust="spacingAndGlyphs" >dEITP</text>
<text x="1014.4" y="962.9" font-size="18" fill="#f2f2f2" textLength="71.0" lengthAdjust="spacingAndGlyphs" >1.2471</text>
<text x="1129.1" y="962.9" font-size="18" fill="#f2f2f2" textLength="71.0" lengthAdjust="spacingAndGlyphs" >1.4621</text>
<text x="1243.9" y="962.9" font-size="18" fill="#f2f2f2" textLength="71.0" lengthAdjust="spacingAndGlyphs" >1.5709</text>
<text x="1358.6" y="962.9" font-size="18" fill="#f2f2f2" textLength="71.0" lengthAdjust="spacingAndGlyphs" >0.8074</text>
<text x="1473.4" y="962.9" font-size="18" fill="#f2f2f2" textLength="71.0" lengthAdjust="spacingAndGlyphs" >1.5592</text>
<text x="1014.4" y="742.2" font-size="16.5" fill="#fafafa" textLength="41.4" lengthAdjust="spacingAndGlyphs" stroke="#fafafa" stroke-width="0.35">20%</text>
<text x="1129.1" y="742.2" font-size="16.5" fill="#fafafa" textLength="41.4" lengthAdjust="spacingAndGlyphs" stroke="#fafafa" stroke-width="0.35">40%</text>
<text x="1243.9" y="742.2" font-size="16.5" fill="#fafafa" textLength="41.4" lengthAdjust="spacingAndGlyphs" stroke="#fafafa" stroke-width="0.35">60%</text>
<text x="1358.6" y="742.2" font-size="16.5" fill="#fafafa" textLength="41.4" lengthAdjust="spacingAndGlyphs" stroke="#fafafa" stroke-width="0.35">80%</text>
<text x="1473.4" y="742.2" font-size="16.5" fill="#fafafa" textLength="54.7" lengthAdjust="spacingAndGlyphs" stroke="#fafafa" stroke-width="0.35">100%</text>
<rect x="151" y="1011.5" width="1769" height="46.5" fill="url(#bstrip)"/>
<rect x="151" y="1011.5" width="606.5" height="46.5" fill="#2a2a2a"/>
<rect x="151" y="1011.5" width="33.5" height="45.5" rx="3" fill="url(#bbtn)"/>
<circle cx="167.6" cy="1017.9" r="5.5" fill="#8c8c8c" stroke="#5a5a5a" stroke-width="0.8"/><path d="M164.4,1019.5 L167.6,1015.8 L170.8,1019.5 Z" fill="#1a1a1a"/>
<rect x="154.6" y="1030.9" width="26.2" height="22.8" rx="2" fill="#ffff00"/>
<rect x="189.1" y="1011.5" width="112.2" height="45.5" rx="3" fill="url(#bbtn)"/>
<rect x="193.5" y="1015.3" width="104.5" height="27" rx="2" fill="#c2c3a4" stroke="#8a8a8a" stroke-width="0.6"/>
<text x="245.2" y="1053.2" font-size="8.5" fill="#3a3a3a" text-anchor="middle" textLength="15.5" lengthAdjust="spacingAndGlyphs" >20%</text>
<rect x="302.9" y="1011.5" width="112.2" height="45.5" rx="3" fill="url(#bbtn)"/>
<rect x="307.3" y="1015.3" width="104.5" height="27" rx="2" fill="#c1c085" stroke="#8a8a8a" stroke-width="0.6"/>
<text x="359.0" y="1053.2" font-size="8.5" fill="#3a3a3a" text-anchor="middle" textLength="15.5" lengthAdjust="spacingAndGlyphs" >40%</text>
<rect x="417.0" y="1011.5" width="112.2" height="45.5" rx="3" fill="url(#bbtn)"/>
<rect x="421.4" y="1015.3" width="104.5" height="27" rx="2" fill="#c2c06b" stroke="#8a8a8a" stroke-width="0.6"/>
<text x="473.1" y="1053.2" font-size="8.5" fill="#3a3a3a" text-anchor="middle" textLength="15.5" lengthAdjust="spacingAndGlyphs" >60%</text>
<rect x="531.0" y="1011.5" width="112.2" height="45.5" rx="3" fill="url(#bbtn)"/>
<rect x="535.4" y="1015.3" width="104.5" height="27" rx="2" fill="#c2be4d" stroke="#8a8a8a" stroke-width="0.6"/>
<text x="587.1" y="1053.2" font-size="8.5" fill="#3a3a3a" text-anchor="middle" textLength="15.5" lengthAdjust="spacingAndGlyphs" >80%</text>
<rect x="645.1" y="1011.5" width="112.3" height="45.5" rx="3" fill="#2e2e2e"/>
<rect x="645.1" y="1011.5" width="112.3" height="4" fill="#1e1e1e"/>
<rect x="648.9" y="1015.3" width="105" height="27" rx="2" fill="#c3c000"/>
<text x="701.4" y="1053.2" font-size="8.5" fill="#fff" text-anchor="middle" font-weight="bold" textLength="20.0" lengthAdjust="spacingAndGlyphs" >100%</text>
<rect x="1715.1" y="1012" width="32.8" height="22" rx="2" fill="url(#bbtn)"/>
<circle cx="1731.6" cy="1024" r="6" fill="#6a6a6a"/>
<rect x="1748.9" y="1012" width="32.8" height="22" rx="2" fill="url(#bbtn)"/>
<circle cx="1765.4" cy="1024" r="6" fill="#6a6a6a"/>
<rect x="1782.7" y="1012" width="32.8" height="22" rx="2" fill="url(#bbtn)"/>
<circle cx="1799.2" cy="1024" r="6" fill="#6a6a6a"/>
<rect x="1816.5" y="1012" width="32.8" height="22" rx="2" fill="url(#bbtn)"/>
<circle cx="1833.0" cy="1024" r="6" fill="#6a6a6a"/>
<rect x="1850.3" y="1012" width="32.8" height="22" rx="2" fill="url(#bbtn)"/>
<circle cx="1866.8" cy="1024" r="6" fill="#6a6a6a"/>
<rect x="1678.3" y="1027" width="34.5" height="31" rx="3" fill="url(#bbtn)"/>
<rect x="1685" y="1031.3" width="20" height="19.6" rx="3" fill="#a8a8a8" stroke="#1a1a1a" stroke-width="2"/>
<rect x="1690.6" y="1036.6" width="10.2" height="9.6" fill="#050505"/>
<rect x="1714.6" y="1034.9" width="100.9" height="23.1" rx="2" fill="url(#nbtn)"/>
<rect x="1815.9" y="1034.9" width="104.1" height="23.1" rx="2" fill="url(#nbtn)"/>
<circle cx="1737.6" cy="1045.9" r="7" fill="#a8a8a8"/><circle cx="1897" cy="1045.9" r="7" fill="#a8a8a8"/>
<text x="1737.6" y="1050.0" font-size="13" fill="#333" text-anchor="middle" >«</text>
<text x="1897.0" y="1050.0" font-size="13" fill="#333" text-anchor="middle" >»</text>
<text x="1758.0" y="1051.7" font-size="17" fill="#2a2a2a" >Back</text>
<text x="1837.7" y="1051.7" font-size="17" fill="#2a2a2a" textLength="38.3" lengthAdjust="spacingAndGlyphs" >Next</text>
<path d="M1631,997 L1668.5,1004 L1669.5,1027 L1641,1029.5 L1697.5,1032.5 L1656.5,1044 L1632,1031.5 Z" fill="none" stroke="#c4c4c4" stroke-opacity="0.75" stroke-width="6.2" stroke-linejoin="round"/>
<path d="M1631,997 L1668.5,1004 L1669.5,1027 L1641,1029.5 L1697.5,1032.5 L1656.5,1044 L1632,1031.5 Z" fill="none" stroke="#9a2630" stroke-opacity="0.92" stroke-width="4" stroke-linejoin="round"/>
<path d="M1641.5,1009.5 L1654,1023 L1674,996.5" fill="none" stroke="#c8c8c8" stroke-opacity="0.8" stroke-width="5" stroke-linejoin="round" stroke-linecap="round"/>
<path d="M1641.5,1009.5 L1654,1023 L1674,996.5" fill="none" stroke="#333" stroke-width="2.8" stroke-linejoin="round" stroke-linecap="round"/>
<text x="1675.2" y="1025" font-size="27.5" font-weight="bold" fill="none" stroke="#cfcfcf" stroke-opacity="0.8" stroke-width="4.2" stroke-linejoin="round" textLength="149" lengthAdjust="spacingAndGlyphs">NOTEBOOK</text>
<text x="1675.2" y="1025" font-size="27.5" font-weight="bold" fill="#a32834" fill-opacity="0.85" stroke="#a32834" stroke-opacity="0.85" stroke-width="0.9" stroke-linejoin="round" textLength="149" lengthAdjust="spacingAndGlyphs">NOTEBOOK</text>
<text x="1824.4" y="1025" font-size="27.5" font-weight="bold" fill="none" stroke="#d4d4d4" stroke-opacity="0.85" stroke-width="4" stroke-linejoin="round" textLength="88.6" lengthAdjust="spacingAndGlyphs">CHECK</text>
<text x="1824.4" y="1025" font-size="27.5" font-weight="bold" fill="#262626" fill-opacity="0.4" stroke="#262626" stroke-opacity="0.6" stroke-width="1.2" stroke-linejoin="round" textLength="88.6" lengthAdjust="spacingAndGlyphs">CHECK</text>
</svg></body></html>
